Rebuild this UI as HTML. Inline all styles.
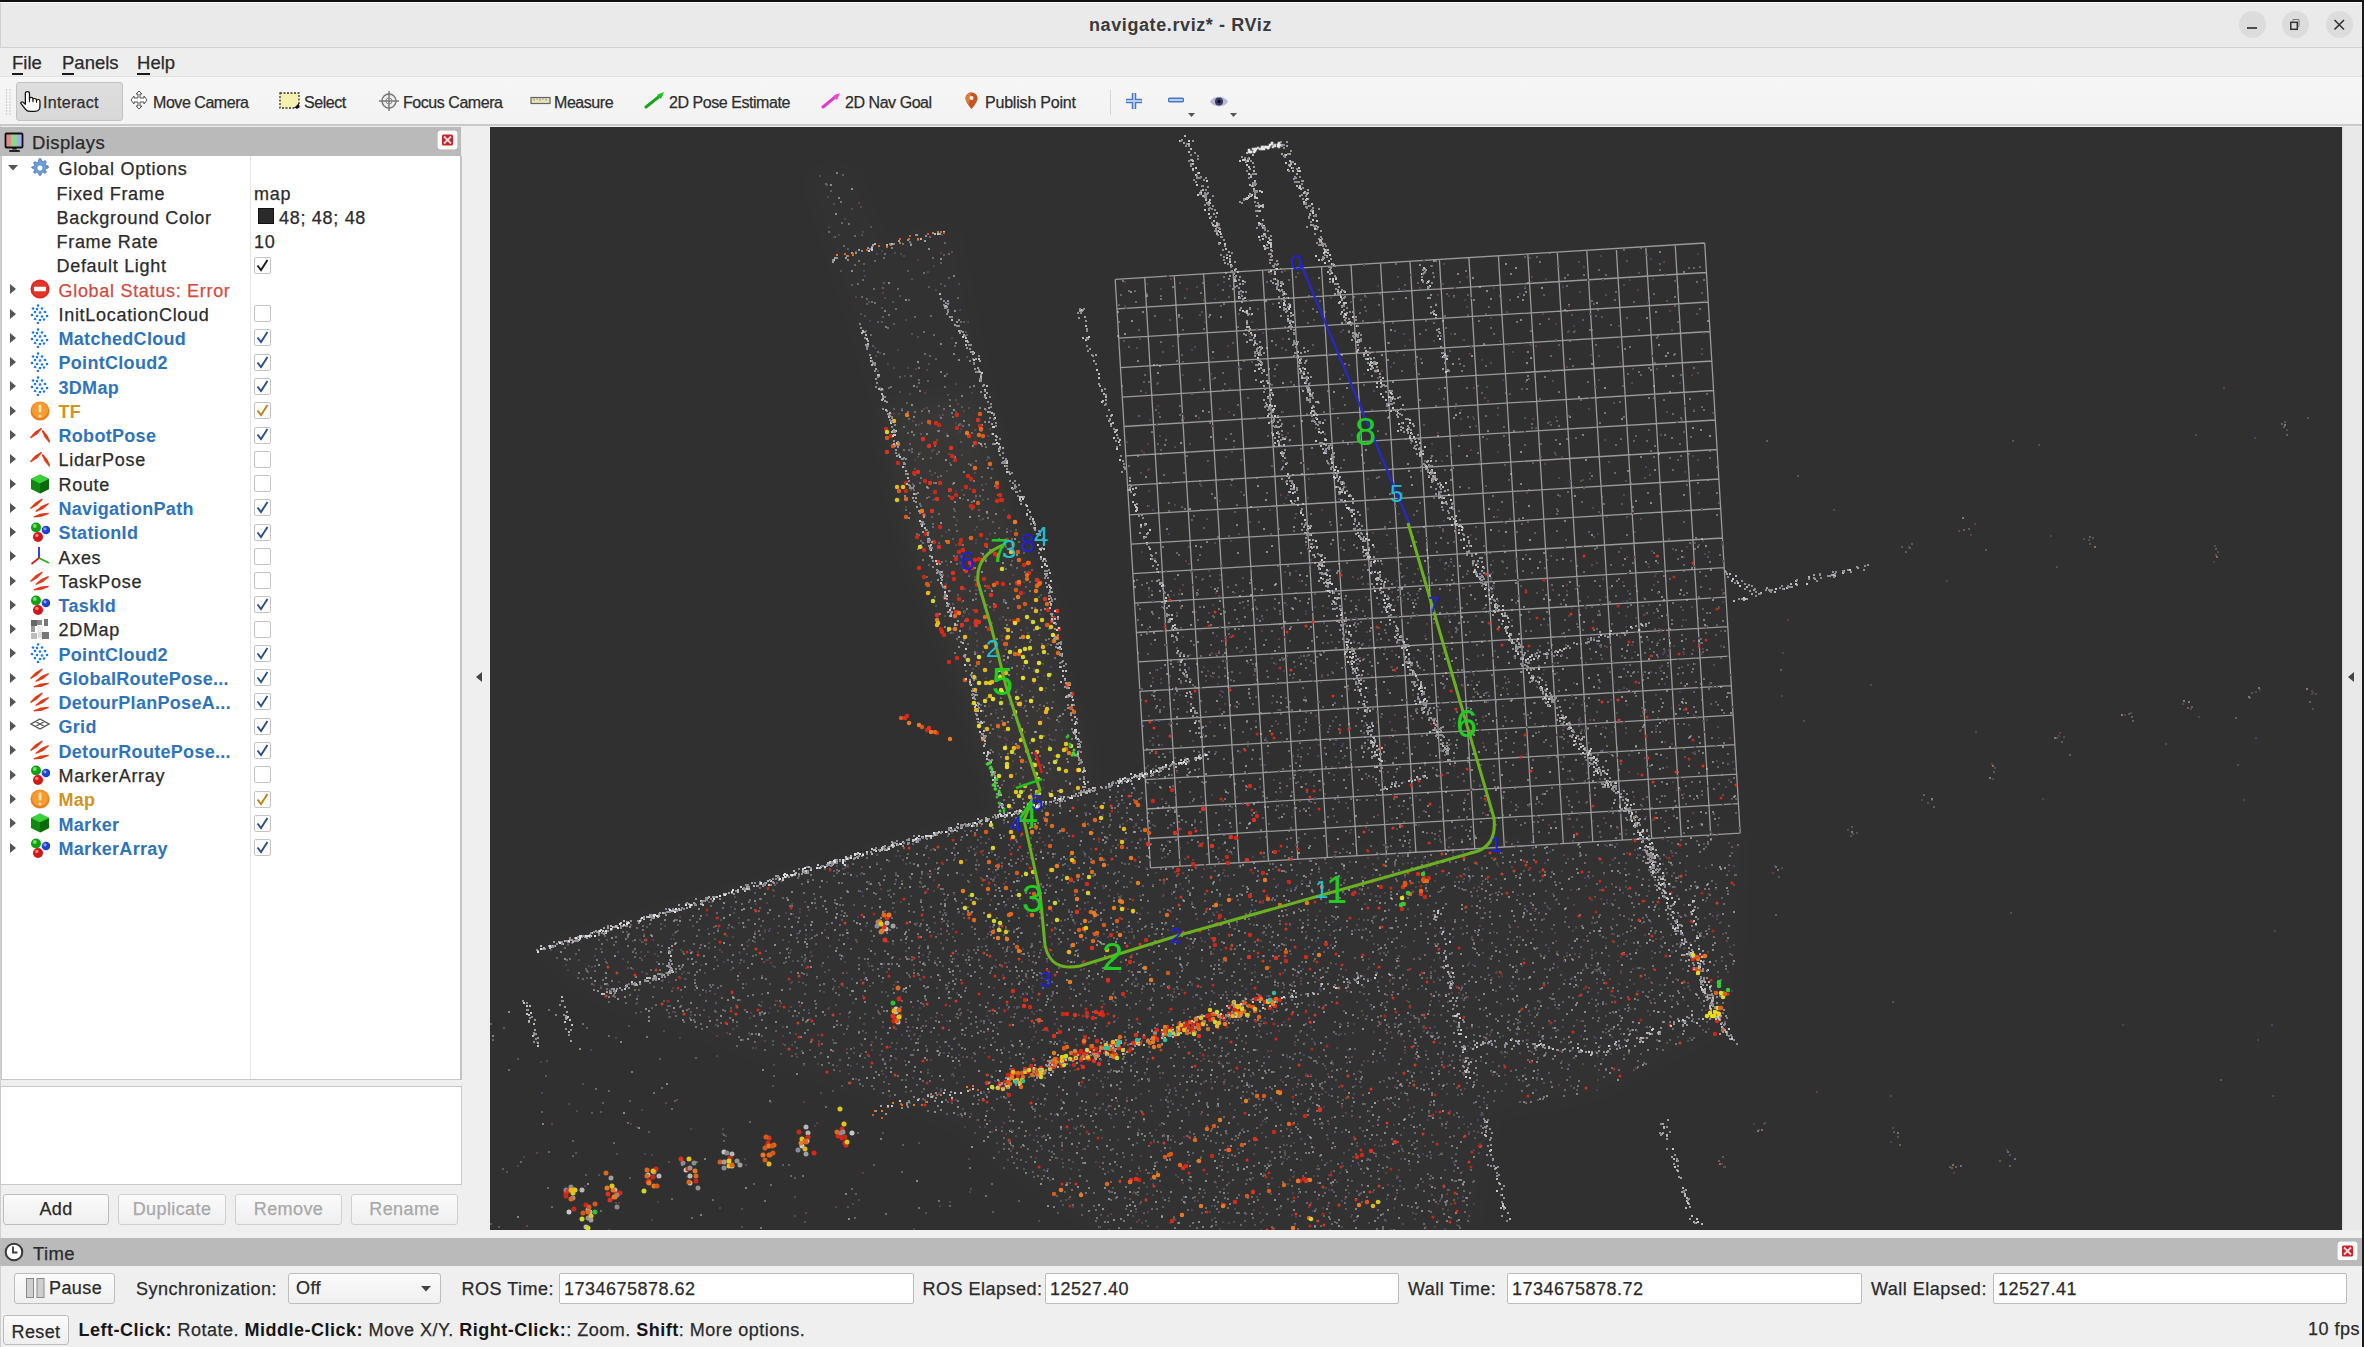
<!DOCTYPE html><html><head><meta charset="utf-8"><style>
*{box-sizing:border-box;margin:0;padding:0}
html,body{width:2364px;height:1347px;overflow:hidden;background:#efefef;font-family:"Liberation Sans",sans-serif;color:#2b2b2b;-webkit-text-stroke:0.25px currentColor}
svg text{-webkit-text-stroke:0}
b,.blue,.orange,.bold{-webkit-text-stroke:0}
b{color:#151515}
.a{position:absolute;white-space:pre}
#titlebar{position:absolute;left:0;top:0;width:2364px;height:48px;background:#eaeaea;border-top:2px solid #111;border-bottom:1px solid #d2d2d2}
#menubar{position:absolute;left:0;top:48px;width:2364px;height:29px;background:#eeeeee;border-bottom:1px solid #e0e0e0}
#toolbar{position:absolute;left:0;top:77px;width:2364px;height:49px;background:linear-gradient(#f6f6f6,#f3f3f3);border-bottom:2px solid #c9c9c9}
.mi{position:absolute;top:52px;font-size:18.5px;color:#2a2a2a}
.mi u{text-decoration:none;border-bottom:2px solid #1a1a1a}
.tb{position:absolute;top:93.5px;letter-spacing:-0.45px;font-size:16px;color:#2e2e2e;line-height:18px}
.dockhdr{position:absolute;background:#bababa}
.tree{position:absolute;left:1px;top:156px;width:461px;height:924px;background:#fff;border:1px solid #c8c8c8;border-right:2px solid #c4c4c4;border-top:none}
.row{position:absolute;font-size:18px;letter-spacing:0.7px;line-height:22px}
.blue{color:#2f73ba;font-weight:bold;letter-spacing:0.3px}
.orange{color:#cf9421;font-weight:bold;letter-spacing:0.3px}
.red{color:#cf4c3e}
.chk{position:absolute;left:254px;width:17px;height:17px;border:1px solid #c4c4c4;border-radius:2px;background:#fff}
.btn{position:absolute;border:1px solid #bdbdbd;border-radius:3px;background:linear-gradient(#fbfbfb,#efefef);font-size:18px;letter-spacing:0.4px;text-align:center;line-height:29px;color:#2a2a2a}
.btn.dis{color:#a8a8a8;border-color:#cfcfcf}
.field{position:absolute;background:#fff;border:1px solid #bcbcbc;border-radius:2px;font-size:18px;letter-spacing:0.5px;line-height:30px;padding-left:4px;color:#2a2a2a}
.lbl{position:absolute;font-size:18px;letter-spacing:0.5px;color:#2a2a2a;line-height:22px}
#v3d{position:absolute;left:490px;top:127px;width:1852px;height:1103px;background:#303030;overflow:hidden}#v3d svg{position:absolute;left:0;top:0}</style></head><body><div id="titlebar"></div>
<div class="a" style="left:0;top:2px;width:2362px;height:1px;background:#fafafa"></div>
<div class="a" style="left:0;top:3px;width:1px;height:1344px;background:#d0d0d0"></div>
<div class="a bold" style="left:1089px;top:15.3px;font-size:18px;font-weight:bold;color:#3a3a3a;letter-spacing:0.6px">navigate.rviz* - RViz</div>
<div class="a" style="left:2239px;top:11px;width:27px;height:27px;border-radius:50%;background:#dcdcdc"></div>
<div class="a" style="left:2282px;top:11px;width:27px;height:27px;border-radius:50%;background:#dcdcdc"></div>
<div class="a" style="left:2326px;top:11px;width:27px;height:27px;border-radius:50%;background:#dcdcdc"></div>
<svg class="a" style="left:2245px;top:18px" width="14" height="14" viewBox="0 0 14 14"><path d="M2 10h10" stroke="#333" stroke-width="1.7"/></svg>
<svg class="a" style="left:2289px;top:18px" width="13" height="13" viewBox="0 0 13 13"><rect x="1.8" y="4.3" width="6.5" height="7" fill="none" stroke="#333" stroke-width="1.5"/><path d="M4 3.5V1.5h6v7H8.5" fill="none" stroke="#777" stroke-width="1"/></svg>
<svg class="a" style="left:2332px;top:18px" width="14" height="14" viewBox="0 0 14 14"><path d="M2.5 2l9.5 9.5M12 2l-9.5 9.5" stroke="#333" stroke-width="1.6"/></svg>
<div id="menubar"></div>
<div class="mi" style="left:12px"><u>F</u>ile</div>
<div class="mi" style="left:62px"><u>P</u>anels</div>
<div class="mi" style="left:137px"><u>H</u>elp</div>
<div id="toolbar"></div>
<svg class="a" style="left:5px;top:88px" width="7" height="28" viewBox="0 0 7 28"><circle cx="1.5" cy="2" r="0.7" fill="#bbb"/><circle cx="1.5" cy="5" r="0.7" fill="#bbb"/><circle cx="1.5" cy="8" r="0.7" fill="#bbb"/><circle cx="1.5" cy="11" r="0.7" fill="#bbb"/><circle cx="1.5" cy="14" r="0.7" fill="#bbb"/><circle cx="1.5" cy="17" r="0.7" fill="#bbb"/><circle cx="1.5" cy="20" r="0.7" fill="#bbb"/><circle cx="1.5" cy="23" r="0.7" fill="#bbb"/><circle cx="1.5" cy="26" r="0.7" fill="#bbb"/><circle cx="5" cy="2" r="0.7" fill="#bbb"/><circle cx="5" cy="5" r="0.7" fill="#bbb"/><circle cx="5" cy="8" r="0.7" fill="#bbb"/><circle cx="5" cy="11" r="0.7" fill="#bbb"/><circle cx="5" cy="14" r="0.7" fill="#bbb"/><circle cx="5" cy="17" r="0.7" fill="#bbb"/><circle cx="5" cy="20" r="0.7" fill="#bbb"/><circle cx="5" cy="23" r="0.7" fill="#bbb"/><circle cx="5" cy="26" r="0.7" fill="#bbb"/></svg>
<div class="a" style="left:16px;top:82px;width:107px;height:39px;border:1px solid #c2c2c2;border-radius:3px;background:linear-gradient(#dedede,#d8d8d8)"></div>
<svg class="a" style="left:19.5px;top:90.5px" width="21" height="21" viewBox="0.4 0.4 18 20" preserveAspectRatio="none"><path d="M5 13V2.75a1.75 1.75 0 0 1 3.5 0V8a1.5 1.5 0 0 1 3 0V9a1.5 1.5 0 0 1 3 0V10a1.5 1.5 0 0 1 3 0V15.5c0 2.5-1.8 4.3-4.3 4.3H8.8c-1.7 0-2.9-.9-3.8-2.2L1.3 12.5c-.7-1 .6-2.3 1.6-1.5L5 13z" fill="#fff" stroke="#111" stroke-width="1.1" stroke-linejoin="round"/><path d="M8.5 8V11M11.5 9V11M14.5 10V11.5" stroke="#111" stroke-width="0.9"/></svg>
<div class="tb" style="left:43px;letter-spacing:0.3px">Interact</div>
<svg class="a" style="left:129px;top:90px" width="21" height="21" viewBox="0 0 21 21"><path d="M10 1l3 3h-2v4h4V6l3 4-3 4v-2h-4v4h2l-3 3-3-3h2v-4H5v2l-3-4 3-4v2h4V4H7z" fill="#fff" stroke="#555" stroke-width="1"/></svg>
<div class="tb" style="left:153px">Move Camera</div>
<svg class="a" style="left:279px;top:92px" width="22" height="17" viewBox="0 0 22 17"><rect x="1" y="1" width="19" height="15" fill="#f4f0b0" stroke="#333" stroke-width="1.3" stroke-dasharray="2 1.5"/><path d="M15 16l5-5v5z" fill="#111"/></svg>
<div class="tb" style="left:304px">Select</div>
<svg class="a" style="left:378px;top:90px" width="22" height="22" viewBox="0 0 22 22"><circle cx="11" cy="11" r="7" fill="#eee" stroke="#777" stroke-width="1.4"/><path d="M11 1v20M1 11h20" stroke="#777" stroke-width="1.4"/><circle cx="11" cy="11" r="3" fill="none" stroke="#888"/></svg>
<div class="tb" style="left:403px">Focus Camera</div>
<svg class="a" style="left:530px;top:96px" width="21" height="9" viewBox="0 0 21 9"><rect x="1" y="1.5" width="19" height="6" fill="#e8e4b8" stroke="#666" stroke-width="1.2"/><path d="M4 2v3M7 2v2M10 2v3M13 2v2M16 2v3" stroke="#888" stroke-width="0.8"/></svg>
<div class="tb" style="left:554px">Measure</div>
<svg class="a" style="left:644px;top:92px" width="21" height="17" viewBox="0 0 21 17"><path d="M2 15L17 3" stroke="#1aa51a" stroke-width="3" stroke-linecap="round"/><path d="M20 0l-7 3 4 4z" fill="#1ec21e"/></svg>
<div class="tb" style="left:669px">2D Pose Estimate</div>
<svg class="a" style="left:821px;top:92px" width="21" height="17" viewBox="0 0 21 17"><path d="M2 15L16 3.5" stroke="#e23ad0" stroke-width="3" stroke-linecap="round"/><path d="M19 1l-7 3 4 4z" fill="#e84ad8"/></svg>
<div class="tb" style="left:845px">2D Nav Goal</div>
<svg class="a" style="left:965px;top:92px" width="13" height="17" viewBox="0 0 13 17"><path d="M6.5 0.5C3 .5 .5 3 .5 6.5c0 4 6 10.5 6 10.5s6-6.5 6-10.5C12.5 3 10 .5 6.5.5z" fill="#c4551e"/><path d="M6.5.5C3 .5 .5 3 .5 6.5c0 2 1.5 4.5 3 6.5" fill="#e07a3a"/><circle cx="6.5" cy="6" r="2" fill="#fff"/></svg>
<div class="tb" style="left:985px;letter-spacing:-0.2px">Publish Point</div>
<div class="a" style="left:1110px;top:90px;width:1px;height:25px;background:#d6d6d6"></div>
<svg class="a" style="left:1126px;top:93px" width="16" height="16" viewBox="0 0 16 16"><path d="M8 1v14M1 8h14" stroke="#4a78c0" stroke-width="4.5" stroke-linecap="round"/><path d="M8 1v14M1 8h14" stroke="#b9cdee" stroke-width="1.8" stroke-linecap="round"/></svg>
<svg class="a" style="left:1168px;top:97px" width="16" height="6" viewBox="0 0 16 6"><path d="M2 3h12" stroke="#4a78c0" stroke-width="5" stroke-linecap="round"/><path d="M2 3h12" stroke="#b9cdee" stroke-width="2" stroke-linecap="round"/></svg>
<svg class="a" style="left:1188px;top:113px" width="7" height="4" viewBox="0 0 7 4"><path d="M0 0h7l-3.5 4z" fill="#555"/></svg>
<svg class="a" style="left:1209px;top:95px" width="20" height="13" viewBox="0 0 20 13"><path d="M1 6.5C5 0 15 0 19 6.5 15 13 5 13 1 6.5z" fill="#b8b8d0"/><circle cx="10" cy="6.5" r="4" fill="#3a3a6a"/><circle cx="10" cy="6.5" r="1.5" fill="#000"/></svg>
<svg class="a" style="left:1230px;top:113px" width="7" height="4" viewBox="0 0 7 4"><path d="M0 0h7l-3.5 4z" fill="#555"/></svg>
<div class="dockhdr" style="left:0;top:127px;width:461px;height:29px"></div>
<svg class="a" style="left:1px;top:130px" width="24" height="24" viewBox="0 0 24 24"><rect x="4" y="4" width="6" height="13" fill="#e08a8a"/><rect x="10" y="4" width="6" height="13" fill="#8ad88a"/><rect x="16" y="4" width="5" height="13" fill="#a8a8f0"/><rect x="4.5" y="3.5" width="17" height="14" fill="none" stroke="#111" stroke-width="1.8" rx="1"/><path d="M12 17.5h3l1 2h-5z" fill="#111"/><rect x="8" y="20" width="11" height="2" rx="1" fill="#222"/></svg>
<div class="a" style="left:32px;top:131.5px;font-size:18.5px;letter-spacing:0.4px;color:#2a2a2a">Displays</div>
<svg class="a" style="left:437px;top:130px" width="21" height="20" viewBox="0 0 21 20"><rect x="0" y="0" width="21" height="20" rx="3" fill="#fafafa" stroke="#9a9a9a" stroke-width="0.8"/><rect x="5" y="4.5" width="11" height="11" rx="1.5" fill="#c8222a"/><path d="M7 6.5l7 7M14 6.5l-7 7" stroke="#ffdede" stroke-width="1.8"/></svg>
<div class="tree"></div>
<div class="a" style="left:250px;top:156px;width:1px;height:923px;background:#e6e6e6"></div>
<svg class="a" style="left:8px;top:165px" width="10" height="6" viewBox="0 0 10 6"><path d="M0 0h10L5 5.5z" fill="#555"/></svg>
<svg class="a" style="left:30px;top:158px" width="20" height="20" viewBox="0 0 20 20"><g fill="#6f9fd8" stroke="#3f74b8" stroke-width="0.8"><path d="M9 0.8h2l.5 2.4 1.6.7 2-1.4 1.4 1.4-1.4 2 .7 1.6 2.4.5v2l-2.4.5-.7 1.6 1.4 2-1.4 1.4-2-1.4-1.6.7-.5 2.4H9l-.5-2.4-1.6-.7-2 1.4-1.4-1.4 1.4-2-.7-1.6-2.4-.5V9l2.4-.5.7-1.6-1.4-2 1.4-1.4 2 1.4 1.6-.7z"/></g><circle cx="10" cy="10" r="3.2" fill="#fff" stroke="#3f74b8" stroke-width="0.8"/></svg>
<div class="row " style="left:58.5px;top:158.2px">Global Options</div>
<div class="row " style="left:56.5px;top:182.5px">Fixed Frame</div>
<div class="row" style="left:254px;top:182.5px">map</div>
<div class="row " style="left:56.5px;top:206.7px">Background Color</div>
<div class="a" style="left:257.5px;top:208.0px;width:16px;height:16px;background:#2a2a2a;border:1px solid #111"></div>
<div class="row" style="left:279px;top:206.7px">48; 48; 48</div>
<div class="row " style="left:56.5px;top:231.0px">Frame Rate</div>
<div class="row" style="left:254px;top:231.0px">10</div>
<div class="row " style="left:56.5px;top:255.3px">Default Light</div>
<div class="chk" style="top:256.6px"></div>
<svg class="a" style="left:254px;top:257px" width="17" height="17" viewBox="0 0 17 17"><path d="M3.5 8.5L7 13 13.5 3" fill="none" stroke="#1a1a1a" stroke-width="1.9"/></svg>
<svg class="a" style="left:10px;top:284px" width="6" height="10" viewBox="0 0 6 10"><path d="M0 0l6 5-6 5z" fill="#555"/></svg>
<svg class="a" style="left:30px;top:279px" width="20" height="20" viewBox="0 0 20 20"><circle cx="10" cy="10" r="9.5" fill="#d9261c"/><circle cx="10" cy="10" r="8" fill="#e6332a"/><rect x="4" y="7.8" width="12" height="4.4" rx="1" fill="#fff"/></svg>
<div class="row red" style="left:58.5px;top:279.6px">Global Status: Error</div>
<svg class="a" style="left:10px;top:309px" width="6" height="10" viewBox="0 0 6 10"><path d="M0 0l6 5-6 5z" fill="#555"/></svg>
<svg class="a" style="left:30px;top:304px" width="20" height="20" viewBox="0 0 20 20"><circle cx="8" cy="1.5" r="1.3" fill="#1d7ad6"/><circle cx="3" cy="4.5" r="1.3" fill="#1d7ad6"/><circle cx="7" cy="5" r="1.3" fill="#1d7ad6"/><circle cx="12" cy="4.5" r="1.3" fill="#1d7ad6"/><circle cx="5" cy="8" r="1.3" fill="#1d7ad6"/><circle cx="10" cy="8.5" r="1.3" fill="#1d7ad6"/><circle cx="15" cy="8" r="1.3" fill="#1d7ad6"/><circle cx="2" cy="11" r="1.3" fill="#1d7ad6"/><circle cx="7" cy="12" r="1.3" fill="#1d7ad6"/><circle cx="12" cy="12.5" r="1.3" fill="#1d7ad6"/><circle cx="17" cy="12" r="1.3" fill="#1d7ad6"/><circle cx="5" cy="15" r="1.3" fill="#1d7ad6"/><circle cx="10" cy="16" r="1.3" fill="#1d7ad6"/><circle cx="14" cy="15.5" r="1.3" fill="#1d7ad6"/><circle cx="8" cy="19" r="1.3" fill="#1d7ad6"/></svg>
<div class="row " style="left:58.5px;top:303.8px">InitLocationCloud</div>
<div class="chk" style="top:305.1px"></div>
<svg class="a" style="left:10px;top:333px" width="6" height="10" viewBox="0 0 6 10"><path d="M0 0l6 5-6 5z" fill="#555"/></svg>
<svg class="a" style="left:30px;top:328px" width="20" height="20" viewBox="0 0 20 20"><circle cx="8" cy="1.5" r="1.3" fill="#1d7ad6"/><circle cx="3" cy="4.5" r="1.3" fill="#1d7ad6"/><circle cx="7" cy="5" r="1.3" fill="#1d7ad6"/><circle cx="12" cy="4.5" r="1.3" fill="#1d7ad6"/><circle cx="5" cy="8" r="1.3" fill="#1d7ad6"/><circle cx="10" cy="8.5" r="1.3" fill="#1d7ad6"/><circle cx="15" cy="8" r="1.3" fill="#1d7ad6"/><circle cx="2" cy="11" r="1.3" fill="#1d7ad6"/><circle cx="7" cy="12" r="1.3" fill="#1d7ad6"/><circle cx="12" cy="12.5" r="1.3" fill="#1d7ad6"/><circle cx="17" cy="12" r="1.3" fill="#1d7ad6"/><circle cx="5" cy="15" r="1.3" fill="#1d7ad6"/><circle cx="10" cy="16" r="1.3" fill="#1d7ad6"/><circle cx="14" cy="15.5" r="1.3" fill="#1d7ad6"/><circle cx="8" cy="19" r="1.3" fill="#1d7ad6"/></svg>
<div class="row blue" style="left:58.5px;top:328.1px">MatchedCloud</div>
<div class="chk" style="top:329.4px"></div>
<svg class="a" style="left:254px;top:329px" width="17" height="17" viewBox="0 0 17 17"><path d="M3.5 8.5L7 13 13.5 3" fill="none" stroke="#2c4f86" stroke-width="1.9"/></svg>
<svg class="a" style="left:10px;top:357px" width="6" height="10" viewBox="0 0 6 10"><path d="M0 0l6 5-6 5z" fill="#555"/></svg>
<svg class="a" style="left:30px;top:352px" width="20" height="20" viewBox="0 0 20 20"><circle cx="8" cy="1.5" r="1.3" fill="#1d7ad6"/><circle cx="3" cy="4.5" r="1.3" fill="#1d7ad6"/><circle cx="7" cy="5" r="1.3" fill="#1d7ad6"/><circle cx="12" cy="4.5" r="1.3" fill="#1d7ad6"/><circle cx="5" cy="8" r="1.3" fill="#1d7ad6"/><circle cx="10" cy="8.5" r="1.3" fill="#1d7ad6"/><circle cx="15" cy="8" r="1.3" fill="#1d7ad6"/><circle cx="2" cy="11" r="1.3" fill="#1d7ad6"/><circle cx="7" cy="12" r="1.3" fill="#1d7ad6"/><circle cx="12" cy="12.5" r="1.3" fill="#1d7ad6"/><circle cx="17" cy="12" r="1.3" fill="#1d7ad6"/><circle cx="5" cy="15" r="1.3" fill="#1d7ad6"/><circle cx="10" cy="16" r="1.3" fill="#1d7ad6"/><circle cx="14" cy="15.5" r="1.3" fill="#1d7ad6"/><circle cx="8" cy="19" r="1.3" fill="#1d7ad6"/></svg>
<div class="row blue" style="left:58.5px;top:352.4px">PointCloud2</div>
<div class="chk" style="top:353.7px"></div>
<svg class="a" style="left:254px;top:354px" width="17" height="17" viewBox="0 0 17 17"><path d="M3.5 8.5L7 13 13.5 3" fill="none" stroke="#2c4f86" stroke-width="1.9"/></svg>
<svg class="a" style="left:10px;top:381px" width="6" height="10" viewBox="0 0 6 10"><path d="M0 0l6 5-6 5z" fill="#555"/></svg>
<svg class="a" style="left:30px;top:376px" width="20" height="20" viewBox="0 0 20 20"><circle cx="8" cy="1.5" r="1.3" fill="#1d7ad6"/><circle cx="3" cy="4.5" r="1.3" fill="#1d7ad6"/><circle cx="7" cy="5" r="1.3" fill="#1d7ad6"/><circle cx="12" cy="4.5" r="1.3" fill="#1d7ad6"/><circle cx="5" cy="8" r="1.3" fill="#1d7ad6"/><circle cx="10" cy="8.5" r="1.3" fill="#1d7ad6"/><circle cx="15" cy="8" r="1.3" fill="#1d7ad6"/><circle cx="2" cy="11" r="1.3" fill="#1d7ad6"/><circle cx="7" cy="12" r="1.3" fill="#1d7ad6"/><circle cx="12" cy="12.5" r="1.3" fill="#1d7ad6"/><circle cx="17" cy="12" r="1.3" fill="#1d7ad6"/><circle cx="5" cy="15" r="1.3" fill="#1d7ad6"/><circle cx="10" cy="16" r="1.3" fill="#1d7ad6"/><circle cx="14" cy="15.5" r="1.3" fill="#1d7ad6"/><circle cx="8" cy="19" r="1.3" fill="#1d7ad6"/></svg>
<div class="row blue" style="left:58.5px;top:376.6px">3DMap</div>
<div class="chk" style="top:377.9px"></div>
<svg class="a" style="left:254px;top:378px" width="17" height="17" viewBox="0 0 17 17"><path d="M3.5 8.5L7 13 13.5 3" fill="none" stroke="#2c4f86" stroke-width="1.9"/></svg>
<svg class="a" style="left:10px;top:406px" width="6" height="10" viewBox="0 0 6 10"><path d="M0 0l6 5-6 5z" fill="#555"/></svg>
<svg class="a" style="left:30px;top:401px" width="20" height="20" viewBox="0 0 20 20"><circle cx="10" cy="10" r="9.5" fill="#e8801a"/><circle cx="10" cy="9" r="8" fill="#f59b30"/><rect x="8.6" y="3.5" width="2.8" height="8" rx="1.2" fill="#fde0b0"/><circle cx="10" cy="15" r="1.6" fill="#fde0b0"/></svg>
<div class="row orange" style="left:58.5px;top:400.9px">TF</div>
<div class="chk" style="top:402.2px"></div>
<svg class="a" style="left:254px;top:402px" width="17" height="17" viewBox="0 0 17 17"><path d="M3.5 8.5L7 13 13.5 3" fill="none" stroke="#b78416" stroke-width="1.9"/></svg>
<svg class="a" style="left:10px;top:430px" width="6" height="10" viewBox="0 0 6 10"><path d="M0 0l6 5-6 5z" fill="#555"/></svg>
<svg class="a" style="left:30px;top:425px" width="20" height="20" viewBox="0 0 20 20"><polygon points="1.0,13.3 7.2,9.3 12.1,3.7 11.1,2.7 4.9,6.7 0.0,12.3" fill="#e03a1a"/><polygon points="11.7,5.8 14.6,12.3 19.2,17.7 20.4,16.9 17.5,10.4 12.9,5.0" fill="#e03a1a"/></svg>
<div class="row blue" style="left:58.5px;top:425.2px">RobotPose</div>
<div class="chk" style="top:426.5px"></div>
<svg class="a" style="left:254px;top:426px" width="17" height="17" viewBox="0 0 17 17"><path d="M3.5 8.5L7 13 13.5 3" fill="none" stroke="#2c4f86" stroke-width="1.9"/></svg>
<svg class="a" style="left:10px;top:454px" width="6" height="10" viewBox="0 0 6 10"><path d="M0 0l6 5-6 5z" fill="#555"/></svg>
<svg class="a" style="left:30px;top:449px" width="20" height="20" viewBox="0 0 20 20"><polygon points="1.0,13.3 7.2,9.3 12.1,3.7 11.1,2.7 4.9,6.7 0.0,12.3" fill="#e03a1a"/><polygon points="11.7,5.8 14.6,12.3 19.2,17.7 20.4,16.9 17.5,10.4 12.9,5.0" fill="#e03a1a"/></svg>
<div class="row " style="left:58.5px;top:449.4px">LidarPose</div>
<div class="chk" style="top:450.7px"></div>
<svg class="a" style="left:10px;top:479px" width="6" height="10" viewBox="0 0 6 10"><path d="M0 0l6 5-6 5z" fill="#555"/></svg>
<svg class="a" style="left:30px;top:474px" width="20" height="20" viewBox="0 0 20 20"><path d="M10 .5l9 4.5v10l-9 4.5-9-4.5V5z" fill="#0f8a0f"/><path d="M10 .5l9 4.5-9 4.5-9-4.5z" fill="#3ad23a"/><path d="M10 9.5l9-4.5v10l-9 4.5z" fill="#0a6a0a"/></svg>
<div class="row " style="left:58.5px;top:473.7px">Route</div>
<div class="chk" style="top:475.0px"></div>
<svg class="a" style="left:10px;top:503px" width="6" height="10" viewBox="0 0 6 10"><path d="M0 0l6 5-6 5z" fill="#555"/></svg>
<svg class="a" style="left:30px;top:498px" width="20" height="20" viewBox="0 0 20 20"><polygon points="0.9,11.1 7.5,7.0 12.8,1.5 12.0,0.5 5.4,4.6 0.1,10.1" fill="#e03a1a"/><polygon points="6.0,14.1 13.1,10.9 19.0,5.9 18.4,4.9 11.3,8.1 5.4,13.1" fill="#e03a1a"/><polygon points="3.9,19.4 11.6,18.7 18.8,16.0 18.6,14.8 10.9,15.5 3.7,18.2" fill="#e03a1a"/></svg>
<div class="row blue" style="left:58.5px;top:498.0px">NavigationPath</div>
<div class="chk" style="top:499.3px"></div>
<svg class="a" style="left:254px;top:499px" width="17" height="17" viewBox="0 0 17 17"><path d="M3.5 8.5L7 13 13.5 3" fill="none" stroke="#2c4f86" stroke-width="1.9"/></svg>
<svg class="a" style="left:10px;top:527px" width="6" height="10" viewBox="0 0 6 10"><path d="M0 0l6 5-6 5z" fill="#555"/></svg>
<svg class="a" style="left:30px;top:522px" width="20" height="20" viewBox="0 0 20 20"><circle cx="6" cy="5.5" r="5" fill="#12a012"/><circle cx="4.8" cy="4" r="2" fill="#6ee06e"/><circle cx="16" cy="8" r="4.3" fill="#2040d0"/><circle cx="15" cy="6.8" r="1.6" fill="#8aa0f0"/><circle cx="8" cy="15" r="5" fill="#d01818"/><circle cx="6.8" cy="13.5" r="1.8" fill="#f08080"/></svg>
<div class="row blue" style="left:58.5px;top:522.2px">StationId</div>
<div class="chk" style="top:523.5px"></div>
<svg class="a" style="left:254px;top:524px" width="17" height="17" viewBox="0 0 17 17"><path d="M3.5 8.5L7 13 13.5 3" fill="none" stroke="#2c4f86" stroke-width="1.9"/></svg>
<svg class="a" style="left:10px;top:551px" width="6" height="10" viewBox="0 0 6 10"><path d="M0 0l6 5-6 5z" fill="#555"/></svg>
<svg class="a" style="left:30px;top:546px" width="20" height="20" viewBox="0 0 20 20"><path d="M9 1v11" stroke="#2030d0" stroke-width="1.8"/><path d="M9 12L1.5 18" stroke="#d02020" stroke-width="1.8"/><path d="M9 12l10 5" stroke="#20b020" stroke-width="1.8"/></svg>
<div class="row " style="left:58.5px;top:546.5px">Axes</div>
<div class="chk" style="top:547.8px"></div>
<svg class="a" style="left:10px;top:576px" width="6" height="10" viewBox="0 0 6 10"><path d="M0 0l6 5-6 5z" fill="#555"/></svg>
<svg class="a" style="left:30px;top:571px" width="20" height="20" viewBox="0 0 20 20"><polygon points="0.9,11.1 7.5,7.0 12.8,1.5 12.0,0.5 5.4,4.6 0.1,10.1" fill="#e03a1a"/><polygon points="6.0,14.1 13.1,10.9 19.0,5.9 18.4,4.9 11.3,8.1 5.4,13.1" fill="#e03a1a"/><polygon points="3.9,19.4 11.6,18.7 18.8,16.0 18.6,14.8 10.9,15.5 3.7,18.2" fill="#e03a1a"/></svg>
<div class="row " style="left:58.5px;top:570.8px">TaskPose</div>
<div class="chk" style="top:572.1px"></div>
<svg class="a" style="left:10px;top:600px" width="6" height="10" viewBox="0 0 6 10"><path d="M0 0l6 5-6 5z" fill="#555"/></svg>
<svg class="a" style="left:30px;top:595px" width="20" height="20" viewBox="0 0 20 20"><circle cx="6" cy="5.5" r="5" fill="#12a012"/><circle cx="4.8" cy="4" r="2" fill="#6ee06e"/><circle cx="16" cy="8" r="4.3" fill="#2040d0"/><circle cx="15" cy="6.8" r="1.6" fill="#8aa0f0"/><circle cx="8" cy="15" r="5" fill="#d01818"/><circle cx="6.8" cy="13.5" r="1.8" fill="#f08080"/></svg>
<div class="row blue" style="left:58.5px;top:595.1px">TaskId</div>
<div class="chk" style="top:596.4px"></div>
<svg class="a" style="left:254px;top:596px" width="17" height="17" viewBox="0 0 17 17"><path d="M3.5 8.5L7 13 13.5 3" fill="none" stroke="#2c4f86" stroke-width="1.9"/></svg>
<svg class="a" style="left:10px;top:624px" width="6" height="10" viewBox="0 0 6 10"><path d="M0 0l6 5-6 5z" fill="#555"/></svg>
<svg class="a" style="left:30px;top:619px" width="20" height="20" viewBox="0 0 20 20"><rect x="1" y="1" width="6" height="6" fill="#666"/><rect x="7" y="1" width="5" height="5" fill="#888"/><rect x="14" y="0" width="4" height="7" fill="#777"/><rect x="1" y="7" width="4" height="6" fill="#999"/><rect x="1" y="14" width="6" height="6" fill="#bbb"/><rect x="8" y="13" width="5" height="6" fill="#ddd"/><rect x="12" y="13" width="7" height="7" fill="#777"/><rect x="7" y="7" width="6" height="6" fill="#eee"/></svg>
<div class="row " style="left:58.5px;top:619.3px">2DMap</div>
<div class="chk" style="top:620.6px"></div>
<svg class="a" style="left:10px;top:648px" width="6" height="10" viewBox="0 0 6 10"><path d="M0 0l6 5-6 5z" fill="#555"/></svg>
<svg class="a" style="left:30px;top:643px" width="20" height="20" viewBox="0 0 20 20"><circle cx="8" cy="1.5" r="1.3" fill="#1d7ad6"/><circle cx="3" cy="4.5" r="1.3" fill="#1d7ad6"/><circle cx="7" cy="5" r="1.3" fill="#1d7ad6"/><circle cx="12" cy="4.5" r="1.3" fill="#1d7ad6"/><circle cx="5" cy="8" r="1.3" fill="#1d7ad6"/><circle cx="10" cy="8.5" r="1.3" fill="#1d7ad6"/><circle cx="15" cy="8" r="1.3" fill="#1d7ad6"/><circle cx="2" cy="11" r="1.3" fill="#1d7ad6"/><circle cx="7" cy="12" r="1.3" fill="#1d7ad6"/><circle cx="12" cy="12.5" r="1.3" fill="#1d7ad6"/><circle cx="17" cy="12" r="1.3" fill="#1d7ad6"/><circle cx="5" cy="15" r="1.3" fill="#1d7ad6"/><circle cx="10" cy="16" r="1.3" fill="#1d7ad6"/><circle cx="14" cy="15.5" r="1.3" fill="#1d7ad6"/><circle cx="8" cy="19" r="1.3" fill="#1d7ad6"/></svg>
<div class="row blue" style="left:58.5px;top:643.6px">PointCloud2</div>
<div class="chk" style="top:644.9px"></div>
<svg class="a" style="left:254px;top:645px" width="17" height="17" viewBox="0 0 17 17"><path d="M3.5 8.5L7 13 13.5 3" fill="none" stroke="#2c4f86" stroke-width="1.9"/></svg>
<svg class="a" style="left:10px;top:673px" width="6" height="10" viewBox="0 0 6 10"><path d="M0 0l6 5-6 5z" fill="#555"/></svg>
<svg class="a" style="left:30px;top:668px" width="20" height="20" viewBox="0 0 20 20"><polygon points="0.9,11.1 7.5,7.0 12.8,1.5 12.0,0.5 5.4,4.6 0.1,10.1" fill="#e03a1a"/><polygon points="6.0,14.1 13.1,10.9 19.0,5.9 18.4,4.9 11.3,8.1 5.4,13.1" fill="#e03a1a"/><polygon points="3.9,19.4 11.6,18.7 18.8,16.0 18.6,14.8 10.9,15.5 3.7,18.2" fill="#e03a1a"/></svg>
<div class="row blue" style="left:58.5px;top:667.9px">GlobalRoutePose...</div>
<div class="chk" style="top:669.2px"></div>
<svg class="a" style="left:254px;top:669px" width="17" height="17" viewBox="0 0 17 17"><path d="M3.5 8.5L7 13 13.5 3" fill="none" stroke="#2c4f86" stroke-width="1.9"/></svg>
<svg class="a" style="left:10px;top:697px" width="6" height="10" viewBox="0 0 6 10"><path d="M0 0l6 5-6 5z" fill="#555"/></svg>
<svg class="a" style="left:30px;top:692px" width="20" height="20" viewBox="0 0 20 20"><polygon points="0.9,11.1 7.5,7.0 12.8,1.5 12.0,0.5 5.4,4.6 0.1,10.1" fill="#e03a1a"/><polygon points="6.0,14.1 13.1,10.9 19.0,5.9 18.4,4.9 11.3,8.1 5.4,13.1" fill="#e03a1a"/><polygon points="3.9,19.4 11.6,18.7 18.8,16.0 18.6,14.8 10.9,15.5 3.7,18.2" fill="#e03a1a"/></svg>
<div class="row blue" style="left:58.5px;top:692.1px">DetourPlanPoseA...</div>
<div class="chk" style="top:693.4px"></div>
<svg class="a" style="left:254px;top:693px" width="17" height="17" viewBox="0 0 17 17"><path d="M3.5 8.5L7 13 13.5 3" fill="none" stroke="#2c4f86" stroke-width="1.9"/></svg>
<svg class="a" style="left:10px;top:721px" width="6" height="10" viewBox="0 0 6 10"><path d="M0 0l6 5-6 5z" fill="#555"/></svg>
<svg class="a" style="left:30px;top:716px" width="20" height="20" viewBox="0 0 20 20"><path d="M10 3l9 5-9 5-9-5z M5.5 5.5l9 5 M14.5 5.5l-9 5" fill="none" stroke="#555" stroke-width="1.3"/></svg>
<div class="row blue" style="left:58.5px;top:716.4px">Grid</div>
<div class="chk" style="top:717.7px"></div>
<svg class="a" style="left:254px;top:718px" width="17" height="17" viewBox="0 0 17 17"><path d="M3.5 8.5L7 13 13.5 3" fill="none" stroke="#2c4f86" stroke-width="1.9"/></svg>
<svg class="a" style="left:10px;top:745px" width="6" height="10" viewBox="0 0 6 10"><path d="M0 0l6 5-6 5z" fill="#555"/></svg>
<svg class="a" style="left:30px;top:740px" width="20" height="20" viewBox="0 0 20 20"><polygon points="0.9,11.1 7.5,7.0 12.8,1.5 12.0,0.5 5.4,4.6 0.1,10.1" fill="#e03a1a"/><polygon points="6.0,14.1 13.1,10.9 19.0,5.9 18.4,4.9 11.3,8.1 5.4,13.1" fill="#e03a1a"/><polygon points="3.9,19.4 11.6,18.7 18.8,16.0 18.6,14.8 10.9,15.5 3.7,18.2" fill="#e03a1a"/></svg>
<div class="row blue" style="left:58.5px;top:740.7px">DetourRoutePose...</div>
<div class="chk" style="top:742.0px"></div>
<svg class="a" style="left:254px;top:742px" width="17" height="17" viewBox="0 0 17 17"><path d="M3.5 8.5L7 13 13.5 3" fill="none" stroke="#2c4f86" stroke-width="1.9"/></svg>
<svg class="a" style="left:10px;top:770px" width="6" height="10" viewBox="0 0 6 10"><path d="M0 0l6 5-6 5z" fill="#555"/></svg>
<svg class="a" style="left:30px;top:765px" width="20" height="20" viewBox="0 0 20 20"><circle cx="6" cy="5.5" r="5" fill="#12a012"/><circle cx="4.8" cy="4" r="2" fill="#6ee06e"/><circle cx="16" cy="8" r="4.3" fill="#2040d0"/><circle cx="15" cy="6.8" r="1.6" fill="#8aa0f0"/><circle cx="8" cy="15" r="5" fill="#d01818"/><circle cx="6.8" cy="13.5" r="1.8" fill="#f08080"/></svg>
<div class="row " style="left:58.5px;top:765.0px">MarkerArray</div>
<div class="chk" style="top:766.2px"></div>
<svg class="a" style="left:10px;top:794px" width="6" height="10" viewBox="0 0 6 10"><path d="M0 0l6 5-6 5z" fill="#555"/></svg>
<svg class="a" style="left:30px;top:789px" width="20" height="20" viewBox="0 0 20 20"><circle cx="10" cy="10" r="9.5" fill="#e8801a"/><circle cx="10" cy="9" r="8" fill="#f59b30"/><rect x="8.6" y="3.5" width="2.8" height="8" rx="1.2" fill="#fde0b0"/><circle cx="10" cy="15" r="1.6" fill="#fde0b0"/></svg>
<div class="row orange" style="left:58.5px;top:789.2px">Map</div>
<div class="chk" style="top:790.5px"></div>
<svg class="a" style="left:254px;top:791px" width="17" height="17" viewBox="0 0 17 17"><path d="M3.5 8.5L7 13 13.5 3" fill="none" stroke="#b78416" stroke-width="1.9"/></svg>
<svg class="a" style="left:10px;top:818px" width="6" height="10" viewBox="0 0 6 10"><path d="M0 0l6 5-6 5z" fill="#555"/></svg>
<svg class="a" style="left:30px;top:813px" width="20" height="20" viewBox="0 0 20 20"><path d="M10 .5l9 4.5v10l-9 4.5-9-4.5V5z" fill="#0f8a0f"/><path d="M10 .5l9 4.5-9 4.5-9-4.5z" fill="#3ad23a"/><path d="M10 9.5l9-4.5v10l-9 4.5z" fill="#0a6a0a"/></svg>
<div class="row blue" style="left:58.5px;top:813.5px">Marker</div>
<div class="chk" style="top:814.8px"></div>
<svg class="a" style="left:254px;top:815px" width="17" height="17" viewBox="0 0 17 17"><path d="M3.5 8.5L7 13 13.5 3" fill="none" stroke="#2c4f86" stroke-width="1.9"/></svg>
<svg class="a" style="left:10px;top:843px" width="6" height="10" viewBox="0 0 6 10"><path d="M0 0l6 5-6 5z" fill="#555"/></svg>
<svg class="a" style="left:30px;top:838px" width="20" height="20" viewBox="0 0 20 20"><circle cx="6" cy="5.5" r="5" fill="#12a012"/><circle cx="4.8" cy="4" r="2" fill="#6ee06e"/><circle cx="16" cy="8" r="4.3" fill="#2040d0"/><circle cx="15" cy="6.8" r="1.6" fill="#8aa0f0"/><circle cx="8" cy="15" r="5" fill="#d01818"/><circle cx="6.8" cy="13.5" r="1.8" fill="#f08080"/></svg>
<div class="row blue" style="left:58.5px;top:837.8px">MarkerArray</div>
<div class="chk" style="top:839.1px"></div>
<svg class="a" style="left:254px;top:839px" width="17" height="17" viewBox="0 0 17 17"><path d="M3.5 8.5L7 13 13.5 3" fill="none" stroke="#2c4f86" stroke-width="1.9"/></svg>
<div class="a" style="left:0;top:1086px;width:462px;height:99px;background:#fff;border:1px solid #c8c8c8"></div>
<div class="btn" style="left:3px;top:1194px;width:106px;height:31px">Add</div>
<div class="btn dis" style="left:118px;top:1194px;width:108px;height:31px">Duplicate</div>
<div class="btn dis" style="left:235px;top:1194px;width:107px;height:31px">Remove</div>
<div class="btn dis" style="left:351px;top:1194px;width:107px;height:31px">Rename</div>
<svg class="a" style="left:476px;top:672px" width="6" height="10" viewBox="0 0 6 10"><path d="M6 0v10L0 5z" fill="#444"/></svg>
<div class="a" style="left:2342px;top:127px;width:20px;height:1103px;background:#e9e9e9;border-left:1px solid #dadada"></div>
<svg class="a" style="left:2348px;top:672px" width="6" height="10" viewBox="0 0 6 10"><path d="M6 0v10L0 5z" fill="#444"/></svg>
<div class="a" style="left:2362px;top:0;width:2px;height:1347px;background:#1a1a1a"></div>
<div id="v3d"><svg width="1852" height="1103" viewBox="490 127 1852 1103"><defs><filter id="hb" x="-20%" y="-20%" width="140%" height="140%"><feGaussianBlur stdDeviation="12"/></filter></defs><polygon points="536,951 1003,816 1150,780 1150,868 1740,833 1731,1019 1600,1090 1491,1110 1470,1230 1100,1230 950,1119 681,1023 600,995" fill="#ffffff" fill-opacity="0.012" filter="url(#hb)"/><polygon points="885,414 973,400 1005,507 1031,560 1053,614 1057,695 1078,727 1085,789 1003,816 985,755 968,691 941,620 916,560" fill="#ffe0c0" fill-opacity="0.04" filter="url(#hb)"/><polygon points="810,175 850,170 880,250 950,228 975,357 1002,455 885,414 860,330" fill="#ffffff" fill-opacity="0.012" filter="url(#hb)"/><path d="M1115.2 279.4L1150.5 867.9M1115.2 279.4L1704.7 243.0M1144.7 277.6L1180.0 866.2M1117.0 308.8L1706.5 272.5M1174.2 275.8L1209.5 864.4M1118.7 338.2L1708.2 302.0M1203.6 273.9L1239.0 862.7M1120.5 367.7L1710.0 331.5M1233.1 272.1L1268.4 860.9M1122.3 397.1L1711.8 361.0M1262.6 270.3L1297.9 859.2M1124.0 426.5L1713.6 390.5M1292.0 268.5L1327.4 857.5M1125.8 455.9L1715.3 420.0M1321.5 266.7L1356.9 855.7M1127.6 485.4L1717.1 449.5M1351.0 264.8L1386.4 854.0M1129.3 514.8L1718.9 479.0M1380.5 263.0L1415.9 852.2M1131.1 544.2L1720.7 508.5M1410.0 261.2L1445.3 850.5M1132.8 573.6L1722.5 538.0M1439.4 259.4L1474.8 848.8M1134.6 603.1L1724.2 567.6M1468.9 257.6L1504.3 847.0M1136.4 632.5L1726.0 597.1M1498.4 255.7L1533.8 845.3M1138.1 661.9L1727.8 626.6M1527.8 253.9L1563.3 843.5M1139.9 691.4L1729.5 656.1M1557.3 252.1L1592.8 841.8M1141.7 720.8L1731.3 685.6M1586.8 250.3L1622.3 840.1M1143.4 750.2L1733.1 715.1M1616.3 248.5L1651.7 838.3M1145.2 779.6L1734.9 744.6M1645.8 246.6L1681.2 836.6M1147.0 809.0L1736.7 774.1M1675.2 244.8L1710.7 834.8M1148.7 838.5L1738.4 803.6M1704.7 243.0L1740.2 833.1M1150.5 867.9L1740.2 833.1" stroke="#9a9a9a" stroke-width="1.3" fill="none"/><path d="M1530 914h0M1486 1128h0M1647 1027h0M716 1003h0M1612 929h0M867 980h0M1020 982h0M864 874h0M1162 1045h0M1087 978h0M1334 1171h0M1218 876h0M635 990h0M1279 1194h0M1213 906h0M1135 1053h0M684 954h0M1380 875h0M1508 939h0M1188 963h0M999 980h0M1302 962h0M1116 1043h0M1111 1150h0M1245 969h0M1569 927h0M1034 1026h0M1454 1021h0M1362 889h0M1724 904h0M1249 1141h0M1100 854h0M1029 1077h0M1195 1137h0M1557 954h0M834 1070h0M1047 980h0M1095 962h0M840 905h0M923 910h0M836 1043h0M1421 914h0M906 988h0M1348 1026h0M1001 1062h0M903 991h0M1152 1030h0M841 898h0M1509 1015h0M1444 1085h0M1519 1080h0M1068 919h0M921 900h0M987 857h0M1235 983h0M1586 966h0M897 928h0M1101 818h0M1527 1005h0M1394 1153h0M1131 1070h0M1471 1170h0M1192 904h0M1632 1030h0M1477 953h0M1089 922h0M592 984h0M1552 872h0M700 948h0M1442 1154h0M1565 1090h0M1660 1041h0M1257 999h0M840 925h0M1485 913h0M1132 984h0M1042 1040h0M1473 876h0M1122 1177h0M1606 1069h0M1695 941h0M1241 1225h0M737 1022h0M1175 1076h0M1073 1205h0M1247 1083h0M1039 833h0M806 1022h0M1176 958h0M1283 1182h0M1190 1017h0M994 930h0M1390 928h0M1256 1105h0M1368 1159h0M1291 1146h0M1237 1038h0M1175 944h0M1190 1177h0M956 951h0M696 962h0M1562 1052h0M1399 1151h0M1117 939h0M1186 1108h0M1325 859h0M1386 861h0M1169 1093h0M1306 974h0M1227 998h0M1358 975h0M871 931h0M1380 1202h0M1374 917h0M1460 1228h0M1438 944h0M987 955h0M1243 1151h0M926 988h0M1220 1192h0M992 1108h0M1399 870h0M1232 1155h0M1618 991h0M1149 1173h0M595 971h0M1376 1154h0M1566 908h0M1387 1002h0M936 1021h0M1238 1138h0M1193 1198h0M1253 1073h0M1429 1089h0M1211 1141h0M1313 892h0M1457 1194h0M953 989h0M1410 1022h0M1018 859h0M906 1065h0M1505 1052h0M1047 1002h0M1155 1028h0M1303 923h0M730 945h0M882 964h0M1523 1041h0M925 965h0M1467 926h0M1412 1077h0M1677 944h0M1120 1089h0M1127 813h0M1662 947h0M1596 1000h0M1410 1006h0M1122 1067h0M1660 859h0M723 908h0M1061 1026h0M1237 1164h0M1291 1114h0M1043 988h0M1338 980h0M976 953h0M1586 855h0M1094 1193h0M1362 938h0M921 1003h0M1359 1195h0M663 964h0M1275 985h0M1100 807h0M917 1085h0M1540 881h0M1238 1020h0M1103 1169h0M1308 925h0M1265 1175h0M1264 1023h0M944 894h0M1235 995h0M690 920h0M954 1039h0M1711 840h0M1367 1168h0M879 1013h0M1296 888h0M1264 926h0M1474 1035h0M1142 820h0M1158 1142h0M1232 946h0M1131 1071h0M1272 1227h0M1467 1083h0M1664 855h0M955 941h0M1729 926h0M1000 1022h0M1494 860h0M1634 943h0M677 920h0M1421 1089h0M1153 963h0M1282 992h0M718 1026h0M1285 906h0M946 1100h0M637 928h0M1041 1084h0M1501 888h0M1428 943h0M1117 1154h0M1669 862h0M880 885h0M1294 1201h0M1065 900h0M1419 1157h0M1396 879h0M1183 900h0M1379 1022h0M1170 1090h0M1424 1129h0M978 899h0M1068 961h0M1041 852h0M1146 926h0M1142 793h0M1273 898h0M1108 1072h0M918 1039h0M1026 874h0M1290 1057h0M883 1059h0M1047 915h0M1010 1142h0M956 901h0M1488 1092h0M1207 1103h0M1173 997h0M1410 1036h0M1579 1051h0M1472 896h0M1319 931h0M1388 877h0M1245 998h0M912 960h0M1157 1191h0M1447 850h0M1114 1022h0M1299 1189h0M1097 1053h0M1228 1054h0M1052 1157h0M902 1080h0M1497 1002h0M1655 1003h0M854 921h0M1254 1106h0M1009 931h0M1179 1047h0M1559 904h0M1102 833h0M1004 1144h0M1335 1222h0M1387 1167h0M997 918h0M633 952h0M919 975h0M815 903h0M1656 931h0M1620 873h0M1538 1070h0M1101 920h0M1435 1039h0M842 883h0M1104 910h0M1614 894h0M975 1054h0M1204 914h0M1299 973h0M1161 869h0M1474 1181h0M1518 1020h0M688 959h0M1226 961h0M714 969h0M1422 1211h0M885 951h0M1066 973h0M1035 1069h0M1619 863h0M1490 933h0M1416 1043h0M1000 1071h0M614 945h0M1440 980h0M1031 947h0M1465 998h0M953 959h0M1103 1087h0M1465 1212h0M1603 1002h0M994 938h0M1069 1160h0M1522 1091h0M1464 1191h0M1206 1081h0M1460 1071h0M937 863h0M1266 1088h0M1233 1023h0M682 967h0M978 1104h0M1601 989h0M1104 860h0M1269 1057h0M1455 920h0M1543 1039h0M1248 1198h0M1298 1040h0M946 915h0M1281 1067h0M1056 1158h0M1328 948h0M891 897h0M1188 1009h0M1196 1017h0M1004 1138h0M1042 811h0M1620 1016h0M1439 1037h0M1380 1082h0M1147 818h0M1596 1006h0M927 1060h0M1118 881h0M990 905h0M1106 1050h0M1103 1104h0M1572 948h0M1415 1018h0M1527 1086h0M871 1067h0M613 996h0M1344 865h0M1624 916h0M1373 1062h0M1625 1040h0M1450 1137h0M1667 978h0M1129 1020h0M914 1071h0M1430 1179h0M1324 1216h0M1189 1180h0M1586 964h0M1366 1019h0M1441 1154h0M684 941h0M1375 1103h0M1683 935h0M1177 987h0M914 912h0M1284 906h0M1197 1161h0M1062 890h0M910 877h0M1119 934h0M1023 980h0M1031 1157h0M1516 1070h0M1004 1149h0M1308 920h0M1257 1061h0M1488 882h0M894 894h0M1095 888h0M1105 1174h0M1117 932h0M1370 1160h0M1311 1058h0M1659 1012h0M1321 1226h0M1122 985h0M1069 1029h0M1139 972h0M1149 1146h0M1298 1084h0M1465 984h0M1142 929h0M1096 808h0M1295 970h0M1329 890h0M1091 948h0M1619 1045h0M1083 940h0M1536 1050h0M1123 1112h0M1009 921h0M1653 902h0M1529 978h0M1404 1189h0M953 975h0M1188 1210h0M912 1015h0M1599 969h0M904 848h0M1628 1011h0M1123 1153h0M1276 887h0M1389 910h0M1405 1159h0M1428 1174h0M1663 1050h0M913 844h0M762 1012h0M1431 973h0M653 997h0M979 865h0M717 913h0M697 1008h0M1463 1185h0M915 924h0M1670 996h0M1134 1085h0M643 926h0M971 831h0M764 1014h0M1463 1201h0M1228 1158h0M615 997h0M1701 936h0M971 1012h0M658 945h0M1332 1224h0M909 904h0M1139 1188h0M1619 1041h0M1377 870h0M1424 1224h0M1203 1151h0M971 914h0M1429 1111h0M1492 943h0M1536 930h0M1593 972h0M1000 965h0M1457 1113h0M723 1010h0M1014 1163h0M1643 879h0M1644 1063h0M885 1064h0M1405 875h0M802 884h0M608 931h0M1207 1105h0M1392 995h0M1211 1131h0M987 950h0M1229 1001h0M565 948h0M1451 972h0M1655 953h0M1638 1000h0M780 953h0M1599 1018h0M1395 864h0M1260 1026h0M1075 976h0M1009 845h0M1553 1049h0M1088 824h0M1256 1091h0M1204 1135h0M848 933h0M820 985h0M1152 1136h0M1089 1080h0M958 1018h0M790 1033h0M1215 1082h0M865 959h0M825 869h0M676 972h0M753 956h0M741 960h0M1028 1149h0M1334 931h0M1492 924h0M1190 1077h0M1200 930h0M980 966h0M1170 1159h0M1468 1221h0M1277 1209h0M978 1120h0M1132 793h0M635 957h0M822 1044h0M1019 976h0M1492 956h0M1258 871h0M1019 918h0M1448 1011h0M1219 1154h0M1515 862h0M1212 921h0M1310 861h0M1171 995h0M1581 980h0M911 1091h0M1257 1140h0M1598 1004h0M1257 994h0M1459 882h0M1408 1206h0M1357 1217h0M1413 1081h0M1420 959h0M1086 938h0M1061 1129h0M1138 931h0M1152 924h0M1141 964h0M1290 951h0M1272 937h0M1295 1153h0M851 949h0M1041 1104h0M999 927h0M1491 1071h0M728 960h0M1355 930h0M1212 1129h0M1044 1176h0M860 1018h0M1427 891h0M1330 993h0M662 974h0M1573 998h0M1214 974h0M920 926h0M1083 984h0M1306 1011h0M961 1114h0M924 963h0M697 936h0M759 1005h0M1307 886h0M1037 889h0M1160 912h0M926 864h0M851 1049h0M1141 831h0M902 1001h0M1442 1124h0M817 935h0M976 1022h0M1496 1019h0M694 1020h0M1264 956h0M1289 904h0M1639 968h0M1323 1196h0M931 1032h0M1360 1117h0M1178 1110h0M861 930h0M1387 1127h0M1130 1171h0M1116 840h0M1289 993h0M841 1025h0M1343 892h0M1519 979h0M1013 1146h0M1479 1096h0M1392 1139h0M1291 990h0M1387 1098h0M1738 845h0M898 982h0M1294 912h0M1062 1143h0M1065 1043h0M930 1081h0M1403 975h0M1704 961h0M823 906h0M1047 996h0M1624 854h0M941 1091h0M802 965h0M1104 1053h0M684 1022h0M1386 918h0M1269 925h0M1170 1112h0M1551 1082h0M991 1023h0M1530 896h0M1291 891h0M1170 1160h0M1283 983h0M1007 949h0M1597 979h0M1226 1056h0M1122 1072h0M984 1021h0M721 1023h0M966 988h0M878 969h0M866 1052h0M1424 1085h0M1302 1085h0M1700 1026h0M1341 885h0M609 1036h0M737 1046h0M552 1207h0M992 1184h0M614 1143h0M837 1133h0M548 1188h0M491 1024h0M858 1133h0M950 1206h0M697 1162h0M1308 549h0M1592 330h0M1184 473h0M1309 296h0M1402 371h0M1180 406h0M1490 553h0M1660 270h0M1282 412h0M1378 378h0M1702 407h0M1620 402h0M1431 266h0M1267 282h0M1294 531h0M1209 317h0M1628 374h0M1419 374h0M1654 294h0M1681 418h0M1673 470h0M1710 451h0M1166 440h0M1464 366h0M1141 391h0M1436 406h0M1363 321h0M1657 338h0M1634 302h0M1147 294h0M1467 388h0M1568 275h0M1500 296h0M1177 553h0M1121 295h0M1388 343h0M1244 495h0M1597 398h0M1576 438h0M1616 292h0M1330 522h0M1592 301h0M1581 400h0M1540 324h0M1615 473h0M1675 354h0M1570 359h0M1365 307h0M1179 555h0M1551 356h0M1200 555h0M1633 511h0M1307 414h0M1272 385h0M1400 553h0M1148 506h0M1486 366h0M1156 410h0M1426 321h0M1379 477h0M1504 427h0M1680 444h0M1436 543h0M1378 431h0M1541 444h0M1145 375h0M1557 531h0M1455 334h0M1411 443h0M1647 441h0M1302 373h0M1276 345h0M1420 503h0M1549 319h0M1655 363h0M1489 307h0M1313 533h0M1225 384h0M1380 377h0M1670 458h0M1494 517h0M1344 550h0M1598 310h0M1237 505h0M1149 382h0M1339 494h0M1279 529h0M1469 488h0M1468 417h0M1654 398h0M1238 327h0M1558 495h0M1420 334h0M1602 497h0M1582 502h0M1341 468h0M1649 298h0M1329 464h0M1223 390h0M1169 503h0M1459 511h0M1544 295h0M1268 436h0M1691 437h0M1434 498h0M1578 627h0M1692 654h0M1193 685h0M1468 571h0M1178 709h0M1528 651h0M1569 630h0M1260 759h0M1250 639h0M1234 681h0M1490 811h0M1360 826h0M1366 774h0M1382 564h0M1436 775h0M1444 688h0M1433 653h0M1263 792h0M1356 726h0M1181 681h0M1702 791h0M1240 823h0M1561 724h0M1427 833h0M1412 805h0M1298 842h0M1645 712h0M1270 743h0M1328 571h0M1526 631h0M1654 553h0M1617 748h0M1224 835h0M1559 680h0M1681 683h0M1598 755h0M1440 831h0M1356 845h0M1380 648h0M1706 576h0M1278 679h0M1564 739h0M1572 812h0M1330 726h0M1368 749h0M1283 769h0M1217 656h0M1530 804h0M1421 581h0M1588 729h0M1684 649h0M1579 586h0M1724 713h0M1309 655h0M1290 675h0M1375 753h0M1197 595h0M1445 746h0M1667 615h0M1171 661h0M1255 684h0M1232 672h0M1636 747h0M1509 682h0M1522 672h0M1539 732h0M1298 756h0M1240 603h0M1394 610h0M1679 668h0M1426 639h0M1645 653h0M1601 646h0M1533 760h0M1358 690h0M1219 653h0M1547 560h0M1515 788h0M1633 792h0M1309 808h0M1206 676h0M1718 767h0M1149 588h0M1483 622h0M1473 789h0M1536 733h0M1612 624h0M1312 770h0M1281 733h0M1650 766h0M1325 573h0M1233 759h0M1220 725h0M1304 656h0M1343 634h0M1299 726h0M1200 607h0M1422 695h0M1658 556h0M1728 754h0M1690 543h0M1678 674h0M1666 811h0M1357 684h0M1657 609h0M1645 672h0M1252 759h0M1362 746h0M1663 768h0M1507 568h0M1437 770h0M1440 710h0M1485 848h0M1657 754h0M1171 825h0M1598 826h0M1615 727h0M1214 617h0M1409 655h0M1298 620h0M1416 825h0M1324 784h0M1382 714h0M1553 637h0M1503 798h0M1471 827h0M1409 661h0M1633 563h0M1559 691h0M1225 676h0M1620 834h0M1306 712h0M1325 748h0M1613 756h0M1257 609h0M1684 565h0M1452 637h0M1657 799h0M1266 837h0M1137 580h0M1320 781h0M1154 692h0M1393 600h0M1278 566h0M1608 702h0M1289 831h0M1267 671h0M1290 702h0M1447 787h0M1147 634h0M1452 580h0M1151 844h0M1684 833h0M1724 647h0M1198 620h0M1531 631h0M1676 550h0M1684 724h0M1702 700h0M1306 700h0M1405 585h0M1323 707h0M1588 639h0M1482 622h0M1701 587h0M1290 766h0M1572 736h0M1397 797h0M1201 656h0M1430 732h0M1350 664h0M1682 635h0M1544 619h0M1495 787h0M1153 769h0M1228 793h0M1210 576h0M1595 795h0M1169 806h0M1652 808h0M1448 810h0M1495 753h0M1333 673h0M1315 803h0M1452 795h0M1273 696h0M1373 709h0M1572 807h0M1247 722h0M1684 571h0M1370 662h0M1229 623h0M1698 618h0M1523 571h0M1718 705h0M1246 647h0M1408 623h0M1157 670h0M1425 772h0M1178 839h0M1147 776h0M1178 709h0M1683 703h0M1595 549h0M1416 604h0M1287 839h0M1414 607h0M1535 703h0M1187 712h0M1596 726h0M959 425h0M908 433h0M1024 666h0M1031 640h0M1040 756h0M976 599h0M1006 620h0M954 609h0M969 576h0M1019 542h0M912 452h0M995 533h0M1066 781h0M939 527h0M985 591h0M987 605h0M1030 642h0M1001 698h0M917 534h0M982 446h0M1070 783h0M976 443h0M944 409h0M895 445h0M998 718h0M1045 713h0M985 586h0M922 547h0M983 652h0M1053 796h0M976 677h0M906 510h0M935 597h0M982 477h0M1032 702h0M957 531h0M912 449h0M927 577h0M916 425h0M949 530h0M991 725h0M1004 556h0M938 431h0M933 527h0M1016 692h0M915 475h0M939 514h0M953 417h0M933 524h0M947 436h0M1006 649h0M950 612h0M941 476h0M934 483h0M969 464h0M873 246h0M871 335h0M884 258h0M924 273h0M915 317h0M898 289h0M949 254h0M942 235h0M889 388h0M862 297h0M934 335h0M855 265h0M855 236h0" stroke="#8c8c8c" stroke-width="1.6" stroke-linecap="square"/><path d="M1658 902h0M1356 862h0M1128 1127h0M1692 1011h0M1520 885h0M1579 889h0M1198 1076h0M1168 987h0M1117 1072h0M1008 822h0M831 1050h0M1097 945h0M1236 1045h0M1346 1013h0M1159 946h0M680 921h0M1482 876h0M1390 975h0M1120 827h0M1070 811h0M1682 983h0M1214 969h0M860 924h0M1089 976h0M1512 911h0M1392 928h0M972 912h0M1604 973h0M1053 1194h0M1357 973h0M981 1093h0M1095 898h0M1320 1119h0M1002 896h0M1347 1172h0M1517 952h0M1033 977h0M1674 1022h0M1536 847h0M683 1011h0M1211 1075h0M1100 1059h0M1697 888h0M1456 1213h0M807 944h0M1085 1163h0M1638 849h0M1363 1029h0M857 983h0M1045 1099h0M1247 1167h0M1137 1072h0M1214 1200h0M1647 943h0M1134 832h0M1217 1168h0M605 984h0M890 1028h0M1157 929h0M1231 1146h0M1362 1161h0M1313 1152h0M1380 928h0M1484 994h0M1432 1037h0M1374 1007h0M1001 838h0M1691 838h0M1286 949h0M1105 1188h0M1344 869h0M1616 1012h0M598 991h0M705 946h0M823 1012h0M979 1071h0M759 1034h0M1464 1022h0M1020 1054h0M1249 956h0M1349 1093h0M1263 1005h0M1081 841h0M1116 1098h0M907 1075h0M1184 901h0M1576 985h0M1598 845h0M1454 1033h0M991 1045h0M1276 1126h0M1244 1169h0M1289 901h0M1315 1226h0M1248 889h0M1206 1181h0M683 965h0M1164 984h0M1699 845h0M630 927h0M902 884h0M1149 848h0M791 935h0M599 965h0M1333 948h0M1669 950h0M1018 937h0M864 917h0M1571 1042h0M1067 980h0M992 1077h0M1624 953h0M977 830h0M1073 1006h0M1247 1085h0M1125 1063h0M1391 898h0M1694 969h0M724 918h0M1572 1010h0M1713 950h0M1229 924h0M1219 875h0M615 956h0M836 951h0M618 999h0M792 927h0M1017 881h0M1014 882h0M1167 1160h0M1046 1140h0M1717 997h0M909 1062h0M1078 1187h0M1544 958h0M940 1076h0M646 1009h0M1252 980h0M1688 971h0M1081 1030h0M1314 1022h0M1048 999h0M1556 1037h0M1315 973h0M1635 1046h0M1429 1201h0M1481 1057h0M1229 1123h0M1575 977h0M1144 1119h0M1432 1073h0M1724 1010h0M1151 981h0M1725 868h0M1229 1071h0M1019 928h0M1524 913h0M1534 1071h0M1242 895h0M1033 1059h0M1624 1034h0M1095 1028h0M1239 931h0M999 888h0M1373 1054h0M1020 1041h0M1126 833h0M1407 1094h0M1130 1192h0M1362 957h0M844 944h0M744 909h0M1569 879h0M1721 869h0M953 1061h0M667 966h0M918 974h0M1311 1138h0M674 1008h0M1261 1174h0M1109 1064h0M1313 1086h0M1344 866h0M1254 1050h0M721 1016h0M1565 960h0M710 1021h0M1376 870h0M1058 1115h0M1304 876h0M1555 1028h0M1049 901h0M1062 1108h0M1517 996h0M1349 1132h0M1178 1044h0M828 1057h0M1670 973h0M1195 939h0M1249 1115h0M811 925h0M1559 844h0M906 1087h0M1633 1022h0M1530 1062h0M1530 977h0M1599 1047h0M1734 912h0M595 981h0M1601 1038h0M1400 978h0M1336 873h0M842 956h0M1660 869h0M936 1098h0M1565 909h0M1439 1074h0M1235 1050h0M1476 982h0M1166 949h0M1072 1144h0M1636 1030h0M1509 897h0M1665 943h0M1166 869h0M1156 1202h0M837 904h0M1472 1025h0M949 834h0M1079 1083h0M1324 1012h0M1727 888h0M1302 894h0M1436 946h0M1071 962h0M1019 984h0M1244 949h0M1443 862h0M1385 911h0M759 1035h0M775 945h0M1547 1096h0M1223 923h0M1199 1222h0M1215 1161h0M1581 973h0M1599 1051h0M1176 942h0M1049 1073h0M1321 1155h0M1067 1094h0M1416 1203h0M1734 961h0M1639 1023h0M1356 1199h0M967 835h0M1505 879h0M699 909h0M828 938h0M1116 942h0M1123 910h0M1091 1116h0M1078 880h0M1113 924h0M1035 1065h0M1269 870h0M1336 907h0M1658 1012h0M1476 1068h0M834 1027h0M1077 906h0M1130 1205h0M1333 1182h0M1257 881h0M738 976h0M881 964h0M1041 1184h0M1542 1079h0M899 966h0M788 900h0M1617 1049h0M1670 956h0M1459 1220h0M955 899h0M1352 878h0M1487 1108h0M1103 1209h0M1650 940h0M1312 1084h0M659 964h0M1108 1046h0M1649 907h0M1162 1217h0M768 993h0M1475 931h0M1368 1186h0M1618 936h0M1140 862h0M1434 1101h0M661 952h0M1050 1138h0M1364 1192h0M1414 1127h0M691 1020h0M1140 919h0M1691 886h0M1545 875h0M920 1079h0M1562 889h0M1128 1215h0M1393 1144h0M1240 945h0M1397 961h0M925 893h0M1135 1206h0M1009 1102h0M1362 909h0M1626 875h0M1009 864h0M1434 996h0M1720 867h0M1274 945h0M887 1011h0M1005 984h0M1103 840h0M812 903h0M1078 1116h0M765 894h0M1373 1115h0M1432 1187h0M1240 866h0M1696 994h0M1291 1170h0M1389 974h0M938 975h0M1385 1020h0M1030 828h0M1375 1103h0M1016 967h0M1398 958h0M1455 886h0M1134 788h0M1142 1079h0M1223 1157h0M1202 1024h0M652 936h0M1643 1065h0M1622 1018h0M905 934h0M1397 894h0M1320 1183h0M988 1029h0M1585 1031h0M1098 974h0M1035 1162h0M1240 995h0M706 964h0M891 1072h0M742 945h0M953 971h0M1110 999h0M1600 931h0M612 938h0M1469 876h0M1350 1049h0M1282 1004h0M1463 1184h0M1073 1065h0M1532 1061h0M1218 1104h0M1570 984h0M1154 1169h0M1671 863h0M1129 926h0M837 914h0M1105 1047h0M1255 868h0M1498 1033h0M1651 860h0M906 988h0M958 1107h0M1534 894h0M1540 1041h0M1630 1034h0M1369 1093h0M1612 871h0M987 1124h0M1575 941h0M1060 806h0M1697 936h0M1110 797h0M1047 1171h0M1659 916h0M1308 983h0M1155 1166h0M993 828h0M1218 1106h0M891 1056h0M1537 1062h0M949 992h0M805 942h0M935 1112h0M1531 943h0M1450 934h0M1367 1130h0M1107 1146h0M1335 1147h0M978 1095h0M1649 934h0M1275 1200h0M987 876h0M1464 1182h0M1290 1026h0M866 978h0M730 915h0M918 1050h0M1192 1081h0M697 988h0M1622 965h0M1010 1131h0M1215 1046h0M1107 930h0M865 991h0M1023 814h0M1190 895h0M1125 943h0M1100 942h0M925 1058h0M675 944h0M1151 1157h0M1075 933h0M1077 1153h0M1312 870h0M948 1056h0M1132 1100h0M971 976h0M1339 956h0M939 1022h0M1298 1104h0M961 997h0M1279 916h0M1234 1001h0M1665 1001h0M1130 804h0M973 1104h0M649 1011h0M1381 948h0M910 887h0M1056 892h0M1358 1216h0M1339 1226h0M1380 903h0M1640 921h0M1184 1202h0M1212 1070h0M1036 1104h0M1433 1118h0M1541 1006h0M930 877h0M857 923h0M1443 1111h0M1392 942h0M994 925h0M693 964h0M917 1028h0M912 874h0M1473 1087h0M1716 888h0M1189 870h0M1224 943h0M1521 860h0M1078 956h0M1109 1199h0M1428 939h0M1417 1052h0M1174 892h0M1011 1066h0M1642 885h0M1012 896h0M1293 969h0M1033 1071h0M1543 1036h0M1479 930h0M1577 939h0M1112 961h0M1618 1080h0M1388 1210h0M997 1050h0M1101 913h0M691 953h0M1284 896h0M880 907h0M942 919h0M1317 1105h0M1221 998h0M860 1056h0M1363 881h0M945 906h0M622 926h0M1446 854h0M1576 1005h0M1061 1127h0M565 959h0M1474 1073h0M1237 896h0M1168 1136h0M919 1099h0M1122 796h0M1443 967h0M904 989h0M1349 890h0M1101 1043h0M1163 1136h0M1027 1000h0M1494 1072h0M950 972h0M1378 886h0M1385 1133h0M1513 967h0M1683 1034h0M1479 955h0M939 998h0M1328 984h0M1526 1079h0M1143 968h0M755 901h0M1180 959h0M1321 986h0M1526 1007h0M984 913h0M1583 928h0M1614 1027h0M724 943h0M1064 857h0M1141 900h0M995 896h0M1636 953h0M1578 1044h0M744 927h0M1186 1197h0M1099 1205h0M867 1078h0M1520 878h0M1585 1012h0M724 903h0M1187 1082h0M1245 1144h0M1282 911h0M1679 899h0M1013 1025h0M1392 899h0M1302 901h0M865 1039h0M1288 1076h0M986 1116h0M1443 1006h0M1114 1220h0M1704 1001h0M917 1181h0M972 1147h0M509 1012h0M649 1021h0M588 1184h0M580 1049h0M849 1219h0M624 1113h0M1048 1206h0M639 1128h0M1267 348h0M1516 268h0M1472 356h0M1467 456h0M1272 341h0M1258 486h0M1125 334h0M1586 460h0M1666 356h0M1659 345h0M1506 264h0M1434 261h0M1315 563h0M1579 397h0M1402 415h0M1438 436h0M1511 474h0M1118 336h0M1272 546h0M1592 535h0M1489 509h0M1342 518h0M1210 315h0M1521 452h0M1264 529h0M1266 500h0M1412 485h0M1181 443h0M1542 288h0M1693 428h0M1409 471h0M1530 540h0M1411 546h0M1383 323h0M1460 413h0M1659 454h0M1333 540h0M1340 358h0M1308 351h0M1158 373h0M1366 450h0M1622 419h0M1131 292h0M1203 411h0M1531 358h0M1575 496h0M1445 388h0M1211 437h0M1491 530h0M1487 291h0M1393 382h0M1154 365h0M1196 546h0M1368 363h0M1506 532h0M1605 388h0M1294 527h0M1267 552h0M1132 321h0M1266 301h0M1570 417h0M1302 421h0M1391 330h0M1527 363h0M1702 539h0M1302 474h0M1334 392h0M1454 418h0M1569 305h0M1251 507h0M1443 321h0M1521 320h0M1283 383h0M1226 273h0M1529 506h0M1179 315h0M1597 303h0M1190 509h0M1213 352h0M1147 296h0M1282 282h0M1400 397h0M1473 278h0M1215 498h0M1382 355h0M1560 444h0M1710 436h0M1387 406h0M1408 464h0M1160 366h0M1453 364h0M1651 503h0M1240 596h0M1226 792h0M1649 673h0M1246 766h0M1413 690h0M1645 710h0M1468 685h0M1699 641h0M1660 723h0M1196 733h0M1429 816h0M1462 617h0M1249 824h0M1404 801h0M1584 622h0M1445 659h0M1667 784h0M1225 728h0M1622 697h0M1307 576h0M1362 748h0M1273 852h0M1594 687h0M1509 663h0M1423 709h0M1563 669h0M1420 768h0M1656 561h0M1707 769h0M1206 774h0M1523 559h0M1635 820h0M1396 631h0M1687 684h0M1456 745h0M1472 770h0M1479 752h0M1414 607h0M1177 717h0M1431 659h0M1302 787h0M1247 661h0M1402 589h0M1182 606h0M1705 625h0M1501 695h0M1652 765h0M1664 600h0M1470 839h0M1696 712h0M1217 591h0M1532 768h0M1636 746h0M1626 701h0M1493 721h0M1179 679h0M1393 763h0M1596 652h0M1337 598h0M1167 674h0M1405 841h0M1299 853h0M1360 648h0M1290 629h0M1293 609h0M1338 839h0M1649 659h0M1473 754h0M1326 754h0M1381 561h0M1526 662h0M1190 731h0M1602 784h0M1217 701h0M1221 614h0M1300 766h0M1593 781h0M1152 595h0M1306 811h0M1523 655h0M1142 625h0M1666 720h0M1215 589h0M1570 736h0M1428 558h0M1628 801h0M1364 752h0M1450 622h0M1198 777h0M1291 796h0M1412 754h0M1170 851h0M1589 678h0M1251 595h0M1417 662h0M1476 838h0M1408 832h0M1580 615h0M1182 594h0M1706 546h0M1612 586h0M1657 818h0M1447 679h0M1512 600h0M1546 691h0M1662 679h0M1577 684h0M1275 585h0M1545 663h0M1208 759h0M1485 702h0M1581 733h0M1375 648h0M1502 775h0M1486 605h0M1333 705h0M1462 842h0M1250 823h0M1723 747h0M1345 687h0M1477 685h0M1681 590h0M1446 673h0M1385 649h0M1151 686h0M1489 714h0M1300 575h0M1550 772h0M1647 830h0M1253 609h0M1474 735h0M1538 568h0M1368 570h0M1450 585h0M1191 625h0M1547 658h0M1697 796h0M1384 682h0M1551 828h0M1605 787h0M1638 655h0M1688 828h0M1496 790h0M1254 804h0M1208 838h0M1621 677h0M1662 597h0M1625 635h0M1734 797h0M1662 616h0M1135 587h0M1659 592h0M1606 761h0M1460 566h0M1657 726h0M1556 828h0M1181 653h0M1662 742h0M1341 751h0M1198 642h0M1669 828h0M1533 736h0M1199 733h0M1561 656h0M1686 703h0M1185 670h0M1321 655h0M1690 737h0M1155 640h0M1309 848h0M1154 696h0M1151 776h0M1670 747h0M1156 753h0M1356 816h0M1308 648h0M1190 772h0M1354 625h0M1261 734h0M1228 678h0M1192 825h0M1425 561h0M1402 588h0M1641 637h0M1169 775h0M1713 600h0M1563 669h0M1446 792h0M1423 832h0M1688 821h0M1282 817h0M1556 828h0M1682 641h0M1178 575h0M1276 584h0M1158 808h0M1550 600h0M1376 695h0M1134 581h0M1574 837h0M1409 659h0M1454 753h0M1482 558h0M1566 690h0M1359 837h0M1168 811h0M1490 575h0M1611 631h0M1175 812h0M1471 701h0M1230 823h0M1670 643h0M1547 656h0M1471 595h0M1680 709h0M1731 713h0M1247 828h0M1376 779h0M1530 559h0M1225 843h0M1196 721h0M1052 708h0M954 410h0M1040 804h0M1049 763h0M1032 608h0M951 562h0M985 444h0M1005 628h0M905 496h0M1008 658h0M1008 657h0M1013 800h0M1057 760h0M983 554h0M1015 539h0M987 512h0M941 523h0M1066 744h0M1021 768h0M1020 638h0M1008 722h0M946 460h0M938 571h0M946 541h0M1003 563h0M1016 744h0M1017 555h0M927 487h0M965 656h0M1032 753h0M1031 790h0M948 631h0M896 453h0M960 498h0M974 501h0M1025 550h0M1060 716h0M1033 763h0M949 591h0M1006 603h0M973 600h0M1024 803h0M973 446h0M954 483h0M1012 632h0M970 517h0M1035 732h0M992 591h0M974 492h0M1040 628h0M1026 747h0M909 518h0M982 572h0M981 444h0M971 345h0M957 428h0M889 283h0M982 425h0M831 185h0M918 362h0M906 300h0M836 214h0M912 405h0M852 271h0M959 360h0M852 189h0M929 249h0M881 390h0M993 444h0M914 386h0M956 343h0M877 383h0M941 259h0" stroke="#c8c8c8" stroke-width="1.6" stroke-linecap="square"/><path d="M1057 1033h0M1245 1013h0M1091 862h0M762 959h0M1041 852h0M1244 1132h0M1668 919h0M1074 962h0M1223 1066h0M570 959h0M1237 1198h0M1138 843h0M1043 858h0M948 875h0M1535 949h0M1544 1097h0M1723 1003h0M1412 1076h0M1452 981h0M1301 971h0M1393 872h0M1240 1062h0M918 934h0M811 1042h0M1491 980h0M1438 1054h0M1217 1133h0M1283 916h0M1415 1149h0M1319 948h0M1347 921h0M1380 1053h0M1273 932h0M1556 885h0M975 833h0M1508 1022h0M874 893h0M1138 1192h0M675 920h0M640 958h0M715 957h0M1211 966h0M1219 1063h0M1681 917h0M1043 887h0M893 941h0M1054 1007h0M1680 863h0M976 1017h0M626 939h0M1353 1161h0M1486 1038h0M1287 915h0M1097 1147h0M695 975h0M1580 847h0M1023 1063h0M1085 989h0M1491 983h0M1089 1141h0M1059 1087h0M1281 1206h0M1084 1042h0M1096 1114h0M1269 1190h0M1580 853h0M1579 1081h0M975 972h0M587 971h0M1296 1127h0M1326 1056h0M1211 878h0M1381 1005h0M1486 879h0M1139 1168h0M1249 1070h0M799 876h0M948 895h0M1154 952h0M1335 938h0M879 976h0M1547 853h0M1709 889h0M1654 910h0M751 908h0M1553 943h0M1431 1036h0M979 939h0M1383 1188h0M695 1022h0M1297 1159h0M949 969h0M1527 862h0M1582 926h0M1075 955h0M1039 957h0M1026 1131h0M1402 1086h0M1173 868h0M1432 1093h0M1350 983h0M1632 903h0M950 1021h0M975 929h0M1433 1178h0M786 958h0M1490 917h0M914 973h0M969 957h0M1193 943h0M1190 893h0M1383 919h0M1302 884h0M1544 1056h0M1695 896h0M914 864h0M1373 880h0M1389 1078h0M1146 972h0M1673 996h0M1050 1160h0M1001 931h0M762 1020h0M1155 941h0M900 888h0M1109 1064h0M1474 944h0M1143 895h0M1398 1081h0M635 940h0M1547 977h0M1655 885h0M1081 1193h0M1679 993h0M1315 1192h0M1621 998h0M1057 1114h0M939 885h0M1402 1034h0M940 962h0M1537 1015h0M1331 1063h0M1701 971h0M1662 993h0M1098 941h0M1282 944h0M1501 853h0M1378 1017h0M1472 977h0M1106 842h0M1218 1127h0M1552 1087h0M909 948h0M867 980h0M1728 938h0M1699 1019h0M1045 845h0M1123 1059h0M993 1031h0M898 876h0M889 964h0M637 999h0M671 969h0M1590 933h0M579 973h0M1432 1095h0M1013 1046h0M1673 917h0M612 981h0M1513 977h0M837 1021h0M1250 1179h0M1140 972h0M696 1027h0M1165 1200h0M1471 852h0M1573 960h0M1057 1058h0M1570 955h0M1116 883h0M1704 849h0M1147 856h0M1057 993h0M1014 932h0M1362 1077h0M1418 905h0M799 1002h0M1216 1222h0M1420 1125h0M884 880h0M1121 1167h0M1638 943h0M1513 892h0M1152 927h0M1399 1124h0M1059 939h0M1032 1107h0M1453 850h0M1158 1041h0M1430 1005h0M1437 1033h0M1096 1127h0M1298 1015h0M1700 852h0M1111 1086h0M1016 905h0M1042 974h0M1613 905h0M1209 930h0M839 883h0M989 987h0M923 887h0M954 893h0M1210 1019h0M1259 995h0M1025 1136h0M1724 992h0M1017 1153h0M1173 908h0M628 935h0M995 1011h0M1126 981h0M1016 1055h0M602 944h0M1238 1170h0M939 868h0M1402 1205h0M1329 925h0M1422 1211h0M1305 1144h0M1118 806h0M1564 984h0M998 904h0M970 965h0M1125 1037h0M1240 980h0M1116 848h0M850 1012h0M1340 898h0M1105 1222h0M1322 1123h0M996 870h0M1643 861h0M1237 1213h0M1457 1148h0M697 972h0M1086 1193h0M1426 989h0M1263 956h0M733 955h0M1130 819h0M1500 916h0M1014 1110h0M1109 1114h0M1275 1158h0M1166 1100h0M848 1065h0M1397 1190h0M1445 1202h0M1497 900h0M1629 1008h0M693 916h0M868 959h0M1111 918h0M1019 1128h0M1138 815h0M1004 820h0M1311 861h0M1051 1063h0M822 1065h0M1543 1028h0M978 950h0M748 968h0M1312 890h0M1446 904h0M1686 844h0M817 977h0M969 960h0M946 1042h0M894 993h0M1232 976h0M1012 1045h0M1330 1219h0M874 936h0M1028 823h0M1435 936h0M1053 1071h0M1304 1044h0M1175 1228h0M1173 926h0M1101 943h0M991 935h0M628 946h0M1073 920h0M1408 854h0M1306 877h0M1691 957h0M1480 908h0M1310 883h0M1145 972h0M1313 976h0M1214 941h0M1290 1068h0M1412 868h0M1182 971h0M1553 1059h0M1321 899h0M1397 1133h0M1292 870h0M1228 1199h0M1699 998h0M1061 859h0M1234 1117h0M1385 903h0M1407 918h0M1119 1228h0M1673 982h0M707 1027h0M1621 1021h0M1125 1054h0M1579 1052h0M892 958h0M759 931h0M1348 987h0M1026 893h0M1417 1141h0M1347 1071h0M1603 1004h0M1604 904h0M1236 1030h0M1704 1006h0M1148 901h0M1476 1102h0M1313 954h0M736 902h0M1513 999h0M718 931h0M1427 1033h0M1415 929h0M824 984h0M1385 994h0M1037 842h0M1531 1102h0M1728 894h0M1624 1059h0M1666 898h0M895 1095h0M951 956h0M1209 922h0M1681 960h0M1520 904h0M798 942h0M1652 875h0M1192 870h0M1535 919h0M1063 933h0M1399 1064h0M1487 1027h0M1008 947h0M1102 944h0M1588 941h0M798 922h0M1247 892h0M993 995h0M1601 928h0M768 913h0M1449 873h0M1410 1083h0M1128 979h0M1395 1105h0M1510 965h0M1406 985h0M1095 875h0M1293 1102h0M1639 895h0M1080 994h0M1285 998h0M1314 1120h0M1259 1070h0M1425 1228h0M1138 972h0M1678 991h0M1648 997h0M1469 981h0M1417 1208h0M927 1051h0M803 1020h0M1290 985h0M921 924h0M1664 876h0M832 923h0M1632 920h0M1380 1040h0M1186 878h0M1444 1214h0M1011 997h0M1310 1099h0M1083 1078h0M597 960h0M1269 1184h0M651 935h0M1180 1128h0M1082 1158h0M1434 1105h0M1705 889h0M1066 1185h0M1515 921h0M755 934h0M1079 1143h0M806 930h0M1061 942h0M1602 953h0M1048 1135h0M1502 1016h0M1647 854h0M922 872h0M1247 887h0M1014 944h0M1171 1058h0M1456 1161h0M811 875h0M839 871h0M1396 860h0M1281 963h0M941 904h0M1578 973h0M727 1024h0M1322 1128h0M1285 1151h0M1182 1143h0M1117 1085h0M937 1095h0M926 1000h0M1167 879h0M962 1048h0M1105 956h0M1627 932h0M1312 891h0M1396 1018h0M941 889h0M1613 988h0M1417 1088h0M744 949h0M1342 864h0M1534 1054h0M997 1013h0M1519 1029h0M1126 1187h0M1255 1115h0M1209 1061h0M1229 895h0M1383 1227h0M1116 1005h0M1693 922h0M700 970h0M1372 921h0M1487 1016h0M753 995h0M1256 1050h0M1267 874h0M1230 1014h0M1543 1099h0M1223 995h0M1193 1223h0M1431 855h0M1234 954h0M1434 1200h0M1696 925h0M1191 1177h0M1226 1017h0M1029 956h0M1278 1107h0M1329 1217h0M1578 1086h0M1001 1050h0M965 1049h0M1147 984h0M1550 970h0M994 1025h0M1212 1226h0M760 899h0M1000 891h0M1103 968h0M1511 945h0M1286 906h0M1254 1027h0M1097 1218h0M1306 1153h0M1609 1031h0M1135 1076h0M1132 1027h0M876 1072h0M738 1000h0M1599 917h0M1630 954h0M1047 959h0M1362 937h0M1288 881h0M635 949h0M1678 1004h0M1021 933h0M1038 823h0M1202 950h0M1151 1000h0M1580 915h0M799 918h0M1027 864h0M1083 1163h0M1676 1044h0M859 1032h0M1281 1157h0M1422 865h0M1606 948h0M1284 871h0M912 941h0M1455 922h0M1311 1076h0M1735 875h0M1306 938h0M1030 1068h0M965 991h0M1082 1195h0M1396 905h0M859 969h0M1048 1178h0M1409 1153h0M1346 1130h0M1302 932h0M935 963h0M1514 916h0M1320 1084h0M1179 994h0M958 1101h0M1117 1197h0M1419 1057h0M1670 1022h0M1546 914h0M1234 972h0M973 920h0M1000 998h0M1681 882h0M1086 1110h0M1676 878h0M1102 977h0M1164 1124h0M1650 1027h0M947 860h0M928 1111h0M1180 977h0M1091 859h0M1480 1009h0M1136 1004h0M1361 1079h0M1218 1202h0M1206 993h0M1277 1002h0M1548 908h0M1385 945h0M1730 856h0M1698 919h0M1315 1211h0M1136 848h0M980 1047h0M1022 876h0M1035 1080h0M779 916h0M1227 980h0M1410 881h0M1326 922h0M1319 1095h0M1124 1221h0M1180 1144h0M1295 986h0M1604 873h0M1638 943h0M681 1006h0M1296 1095h0M910 986h0M1532 1023h0M1115 1109h0M1153 1005h0M1104 860h0M1653 966h0M1108 1222h0M1394 1230h0M1110 790h0M643 930h0M897 964h0M939 1201h0M647 1037h0M654 1093h0M583 1024h0M632 1072h0M849 1083h0M803 1176h0M919 1208h0M761 1228h0M765 1201h0M970 1168h0M1655 446h0M1446 377h0M1173 287h0M1123 281h0M1331 544h0M1672 438h0M1290 326h0M1690 399h0M1354 545h0M1209 412h0M1625 349h0M1212 494h0M1627 535h0M1459 446h0M1328 391h0M1556 440h0M1675 297h0M1559 392h0M1649 398h0M1460 487h0M1459 359h0M1605 413h0M1717 493h0M1698 483h0M1649 368h0M1437 552h0M1257 478h0M1316 402h0M1152 432h0M1417 357h0M1433 273h0M1317 312h0M1630 347h0M1509 445h0M1185 509h0M1340 494h0M1565 278h0M1234 441h0M1357 548h0M1157 365h0M1600 423h0M1514 431h0M1448 543h0M1660 494h0M1282 299h0M1441 538h0M1462 371h0M1348 444h0M1161 454h0M1584 275h0M1717 515h0M1545 377h0M1479 321h0M1389 343h0M1696 538h0M1478 453h0M1370 358h0M1163 547h0M1409 429h0M1201 293h0M1224 304h0M1708 480h0M1354 297h0M1161 299h0M1639 372h0M1436 261h0M1434 277h0M1122 386h0M1466 271h0M1454 296h0M1517 322h0M1694 411h0M1483 437h0M1529 490h0M1540 262h0M1592 476h0M1648 493h0M1165 445h0M1275 369h0M1200 481h0M1590 330h0M1204 389h0M1420 400h0M1470 427h0M1224 277h0M1129 291h0M1666 366h0M1390 494h0M1347 748h0M1249 693h0M1730 693h0M1636 812h0M1250 583h0M1481 697h0M1508 652h0M1652 732h0M1475 599h0M1377 755h0M1673 809h0M1577 566h0M1250 698h0M1482 586h0M1648 678h0M1194 751h0M1433 652h0M1682 702h0M1417 777h0M1289 858h0M1483 584h0M1699 773h0M1159 757h0M1656 754h0M1688 713h0M1619 770h0M1704 679h0M1228 673h0M1464 809h0M1562 715h0M1159 745h0M1346 831h0M1668 663h0M1702 824h0M1147 749h0M1376 689h0M1634 672h0M1381 588h0M1198 842h0M1642 642h0M1612 755h0M1441 683h0M1600 615h0M1351 612h0M1400 825h0M1492 675h0M1171 726h0M1631 605h0M1540 562h0M1210 655h0M1645 819h0M1387 659h0M1317 637h0M1197 688h0M1372 832h0M1324 652h0M1443 676h0M1595 788h0M1710 562h0M1174 700h0M1251 580h0M1152 751h0M1595 581h0M1300 680h0M1277 702h0M1225 612h0M1694 707h0M1141 635h0M1494 780h0M1398 590h0M1570 708h0M1689 766h0M1191 641h0M1692 827h0M1295 775h0M1453 575h0M1195 687h0M1238 751h0M1724 743h0M1468 836h0M1498 657h0M1268 807h0M1635 693h0M1280 624h0M1670 629h0M1159 618h0M1306 701h0M1512 721h0M1228 687h0M1192 840h0M1660 605h0M1261 830h0M1180 601h0M1486 612h0M1246 786h0M1700 782h0M1359 643h0M1443 684h0M1359 770h0M1189 773h0M1625 658h0M1324 822h0M1698 547h0M1481 822h0M1211 625h0M1206 782h0M1281 697h0M1247 721h0M1643 626h0M1467 817h0M1485 796h0M1478 694h0M1626 818h0M1462 670h0M1599 680h0M1631 676h0M1626 627h0M1702 643h0M1364 681h0M1662 782h0M1476 720h0M1594 630h0M1222 641h0M1412 665h0M1660 769h0M1403 753h0M1501 741h0M1326 767h0M1546 740h0M1695 549h0M1481 583h0M1682 551h0M1473 565h0M1287 739h0M1292 608h0M1278 806h0M1676 806h0M1330 740h0M1637 591h0M1693 669h0M1660 802h0M1512 700h0M1160 712h0M1204 783h0M1354 642h0M1219 609h0M1194 708h0M1138 653h0M1458 670h0M1294 778h0M1465 800h0M1150 627h0M1261 713h0M1150 673h0M1534 677h0M1336 603h0M1176 840h0M1177 724h0M1324 616h0M1401 640h0M1673 603h0M1173 808h0M1701 684h0M1539 832h0M1645 599h0M1224 712h0M1416 711h0M1384 654h0M1312 641h0M1280 788h0M1237 707h0M1659 711h0M1235 610h0M1552 645h0M1388 596h0M1370 631h0M1672 624h0M1643 831h0M1665 831h0M1513 765h0M1655 786h0M1173 667h0M1346 630h0M1231 852h0M1363 757h0M1657 655h0M1289 751h0M1230 806h0M1394 777h0M1699 737h0M1544 599h0M1506 762h0M1636 696h0M1155 691h0M1428 743h0M1619 579h0M1174 823h0M1545 690h0M1179 661h0M1148 813h0M1581 658h0M1643 680h0M1488 815h0M1222 714h0M1457 740h0M1649 836h0M1456 628h0M1502 750h0M1689 738h0M1363 660h0M1345 613h0M1616 838h0M1188 769h0M1418 779h0M1473 731h0M1452 822h0M1547 612h0M1147 583h0M1535 654h0M1537 797h0M1287 707h0M1555 674h0M991 714h0M921 478h0M1014 599h0M920 504h0M1049 639h0M1067 759h0M923 560h0M1046 640h0M949 491h0M1013 550h0M990 733h0M992 700h0M1030 591h0M914 435h0M908 412h0M1007 625h0M1007 532h0M1072 739h0M977 626h0M923 543h0M955 653h0M1051 645h0M1073 732h0M987 547h0M1010 584h0M964 570h0M1006 746h0M975 580h0M995 773h0M939 431h0M1048 654h0M923 459h0M919 454h0M955 617h0M1023 799h0M969 425h0M963 545h0M986 627h0M918 549h0M967 609h0M951 465h0M988 518h0M978 622h0M1034 630h0M1014 803h0M974 481h0M1014 750h0M1044 767h0M990 662h0M1000 675h0M1047 773h0M1008 608h0M979 516h0M963 601h0M1004 600h0M941 418h0M987 612h0M875 303h0M952 413h0M841 202h0M884 354h0M919 368h0M891 387h0M910 242h0M889 315h0M849 224h0M859 261h0M903 244h0" stroke="#a0a0a0" stroke-width="1.6" stroke-linecap="square"/><path d="M1273 864h0M816 1016h0M1115 808h0M1011 860h0M687 1010h0M1222 942h0M807 947h0M979 960h0M1293 1012h0M1113 930h0M789 957h0M1236 1136h0M1183 1076h0M1335 1180h0M1291 940h0M717 1020h0M1205 1050h0M1503 863h0M695 1015h0M909 911h0M1031 845h0M1479 1000h0M1089 1211h0M1446 1205h0M703 990h0M1233 1180h0M1042 1179h0M968 881h0M1572 877h0M1219 969h0M1324 1050h0M572 943h0M1422 1015h0M1502 894h0M1319 1007h0M1377 1135h0M1485 979h0M1262 1078h0M1156 934h0M1722 957h0M1292 1133h0M1488 968h0M1424 1191h0M1232 1139h0M1131 796h0M1133 913h0M1401 1034h0M1252 1197h0M877 864h0M1430 924h0M1226 1131h0M1150 1133h0M1162 998h0M1040 1010h0M1376 1156h0M1022 933h0M1315 959h0M789 919h0M1239 1077h0M716 926h0M880 899h0M603 980h0M898 1076h0M1239 1213h0M1641 1040h0M1415 1040h0M1431 1212h0M1434 911h0M1096 1018h0M1429 1211h0M1471 892h0M980 1005h0M802 973h0M1225 1198h0M1579 957h0M906 1048h0M940 1053h0M650 983h0M847 916h0M1066 859h0M1089 1038h0M1190 982h0M1044 1055h0M1046 1072h0M1136 825h0M1177 982h0M1193 1056h0M1197 1228h0M1009 1149h0M1114 1071h0M1708 836h0M1367 1197h0M956 1058h0M1188 891h0M790 906h0M1490 912h0M1710 895h0M1066 1113h0M1180 964h0M1714 937h0M1569 997h0M1016 840h0M958 966h0M1308 1115h0M1564 1096h0M1379 1165h0M1446 1124h0M966 960h0M1378 1125h0M739 1037h0M1279 904h0M894 1028h0M1010 971h0M1534 948h0M1074 860h0M1034 956h0M1275 900h0M1378 1218h0M1239 964h0M1050 1042h0M1019 881h0M821 897h0M1379 1179h0M1517 1029h0M1067 1183h0M975 855h0M1619 1070h0M730 1018h0M614 995h0M961 980h0M734 998h0M1588 876h0M1612 1068h0M916 842h0M1150 1008h0M1585 863h0M1363 1104h0M1395 862h0M1157 1172h0M1227 1038h0M1671 924h0M1238 1028h0M1378 987h0M989 869h0M1519 945h0M1442 1195h0M1707 1022h0M700 919h0M1315 1227h0M1445 1044h0M1145 831h0M1422 978h0M1131 1228h0M1380 927h0M1443 977h0M630 995h0M1038 1176h0M1362 1185h0M847 891h0M623 932h0M1083 890h0M1145 927h0M1399 1015h0M1320 1156h0M1399 1031h0M976 865h0M804 893h0M1051 950h0M1518 1027h0M1147 869h0M1131 819h0M1534 972h0M1284 945h0M787 898h0M1430 1105h0M1201 1084h0M589 966h0M1329 1077h0M1326 1037h0M1301 1031h0M629 934h0M882 1007h0M1154 984h0M1306 1192h0M1030 893h0M1688 1006h0M676 932h0M1292 1186h0M1012 1157h0M1466 1198h0M1128 1045h0M1066 1138h0M1277 896h0M607 989h0M892 918h0M1629 896h0M1115 997h0M1072 1190h0M1706 931h0M1225 1150h0M1723 1013h0M1387 1025h0M1444 887h0M1371 881h0M1312 940h0M1265 1166h0M616 937h0M1054 1044h0M1346 1197h0M1440 851h0M837 948h0M1567 1080h0M1698 908h0M922 907h0M1213 906h0M813 880h0M1160 959h0M1138 1133h0M1028 971h0M1606 1070h0M1317 1111h0M1099 812h0M892 964h0M1277 1011h0M833 1051h0M798 878h0M1061 1109h0M837 870h0M1189 1027h0M1449 994h0M799 1013h0M827 912h0M1258 982h0M1600 915h0M1166 1167h0M833 1065h0M631 968h0M1248 1131h0M1306 994h0M1124 876h0M1116 998h0M1548 860h0M1228 1208h0M998 869h0M887 933h0M1631 972h0M1429 1116h0M1266 1148h0M1069 836h0M1442 1065h0M1470 1193h0M1578 845h0M628 937h0M1338 1164h0M1024 1068h0M901 940h0M1657 1049h0M1325 1193h0M920 840h0M1216 1197h0M1299 966h0M789 953h0M1420 975h0M981 1031h0M1026 976h0M1069 983h0M1176 887h0M890 930h0M1158 1067h0M906 957h0M1517 951h0M1131 1066h0M1708 842h0M645 940h0M1706 1032h0M879 883h0M1300 1053h0M1383 1168h0M1047 885h0M1254 951h0M1442 888h0M1253 1094h0M1279 1215h0M918 1001h0M1295 1224h0M1034 1023h0M1111 1182h0M1144 1140h0M1292 1000h0M1456 1181h0M1042 1021h0M1655 933h0M1117 927h0M1467 1205h0M1517 937h0M1371 1005h0M1592 973h0M1450 954h0M1168 995h0M681 990h0M709 934h0M1382 920h0M1396 1012h0M972 1036h0M1258 1200h0M1087 1181h0M1263 1176h0M1065 1064h0M1101 1130h0M1222 1048h0M1436 1202h0M1656 873h0M1095 874h0M1051 1114h0M1433 1036h0M883 1093h0M660 970h0M884 1011h0M700 1015h0M1510 1030h0M1071 915h0M1483 918h0M1139 799h0M1245 933h0M845 913h0M1109 1191h0M1062 1146h0M1105 843h0M1227 921h0M844 865h0M1137 913h0M1127 1101h0M1286 900h0M1168 910h0M918 1043h0M1345 1203h0M896 880h0M871 1045h0M1498 895h0M1063 904h0M1526 1103h0M701 1024h0M985 1120h0M1529 1051h0M1189 1155h0M1196 914h0M815 1001h0M1335 985h0M1415 1133h0M1337 997h0M1388 1195h0M1710 914h0M1467 997h0M1634 915h0M1409 1031h0M1425 955h0M1282 1164h0M1136 979h0M701 945h0M1055 1042h0M1598 1021h0M1584 1039h0M1230 927h0M1235 1156h0M1237 922h0M766 979h0M1136 1193h0M1292 994h0M1616 887h0M1434 982h0M823 963h0M1712 865h0M1695 882h0M725 1011h0M1381 1016h0M1134 800h0M1363 960h0M1500 972h0M1393 978h0M1298 1229h0M843 935h0M999 904h0M1016 863h0M1033 1097h0M1050 886h0M1220 1020h0M1134 1118h0M696 986h0M1453 929h0M1699 946h0M1199 1042h0M1055 1012h0M867 882h0M1338 1102h0M1365 1136h0M1558 955h0M1389 1027h0M1412 1207h0M1541 956h0M1263 1100h0M1315 1124h0M1148 1079h0M1206 1208h0M1552 999h0M1280 1147h0M1620 890h0M1388 859h0M920 962h0M946 985h0M765 1050h0M1395 1027h0M891 1068h0M1450 862h0M1637 1068h0M1678 980h0M1695 958h0M1116 1053h0M1415 1043h0M1089 1134h0M756 1034h0M1325 1165h0M1266 1073h0M1137 954h0M1615 847h0M1081 1126h0M1259 999h0M749 902h0M1554 999h0M906 992h0M656 1005h0M1186 948h0M1055 928h0M1470 877h0M859 1080h0M1132 1155h0M792 906h0M1245 1213h0M1553 994h0M1213 884h0M1491 959h0M674 921h0M780 1001h0M1319 882h0M1190 1188h0M1646 915h0M1370 932h0M981 984h0M1194 941h0M1038 1142h0M1084 1127h0M1286 1003h0M984 1032h0M756 1026h0M1139 965h0M1251 894h0M1205 977h0M1398 927h0M1386 948h0M1580 856h0M1096 1210h0M1383 1229h0M1251 1173h0M1063 865h0M1397 1088h0M931 907h0M1639 904h0M760 888h0M966 899h0M1334 901h0M672 950h0M1270 1087h0M1542 920h0M1474 1082h0M1188 954h0M1421 1179h0M793 1016h0M1072 912h0M1426 1055h0M1060 806h0M1412 1117h0M1012 896h0M1536 909h0M889 969h0M936 937h0M1348 1180h0M1456 862h0M1109 1106h0M1385 1049h0M1199 979h0M1334 1032h0M1127 848h0M1116 1071h0M1054 1154h0M1687 856h0M1124 887h0M1211 1002h0M702 1029h0M1039 1070h0M1152 981h0M743 984h0M1190 1138h0M962 837h0M1235 949h0M1174 1219h0M629 984h0M1490 895h0M1132 820h0M1431 994h0M1090 814h0M1079 868h0M1598 963h0M1537 948h0M966 1028h0M970 965h0M1037 1151h0M1048 853h0M1280 1152h0M644 936h0M1254 1166h0M1267 1214h0M1259 1024h0M1193 1104h0M1649 886h0M1638 942h0M1514 1024h0M1217 1209h0M1336 919h0M1280 924h0M1459 988h0M1685 955h0M896 1017h0M959 912h0M1653 941h0M1134 1042h0M1197 1028h0M925 886h0M1561 1042h0M1646 1064h0M1316 920h0M1007 951h0M1361 1169h0M1391 892h0M1189 881h0M651 970h0M1572 959h0M1150 1052h0M1554 896h0M835 900h0M1431 978h0M909 1036h0M1053 1067h0M1085 826h0M1321 878h0M1377 1229h0M1202 1070h0M1514 1001h0M1188 985h0M1635 1009h0M785 927h0M1644 922h0M965 1035h0M721 986h0M1482 889h0M826 1107h0M628 1123h0M509 1070h0M601 1211h0M493 1040h0M791 1176h0M771 1185h0M662 1088h0M549 1010h0M986 1196h0M994 1158h0M596 1089h0M713 1200h0M886 1214h0M1502 502h0M1531 331h0M1386 411h0M1136 302h0M1717 467h0M1615 300h0M1445 316h0M1388 418h0M1289 280h0M1519 519h0M1604 504h0M1223 290h0M1294 426h0M1697 282h0M1164 475h0M1365 296h0M1493 496h0M1210 423h0M1343 441h0M1681 456h0M1567 311h0M1624 417h0M1349 322h0M1287 484h0M1310 526h0M1416 542h0M1282 272h0M1241 369h0M1664 400h0M1374 547h0M1567 439h0M1558 511h0M1597 547h0M1325 312h0M1460 364h0M1182 420h0M1286 482h0M1385 527h0M1360 313h0M1311 514h0M1234 415h0M1373 470h0M1660 252h0M1654 457h0M1491 328h0M1179 317h0M1161 342h0M1396 264h0M1234 286h0M1393 299h0M1386 434h0M1559 426h0M1606 275h0M1203 283h0M1704 410h0M1700 309h0M1231 434h0M1665 435h0M1160 417h0M1215 378h0M1704 280h0M1368 323h0M1431 458h0M1313 309h0M1204 329h0M1244 361h0M1341 525h0M1119 322h0M1694 368h0M1616 445h0M1277 365h0M1379 305h0M1349 331h0M1364 463h0M1294 385h0M1285 327h0M1238 405h0M1177 361h0M1434 323h0M1345 364h0M1532 424h0M1714 789h0M1369 776h0M1263 796h0M1213 633h0M1415 734h0M1678 559h0M1342 668h0M1483 655h0M1422 686h0M1505 717h0M1432 583h0M1467 849h0M1552 585h0M1709 689h0M1402 577h0M1624 586h0M1445 755h0M1236 585h0M1150 845h0M1284 659h0M1630 665h0M1477 724h0M1452 649h0M1294 662h0M1347 563h0M1613 813h0M1233 592h0M1420 786h0M1558 663h0M1433 768h0M1601 655h0M1276 810h0M1437 666h0M1245 772h0M1407 728h0M1707 613h0M1565 637h0M1386 633h0M1314 775h0M1452 580h0M1600 586h0M1256 666h0M1565 700h0M1521 825h0M1599 688h0M1227 850h0M1434 719h0M1538 822h0M1462 685h0M1260 779h0M1279 647h0M1546 595h0M1723 763h0M1722 775h0M1699 751h0M1616 596h0M1280 660h0M1304 809h0M1691 736h0M1356 606h0M1463 774h0M1188 776h0M1194 645h0M1547 726h0M1365 697h0M1392 730h0M1422 736h0M1190 679h0M1467 659h0M1564 633h0M1538 677h0M1664 576h0M1290 573h0M1539 684h0M1255 789h0M1420 701h0M1379 634h0M1552 788h0M1388 581h0M1163 754h0M1200 722h0M1177 616h0M1405 717h0M1328 732h0M1711 683h0M1175 810h0M1311 713h0M1521 638h0M1410 798h0M1662 796h0M1202 672h0M1171 601h0M1525 745h0M1627 633h0M1734 778h0M1150 753h0M1166 815h0M1305 834h0M1485 805h0M1720 555h0M1393 670h0M1539 666h0M1632 751h0M1391 846h0M1543 694h0M1267 798h0M1587 706h0M1351 799h0M1306 668h0M1386 625h0M1617 581h0M1675 801h0M1588 779h0M1619 677h0M1327 626h0M1200 812h0M1480 697h0M1557 757h0M1559 595h0M1152 813h0M1301 757h0M1201 701h0M1723 621h0M1400 573h0M1399 806h0M1264 853h0M1409 843h0M1335 799h0M1213 673h0M1712 738h0M1353 844h0M1411 778h0M1633 673h0M1599 700h0M1292 852h0M1667 677h0M1410 840h0M1194 799h0M1362 577h0M1672 620h0M1446 746h0M1656 729h0M1607 746h0M1168 854h0M1472 844h0M1186 822h0M1424 670h0M1562 737h0M1475 836h0M1567 595h0M1333 809h0M1288 566h0M1253 704h0M1237 648h0M1410 667h0M1185 670h0M1584 783h0M1300 601h0M1177 771h0M1363 611h0M1678 772h0M1249 694h0M1225 799h0M1300 743h0M1147 632h0M1223 656h0M1484 747h0M1462 608h0M1187 775h0M1185 676h0M1247 804h0M1605 737h0M1165 593h0M1268 677h0M1285 856h0M1180 665h0M1329 773h0M1469 744h0M1168 828h0M1529 612h0M1364 716h0M1463 588h0M1725 631h0M1138 605h0M1386 579h0M1306 722h0M1468 794h0M1275 599h0M1710 613h0M1280 611h0M1439 656h0M1247 787h0M1454 583h0M1660 732h0M1707 650h0M1411 716h0M1584 572h0M1255 589h0M1181 608h0M1257 680h0M1381 639h0M1296 763h0M1503 726h0M1182 820h0M1683 673h0M1470 809h0M1564 600h0M1654 652h0M1294 674h0M1687 593h0M1218 588h0M1442 607h0M1534 703h0M1586 760h0M987 513h0M994 586h0M942 562h0M963 564h0M1013 556h0M997 483h0M1081 761h0M972 502h0M1019 698h0M1016 647h0M949 496h0M914 490h0M1004 656h0M905 491h0M962 557h0M991 478h0M993 752h0M976 594h0M999 539h0M954 556h0M964 612h0M922 411h0M1032 655h0M1064 750h0M954 517h0M976 679h0M993 729h0M1029 668h0M957 564h0M1006 628h0M1055 658h0M990 607h0M939 452h0M991 750h0M966 671h0M921 506h0M1000 704h0M1017 666h0M1020 784h0M976 666h0M998 495h0M984 646h0M972 433h0M1044 706h0M943 575h0M1004 800h0M919 535h0M904 450h0M968 644h0M1022 695h0M927 530h0M986 716h0M920 483h0M986 447h0M1044 736h0M915 412h0M911 244h0M888 328h0M925 354h0M945 387h0M999 450h0M872 302h0M919 383h0M930 237h0M896 309h0M842 223h0M981 379h0M973 359h0M992 434h0M885 254h0M826 184h0M878 352h0M961 322h0" stroke="#9a9090" stroke-width="1.6" stroke-linecap="square"/><path d="M1714 965h0M1462 1094h0M883 1022h0M1328 1179h0M1090 868h0M1224 1117h0M1348 1023h0M1620 1029h0M1319 1169h0M836 917h0M931 838h0M1412 1145h0M729 925h0M1531 914h0M1712 881h0M945 913h0M1244 1074h0M869 1056h0M579 950h0M732 993h0M1208 1136h0M1238 1168h0M1462 988h0M1513 977h0M1495 1091h0M1655 880h0M1610 1013h0M1566 863h0M759 919h0M1152 1209h0M1258 957h0M1545 872h0M1708 844h0M1045 1078h0M1525 909h0M814 894h0M1418 867h0M1446 1203h0M1288 1199h0M1520 1011h0M1127 808h0M1223 1067h0M711 906h0M1112 1192h0M1414 1073h0M1126 1040h0M1565 922h0M697 922h0M676 1016h0M1382 1003h0M853 864h0M1546 1053h0M1673 887h0M1371 1176h0M934 917h0M1129 922h0M1318 938h0M760 1015h0M1113 994h0M1142 989h0M1206 1139h0M1393 1078h0M1227 1185h0M1243 1092h0M1485 898h0M1442 1197h0M1680 947h0M937 965h0M1099 1071h0M1149 950h0M1332 1096h0M1673 946h0M1421 922h0M1386 955h0M867 858h0M849 1058h0M1065 864h0M715 1011h0M901 1007h0M1650 921h0M1266 928h0M1370 1139h0M692 952h0M1603 1032h0M718 988h0M1202 1047h0M1206 912h0M1153 989h0M754 1016h0M1612 845h0M1306 1173h0M1264 932h0M1396 918h0M1177 919h0M1027 994h0M1398 856h0M1114 874h0M1463 920h0M1017 1168h0M1219 1176h0M1160 1181h0M1010 1121h0M1354 1074h0M1652 990h0M1537 1047h0M1119 872h0M1619 1046h0M1059 901h0M1528 1060h0M1320 1086h0M867 923h0M1307 1203h0M1132 972h0M1477 1075h0M1450 1065h0M1121 1082h0M1053 992h0M1424 872h0M1215 1182h0M907 973h0M1201 999h0M1130 899h0M1250 913h0M1196 995h0M1427 865h0M1341 969h0M1378 1120h0M1343 977h0M1646 852h0M907 1031h0M753 941h0M1302 1003h0M1052 1152h0M1495 1072h0M1162 1217h0M800 931h0M1041 884h0M1593 1018h0M1364 894h0M812 938h0M1369 994h0M1053 815h0M924 1089h0M1654 856h0M1262 1066h0M969 1018h0M1197 995h0M1414 1016h0M1110 825h0M994 938h0M1408 898h0M1369 1111h0M807 1021h0M1421 868h0M808 1030h0M1095 1108h0M996 890h0M1464 1007h0M895 884h0M908 1027h0M1535 1046h0M1023 1058h0M1316 1061h0M906 1019h0M1672 912h0M911 1055h0M1130 1122h0M1187 965h0M1625 1009h0M1396 968h0M1585 1026h0M1170 911h0M1534 860h0M761 899h0M742 904h0M1130 1044h0M1637 858h0M1311 1089h0M1046 890h0M1391 895h0M837 1025h0M923 1081h0M583 979h0M1005 858h0M847 1029h0M1438 1038h0M1638 942h0M1415 1039h0M981 1092h0M711 987h0M1445 1037h0M1417 1059h0M1223 1143h0M1369 1121h0M763 921h0M1638 1061h0M1149 1047h0M605 936h0M699 930h0M1168 1138h0M1257 945h0M1056 878h0M879 920h0M1070 869h0M1458 1188h0M1252 900h0M1201 1158h0M1517 900h0M1362 890h0M1393 992h0M939 1094h0M706 1001h0M1139 828h0M1300 1216h0M820 887h0M1089 1211h0M1480 901h0M1120 1182h0M1709 929h0M1149 936h0M1517 1034h0M1425 1018h0M1383 1214h0M1268 1184h0M1428 1059h0M1145 1073h0M860 1084h0M616 942h0M1086 1102h0M1272 900h0M1573 859h0M919 948h0M1685 915h0M567 960h0M1693 930h0M1210 1005h0M1257 1128h0M969 851h0M1555 882h0M1607 1025h0M1397 938h0M1428 1032h0M1637 877h0M1465 869h0M886 1068h0M1094 839h0M1343 952h0M1537 1079h0M1028 853h0M1092 908h0M839 995h0M1249 1087h0M1481 1126h0M1074 1055h0M1487 1054h0M733 968h0M893 957h0M1272 1152h0M1416 1054h0M1335 1022h0M1044 818h0M937 1051h0M965 1113h0M1588 992h0M1727 875h0M1353 1087h0M859 965h0M733 998h0M1293 1059h0M1135 986h0M1387 1157h0M1096 1221h0M955 855h0M1168 1140h0M1527 1040h0M1116 856h0M1581 855h0M1418 1155h0M743 988h0M1249 919h0M1009 1007h0M1240 1133h0M1239 1135h0M1187 1136h0M1374 1153h0M1261 1037h0M927 846h0M1617 925h0M937 1013h0M1540 989h0M982 968h0M1011 891h0M1240 867h0M1553 968h0M1034 911h0M1264 1063h0M804 1064h0M1453 1055h0M1678 878h0M710 985h0M949 983h0M949 1030h0M748 996h0M974 1096h0M1378 1171h0M1196 1082h0M1356 1079h0M999 944h0M1023 994h0M1194 1134h0M1184 1058h0M1649 870h0M1272 1089h0M1636 893h0M1726 969h0M842 911h0M1017 842h0M1603 937h0M1322 1088h0M1110 816h0M1216 906h0M1561 1063h0M1091 921h0M1405 1093h0M1274 1072h0M1534 880h0M1286 1077h0M755 1042h0M1219 960h0M1619 908h0M982 885h0M1103 827h0M1692 1040h0M1439 1071h0M1081 924h0M859 1033h0M1482 868h0M990 973h0M1012 866h0M963 1030h0M1377 973h0M1325 1082h0M993 1038h0M971 1024h0M978 1090h0M1707 898h0M626 1003h0M676 980h0M1604 983h0M1089 991h0M1142 1112h0M913 1055h0M1086 815h0M1124 1057h0M1294 1108h0M1359 930h0M1211 1227h0M1319 869h0M1271 1098h0M1589 1003h0M1103 1163h0M1544 983h0M1052 982h0M1531 903h0M1672 965h0M1301 995h0M1038 881h0M1185 1203h0M1032 946h0M667 1010h0M1155 1163h0M999 1081h0M1149 1081h0M1473 948h0M782 881h0M1213 883h0M1311 1097h0M805 955h0M995 1088h0M836 993h0M1285 970h0M1122 800h0M1119 804h0M1111 820h0M1112 958h0M876 894h0M1015 998h0M840 935h0M1026 974h0M1129 1110h0M1234 875h0M1430 896h0M1040 829h0M1459 1117h0M674 921h0M816 1004h0M1517 970h0M1627 956h0M680 1007h0M1093 1121h0M1597 884h0M1643 992h0M1085 854h0M1014 1017h0M1122 818h0M1018 850h0M907 937h0M830 869h0M1326 1005h0M1140 1024h0M1634 907h0M1452 953h0M1630 1031h0M840 955h0M1628 1005h0M1628 1029h0M1093 1012h0M1002 1131h0M1631 959h0M885 1064h0M1725 1022h0M1094 1206h0M1029 845h0M1597 970h0M1178 1223h0M975 1061h0M1623 953h0M1437 946h0M1315 928h0M945 900h0M883 1060h0M1516 1019h0M1430 1152h0M841 959h0M694 944h0M872 1086h0M722 998h0M945 1042h0M1670 884h0M1033 1109h0M602 952h0M821 1053h0M1421 1037h0M986 946h0M1337 1223h0M1116 1198h0M865 906h0M1152 945h0M1680 943h0M1234 1007h0M887 918h0M1384 1100h0M1672 865h0M970 1117h0M1258 1095h0M1664 1012h0M1346 1190h0M1157 1209h0M1239 1153h0M760 935h0M977 1027h0M1500 987h0M815 1057h0M1044 1136h0M1007 967h0M1256 901h0M1082 1205h0M1508 999h0M1336 1196h0M654 918h0M923 1099h0M1534 1026h0M1159 1066h0M1613 1012h0M1538 1058h0M1399 1025h0M922 970h0M1110 967h0M1258 876h0M1354 1221h0M1042 886h0M920 882h0M1629 1050h0M859 891h0M1374 964h0M1409 1115h0M1380 1024h0M1638 1067h0M1208 1115h0M952 1049h0M1673 1029h0M1253 1218h0M1276 867h0M816 1008h0M1397 881h0M888 964h0M875 954h0M956 979h0M1136 1112h0M1665 985h0M1080 845h0M1024 1146h0M1354 979h0M1378 1210h0M650 924h0M1222 973h0M957 1014h0M1225 919h0M833 989h0M1023 859h0M863 1067h0M1467 933h0M715 947h0M1568 1069h0M1148 1039h0M1315 982h0M1249 1204h0M1099 1227h0M1649 920h0M713 985h0M1278 983h0M1352 931h0M1287 1009h0M1183 1097h0M1074 1027h0M995 885h0M1083 1030h0M1523 894h0M1129 1025h0M1197 1059h0M732 962h0M843 905h0M1040 942h0M1374 1051h0M1332 1063h0M1551 877h0M1627 987h0M1542 1037h0M678 988h0M1063 1102h0M1240 894h0M1220 973h0M1040 973h0M829 1063h0M1098 915h0M928 946h0M1260 1112h0M1553 850h0M1114 938h0M768 889h0M708 929h0M1435 1188h0M1182 967h0M1237 1009h0M971 900h0M1083 962h0M770 958h0M1006 905h0M1329 1203h0M1574 987h0M1079 1085h0M1259 1099h0M1529 1085h0M1474 943h0M1108 873h0M885 876h0M1069 912h0M806 939h0M1490 899h0M1464 890h0M1332 916h0M804 974h0M695 980h0M1100 822h0M1294 982h0M1443 1052h0M1554 925h0M990 1132h0M1111 1200h0M814 1024h0M1150 975h0M1366 929h0M1543 1036h0M1071 989h0M1721 980h0M1314 1061h0M943 889h0M750 900h0M1160 880h0M975 934h0M1221 1135h0M521 1162h0M672 1109h0M852 1189h0M724 1135h0M609 1002h0M609 1091h0M902 1172h0M692 1218h0M750 1122h0M549 1152h0M855 1218h0M672 1199h0M1681 375h0M1344 540h0M1557 514h0M1707 394h0M1267 493h0M1506 393h0M1135 291h0M1405 410h0M1201 510h0M1456 415h0M1426 330h0M1187 456h0M1651 451h0M1486 416h0M1223 373h0M1700 267h0M1641 248h0M1364 385h0M1641 375h0M1198 560h0M1377 478h0M1573 366h0M1678 287h0M1460 520h0M1694 268h0M1325 420h0M1568 492h0M1161 296h0M1639 330h0M1344 484h0M1550 253h0M1446 328h0M1687 485h0M1599 270h0M1689 454h0M1494 334h0M1300 373h0M1346 322h0M1324 412h0M1631 483h0M1425 461h0M1567 286h0M1447 456h0M1484 546h0M1504 436h0M1319 403h0M1658 336h0M1570 341h0M1218 537h0M1432 266h0M1588 382h0M1621 439h0M1129 466h0M1596 345h0M1308 323h0M1624 250h0M1226 439h0M1525 288h0M1517 532h0M1574 332h0M1274 270h0M1169 511h0M1180 415h0M1611 325h0M1340 379h0M1345 405h0M1441 336h0M1155 316h0M1256 354h0M1673 414h0M1674 355h0M1527 389h0M1319 290h0M1194 516h0M1417 511h0M1179 336h0M1344 460h0M1660 252h0M1496 744h0M1225 842h0M1513 752h0M1569 801h0M1486 693h0M1518 685h0M1336 648h0M1138 620h0M1218 859h0M1459 817h0M1141 700h0M1408 809h0M1174 642h0M1463 577h0M1152 581h0M1567 797h0M1231 637h0M1447 613h0M1454 719h0M1534 822h0M1417 678h0M1370 710h0M1599 611h0M1598 615h0M1684 595h0M1600 832h0M1211 645h0M1427 586h0M1696 682h0M1543 820h0M1345 756h0M1652 590h0M1340 853h0M1351 601h0M1272 631h0M1421 589h0M1438 707h0M1258 802h0M1371 846h0M1491 565h0M1464 810h0M1266 640h0M1199 752h0M1468 762h0M1356 631h0M1237 839h0M1216 813h0M1287 847h0M1317 657h0M1530 718h0M1358 624h0M1404 836h0M1505 677h0M1302 581h0M1237 619h0M1374 817h0M1656 813h0M1701 639h0M1477 645h0M1266 772h0M1660 769h0M1721 631h0M1348 686h0M1588 728h0M1246 790h0M1503 815h0M1415 600h0M1171 660h0M1441 751h0M1193 801h0M1397 643h0M1292 857h0M1408 599h0M1516 810h0M1549 833h0M1388 612h0M1647 613h0M1282 628h0M1420 668h0M1281 714h0M1230 777h0M1570 771h0M1578 593h0M1700 572h0M1292 710h0M1156 708h0M1429 697h0M1345 624h0M1200 733h0M1340 733h0M1489 696h0M1630 594h0M1508 694h0M1362 645h0M1389 640h0M1611 565h0M1142 585h0M1486 750h0M1255 669h0M1702 795h0M1356 627h0M1652 642h0M1337 822h0M1364 659h0M1328 817h0M1168 622h0M1457 630h0M1514 743h0M1397 668h0M1683 699h0M1413 613h0M1296 599h0M1694 799h0M1692 672h0M1303 688h0M1548 643h0M1296 783h0M1243 781h0M1223 661h0M1326 631h0M1239 629h0M1644 714h0M1572 779h0M1201 822h0M1610 602h0M1291 828h0M1316 739h0M1291 627h0M1547 791h0M1339 729h0M1494 766h0M1161 788h0M1373 777h0M1284 814h0M1355 623h0M1179 822h0M1160 710h0M1143 726h0M1165 645h0M1229 634h0M1230 706h0M1265 740h0M1525 823h0M1543 794h0M1198 642h0M1153 614h0M1468 622h0M1338 796h0M1496 700h0M1368 618h0M1567 658h0M1426 812h0M1377 853h0M1686 786h0M1496 702h0M1456 632h0M1601 645h0M1528 805h0M1699 597h0M1363 757h0M1369 600h0M1309 801h0M1296 593h0M1170 704h0M1301 787h0M1331 635h0M1490 609h0M1385 630h0M1291 838h0M1140 609h0M1150 828h0M1340 725h0M1215 754h0M1561 604h0M1661 699h0M1327 659h0M1692 782h0M1320 654h0M1731 782h0M1557 560h0M1382 612h0M1454 566h0M1280 783h0M1597 629h0M1454 758h0M1224 759h0M1314 663h0M1306 784h0M1457 712h0M1206 726h0M1448 811h0M1148 783h0M1367 800h0M1335 703h0M1712 834h0M1443 819h0M1665 796h0M1214 736h0M1538 650h0M1448 773h0M1516 805h0M1544 599h0M1572 807h0M1641 805h0M1027 716h0M1030 582h0M1015 754h0M1006 547h0M975 611h0M1025 572h0M1004 781h0M1056 730h0M904 427h0M1002 709h0M996 778h0M1001 757h0M1068 735h0M1037 601h0M1006 569h0M1033 697h0M976 461h0M927 498h0M965 621h0M957 639h0M1052 791h0M921 541h0M909 450h0M953 484h0M980 496h0M979 662h0M983 490h0M1017 568h0M975 652h0M972 509h0M1054 685h0M981 559h0M991 629h0M1038 654h0M950 591h0M976 496h0M1022 594h0M1026 701h0M1004 602h0M1013 548h0M935 446h0M1024 791h0M1049 793h0M909 419h0M1012 539h0M1029 650h0M981 705h0M970 591h0M835 237h0M874 289h0M867 299h0M919 380h0M829 232h0M880 388h0M933 258h0M875 261h0M955 346h0M963 426h0M930 356h0M844 246h0M981 431h0M950 400h0M858 284h0M894 324h0M918 240h0M970 387h0M911 376h0M931 316h0M863 280h0M924 332h0M909 300h0M945 243h0M958 298h0" stroke="#8a8a9a" stroke-width="1.6" stroke-linecap="square"/><path d="M924 986h0M1464 860h0M1635 928h0M795 1011h0M1498 1021h0M983 1099h0M911 1002h0M1350 1062h0M1409 1161h0M1279 946h0M1418 1162h0M1286 1010h0M695 983h0M811 967h0M910 922h0M1309 886h0M742 910h0M1491 885h0M1523 940h0M1202 950h0M1309 1153h0M683 1020h0M825 901h0M1399 1218h0M961 862h0M1358 977h0M1148 875h0M1049 980h0M984 1141h0M1697 995h0M856 999h0M1499 1076h0M945 904h0M1401 1084h0M1404 1120h0M1013 907h0M1308 1111h0M1232 935h0M1663 1022h0M1266 1110h0M561 952h0M1259 1163h0M1447 1201h0M752 1034h0M1257 925h0M1107 838h0M1024 954h0M766 1028h0M1298 972h0M733 997h0M948 926h0M1530 875h0M853 1079h0M1715 943h0M1190 1166h0M1372 1135h0M805 1033h0M1275 1005h0M848 892h0M1720 996h0M1578 873h0M1516 972h0M1449 1217h0M940 980h0M1545 848h0M1076 900h0M1162 923h0M812 922h0M1291 865h0M1258 1020h0M701 916h0M1017 971h0M1477 906h0M1477 913h0M1312 1147h0M1700 934h0M1500 952h0M1354 1102h0M594 990h0M874 1078h0M1012 1132h0M1146 782h0M1127 1005h0M1652 867h0M959 995h0M889 1091h0M1105 968h0M1026 1173h0M743 923h0M1459 1180h0M1195 1040h0M939 1055h0M928 948h0M1400 1085h0M782 990h0M919 953h0M1112 808h0M741 1040h0M1428 1014h0M914 1097h0M870 867h0M921 1072h0M1004 902h0M1401 932h0M1319 1195h0M1513 855h0M1138 1032h0M1199 1101h0M1635 999h0M996 1130h0M1521 874h0M1319 1106h0M1368 1111h0M1424 1090h0M1408 856h0M1661 932h0M755 924h0M959 995h0M1332 1148h0M1540 1099h0M1095 1036h0M640 921h0M808 882h0M993 1089h0M1303 927h0M938 869h0M1229 1090h0M1224 1193h0M1022 1044h0M1443 908h0M1243 865h0M1382 960h0M1241 1098h0M1703 992h0M949 998h0M1247 1021h0M1112 1100h0M1426 888h0M907 858h0M1281 865h0M1115 1162h0M1436 1112h0M1660 995h0M679 966h0M1421 926h0M1684 1031h0M1676 951h0M938 1106h0M1467 1198h0M1196 1095h0M1044 1086h0M1601 1064h0M918 865h0M1157 1025h0M1452 1180h0M1162 934h0M938 1051h0M1304 910h0M926 847h0M1480 1036h0M1165 1148h0M1447 1021h0M1648 1050h0M1678 1019h0M921 902h0M1475 949h0M1188 1152h0M1434 911h0M1545 1055h0M916 1043h0M1298 1129h0M1321 984h0M1037 975h0M888 954h0M888 1033h0M1331 1183h0M1335 1117h0M1177 871h0M1577 869h0M1348 982h0M1265 1071h0M1340 930h0M1454 1042h0M1482 1133h0M1221 1056h0M844 874h0M1707 934h0M1569 1037h0M906 932h0M1530 989h0M1618 1025h0M1304 1025h0M871 884h0M1316 864h0M1182 1121h0M906 939h0M995 855h0M1476 1061h0M1406 925h0M1375 1221h0M1067 1185h0M1282 1025h0M1408 1013h0M1524 1102h0M1222 1170h0M1212 979h0M1713 945h0M1076 951h0M1335 946h0M1664 1022h0M881 918h0M1248 1006h0M748 1039h0M1040 912h0M1022 971h0M1339 876h0M1296 993h0M1707 885h0M1486 891h0M1351 992h0M1244 1076h0M1147 1069h0M921 937h0M1690 953h0M1275 1086h0M1425 857h0M1533 905h0M1683 997h0M1021 951h0M1443 1086h0M1372 1107h0M1340 1027h0M1555 1056h0M1273 956h0M1533 1093h0M1210 947h0M1023 1145h0M1363 886h0M1105 837h0M938 873h0M1212 892h0M1342 1104h0M1554 874h0M1064 1103h0M992 968h0M1192 1067h0M1091 1055h0M1302 928h0M1395 1009h0M1076 996h0M1063 1090h0M1549 948h0M728 1000h0M1060 813h0M1424 973h0M957 873h0M1280 1110h0M956 844h0M1053 854h0M1357 979h0M1180 1084h0M1094 806h0M1168 1116h0M1418 1185h0M826 909h0M996 866h0M1368 1169h0M918 866h0M1480 1147h0M1327 1209h0M1321 1043h0M731 1011h0M733 1020h0M685 987h0M1045 893h0M858 858h0M1398 994h0M935 850h0M1533 1078h0M1659 1041h0M1396 921h0M1283 1055h0M941 1110h0M1723 914h0M1326 942h0M1474 1041h0M1129 1139h0M1333 1143h0M1176 885h0M1692 926h0M1325 894h0M1267 1118h0M930 932h0M1295 1004h0M1193 907h0M1310 1137h0M792 892h0M1478 935h0M1689 1018h0M1084 1078h0M1373 952h0M1089 971h0M1057 1044h0M934 1028h0M1053 1179h0M998 1034h0M1599 931h0M1323 977h0M760 1013h0M1379 991h0M1133 975h0M930 871h0M1115 1193h0M1163 929h0M1074 862h0M1214 882h0M1633 1030h0M1282 871h0M924 855h0M1135 832h0M1191 939h0M1077 816h0M1372 936h0M913 1027h0M1462 909h0M1057 972h0M1047 925h0M1043 1085h0M1077 943h0M1133 1202h0M1195 1019h0M1166 923h0M1162 1216h0M1143 1057h0M1610 1073h0M1320 970h0M1062 880h0M625 997h0M1441 1178h0M1057 986h0M1244 1049h0M1670 909h0M1246 1036h0M1127 1206h0M1698 887h0M962 1116h0M1708 884h0M1338 917h0M1104 803h0M1269 1166h0M1346 1057h0M1182 1180h0M1352 934h0M1547 847h0M1029 987h0M1395 1199h0M907 959h0M915 1067h0M1036 963h0M1249 1063h0M1043 858h0M1474 1157h0M922 1031h0M1386 862h0M1022 1122h0M1111 1085h0M1391 1098h0M1153 886h0M1399 1099h0M1519 1012h0M1263 1078h0M1352 1144h0M1490 1014h0M1483 1128h0M1596 1043h0M923 964h0M1462 905h0M1142 1134h0M1336 1128h0M1408 1071h0M1294 1123h0M1372 1020h0M606 978h0M1655 907h0M1245 919h0M1206 1212h0M1386 1010h0M1405 1119h0M1150 984h0M1468 1058h0M1463 966h0M822 881h0M801 1037h0M1083 874h0M958 853h0M787 1027h0M1017 929h0M1297 1007h0M1294 913h0M1493 990h0M1270 972h0M808 907h0M680 969h0M1182 936h0M1300 1192h0M1221 925h0M1210 909h0M1199 1037h0M1051 1042h0M1610 1035h0M1531 920h0M1013 1121h0M765 1013h0M1119 1106h0M1281 1131h0M1516 876h0M883 978h0M1510 862h0M1726 966h0M1089 1188h0M1381 1215h0M1069 1030h0M1353 1015h0M787 949h0M1437 1222h0M989 853h0M1447 1221h0M1015 825h0M1121 1219h0M1084 863h0M1029 1047h0M1594 931h0M1029 1072h0M1508 1028h0M1080 1176h0M1654 1011h0M853 991h0M1082 1101h0M1219 965h0M1678 844h0M962 1030h0M965 1114h0M1174 1066h0M1041 893h0M1487 868h0M636 977h0M1321 978h0M865 1002h0M978 1033h0M1300 1132h0M1008 1088h0M1289 1019h0M704 956h0M1039 1128h0M835 930h0M1179 1223h0M1230 1204h0M1106 886h0M1047 969h0M1278 935h0M1618 871h0M955 984h0M1190 933h0M887 860h0M822 933h0M1289 1136h0M1542 988h0M1301 911h0M909 1101h0M607 984h0M952 853h0M976 898h0M762 978h0M1114 901h0M1452 1146h0M1629 1035h0M1370 900h0M1378 858h0M1132 1055h0M1016 1085h0M1386 866h0M1131 1211h0M953 981h0M879 1075h0M988 1137h0M1610 845h0M1171 1192h0M968 911h0M810 961h0M676 969h0M1629 1051h0M1060 930h0M1104 944h0M1269 1070h0M851 875h0M1401 1024h0M665 920h0M1193 888h0M1002 867h0M1032 970h0M1672 1007h0M1035 824h0M1217 890h0M952 962h0M808 1020h0M847 933h0M844 916h0M1110 1164h0M1461 1180h0M917 854h0M1486 1063h0M1339 1220h0M1521 851h0M1577 1003h0M1579 844h0M1523 917h0M925 996h0M1200 1189h0M798 973h0M1448 851h0M1356 1228h0M1298 1004h0M1337 1070h0M1200 1045h0M791 914h0M1149 857h0M747 1012h0M1172 1020h0M959 1061h0M1047 821h0M996 909h0M1294 1210h0M692 959h0M1004 1097h0M1220 1150h0M1306 962h0M1336 942h0M1461 954h0M803 1053h0M1126 960h0M802 1003h0M1138 1135h0M1458 1168h0M1275 982h0M1390 980h0M1533 963h0M606 973h0M1598 964h0M1567 1014h0M1686 890h0M1252 1214h0M928 987h0M1267 1168h0M1651 931h0M1254 1202h0M836 918h0M691 1003h0M1496 951h0M1328 968h0M1272 1072h0M1461 1142h0M752 964h0M1145 1136h0M1181 965h0M1266 1122h0M1711 839h0M987 1097h0M591 978h0M1220 894h0M1344 868h0M1332 1077h0M1036 859h0M867 889h0M927 930h0M1180 909h0M1457 1006h0M1521 964h0M883 912h0M1565 961h0M1308 1179h0M1119 1071h0M1526 945h0M954 1113h0M1559 1005h0M1454 1068h0M1439 995h0M1272 1019h0M1133 1145h0M1433 1079h0M1060 831h0M1010 1143h0M754 937h0M1356 1209h0M678 1001h0M1379 1117h0M958 909h0M1418 1056h0M1242 1081h0M1079 1030h0M1262 975h0M1523 1076h0M1587 1039h0M1254 863h0M770 910h0M1727 1018h0M776 1022h0M1097 794h0M1057 877h0M1713 1006h0M1002 1053h0M1577 1094h0M1703 900h0M1000 835h0M1034 973h0M1486 1008h0M1046 1005h0M1208 1107h0M1488 1120h0M1252 1086h0M986 1007h0M852 991h0M676 943h0M927 925h0M871 951h0M1203 1227h0M1286 1085h0M1255 1020h0M1054 1207h0M649 1017h0M881 1139h0M556 1015h0M701 1215h0M682 1165h0M846 1194h0M621 1042h0M763 1070h0M746 1188h0M667 1084h0M705 1159h0M797 1074h0M543 1124h0M518 1217h0M493 1036h0M770 1101h0M1347 308h0M1488 431h0M1528 352h0M1524 295h0M1207 542h0M1453 468h0M1458 274h0M1424 527h0M1413 537h0M1684 495h0M1474 300h0M1661 435h0M1451 470h0M1167 529h0M1427 550h0M1527 380h0M1456 415h0M1436 461h0M1708 321h0M1406 298h0M1670 392h0M1565 521h0M1118 312h0M1138 456h0M1525 432h0M1443 510h0M1633 507h0M1526 292h0M1484 344h0M1301 553h0M1143 312h0M1388 360h0M1453 509h0M1411 477h0M1312 448h0M1641 457h0M1319 278h0M1342 355h0M1592 364h0M1138 361h0M1701 430h0M1583 435h0M1282 424h0M1511 274h0M1463 528h0M1689 268h0M1451 480h0M1221 317h0M1684 272h0M1160 483h0M1232 480h0M1528 376h0M1362 455h0M1523 518h0M1521 484h0M1491 299h0M1301 463h0M1422 363h0M1628 471h0M1480 287h0M1389 417h0M1238 553h0M1651 370h0M1528 283h0M1505 552h0M1565 310h0M1146 477h0M1673 376h0M1330 282h0M1654 386h0M1196 416h0M1636 501h0M1518 297h0M1655 470h0M1656 312h0M1201 547h0M1668 353h0M1347 388h0M1523 300h0M1237 525h0M1647 318h0M1432 456h0M1157 706h0M1356 609h0M1372 666h0M1188 656h0M1690 796h0M1435 614h0M1502 624h0M1576 760h0M1300 710h0M1308 603h0M1703 753h0M1268 746h0M1721 687h0M1324 836h0M1154 633h0M1216 857h0M1231 775h0M1204 747h0M1677 818h0M1601 734h0M1506 738h0M1715 819h0M1396 758h0M1237 702h0M1204 607h0M1440 589h0M1179 816h0M1644 725h0M1339 564h0M1589 698h0M1598 675h0M1193 612h0M1706 813h0M1704 620h0M1456 658h0M1152 612h0M1418 650h0M1518 601h0M1202 728h0M1639 753h0M1701 812h0M1511 701h0M1682 702h0M1397 818h0M1361 731h0M1281 703h0M1713 762h0M1403 846h0M1400 827h0M1219 825h0M1234 848h0M1338 571h0M1629 691h0M1452 643h0M1400 840h0M1607 721h0M1309 599h0M1346 767h0M1628 645h0M1434 708h0M1576 698h0M1521 615h0M1349 724h0M1545 794h0M1657 645h0M1625 559h0M1499 627h0M1735 796h0M1260 621h0M1398 597h0M1544 553h0M1375 740h0M1553 671h0M1531 713h0M1256 727h0M1728 693h0M1310 846h0M1197 664h0M1484 695h0M1622 649h0M1521 672h0M1170 787h0M1346 788h0M1563 559h0M1516 583h0M1434 619h0M1166 803h0M1397 769h0M1249 689h0M1220 601h0M1420 589h0M1350 853h0M1264 645h0M1414 771h0M1468 758h0M1195 770h0M1357 800h0M1570 582h0M1379 785h0M1393 736h0M1243 626h0M1165 777h0M1410 662h0M1692 568h0M1149 821h0M1248 601h0M1482 642h0M1664 639h0M1619 811h0M1661 755h0M1301 664h0M1165 757h0M1459 623h0M1711 570h0M1381 622h0M1470 831h0M1437 776h0M1611 826h0M1279 603h0M1449 740h0M1230 705h0M1171 664h0M1516 732h0M1311 627h0M1346 596h0M1653 712h0M1471 709h0M1285 622h0M1676 714h0M1687 600h0M1280 668h0M1563 769h0M1528 780h0M1537 799h0M1554 656h0M1208 622h0M1160 787h0M1566 605h0M1304 700h0M1574 835h0M1602 751h0M1658 611h0M1685 686h0M1474 689h0M1627 651h0M1425 763h0M1270 731h0M1398 631h0M1265 807h0M1663 703h0M1413 603h0M1643 727h0M1628 672h0M1722 710h0M1647 637h0M1700 743h0M1176 688h0M1262 590h0M1627 794h0M1424 705h0M1428 793h0M1164 849h0M1170 842h0M1662 707h0M1256 664h0M1682 557h0M1694 664h0M1342 696h0M1195 758h0M1427 735h0M1515 658h0M1235 784h0M1362 779h0M1679 788h0M1446 563h0M1162 845h0M1372 584h0M1630 571h0M1319 781h0M1524 607h0M1390 693h0M1417 713h0M1713 812h0M1378 663h0M1275 651h0M1254 813h0M1680 594h0M1165 665h0M1245 617h0M1512 610h0M1627 820h0M1664 673h0M1235 629h0M1464 803h0M1452 661h0M1516 583h0M1344 780h0M1436 756h0M1225 653h0M1702 825h0M1428 806h0M1253 750h0M1173 689h0M1563 586h0M1433 730h0M1189 761h0M1197 593h0M1504 792h0M1371 628h0M1510 815h0M1209 752h0M1464 622h0M1177 691h0M1392 584h0M1498 787h0M1466 635h0M1402 700h0M1296 808h0M1251 660h0M1337 573h0M1295 598h0M1163 807h0M1440 613h0M1667 691h0M1646 562h0M1456 685h0M1499 818h0M1727 697h0M1543 726h0M975 568h0M975 654h0M955 502h0M1057 720h0M1009 675h0M995 486h0M1013 715h0M981 444h0M992 642h0M1012 668h0M927 434h0M945 627h0M1008 754h0M944 597h0M936 483h0M955 457h0M991 630h0M974 703h0M1051 674h0M1004 660h0M1058 791h0M997 639h0M971 465h0M946 595h0M986 561h0M1026 711h0M1041 610h0M1033 707h0M1011 565h0M964 472h0M1070 784h0M968 500h0M996 514h0M1020 757h0M1036 732h0M1003 670h0M985 706h0M1036 759h0M990 550h0M950 406h0M988 468h0M1072 729h0M940 614h0M1004 717h0M928 488h0M912 432h0M1063 714h0M1045 609h0M1068 762h0M994 604h0M974 386h0M985 422h0M941 372h0M948 436h0M980 408h0M860 324h0M902 410h0M837 173h0M954 354h0M892 417h0M885 311h0M945 376h0M979 443h0M839 198h0M886 327h0M929 411h0M964 421h0M892 248h0M941 344h0M962 396h0M920 391h0M914 417h0M954 276h0" stroke="#b8b8b8" stroke-width="1.6" stroke-linecap="square"/><path d="M1090 1060h0M1704 957h0M1294 1108h0M1006 929h0M921 883h0M1268 1164h0M1021 1046h0M1364 920h0M1074 922h0M700 995h0M1063 875h0M1331 963h0M1164 1136h0M1122 900h0M1491 902h0M1403 1151h0M1116 797h0M1369 1223h0M991 916h0M1263 1220h0M1140 946h0M1535 1009h0M733 1022h0M1523 1081h0M1323 968h0M991 971h0M1455 1075h0M1548 983h0M1663 864h0M1482 869h0M1298 1197h0M1480 1107h0M1176 898h0M1224 1189h0M1242 986h0M943 966h0M1033 878h0M1063 1163h0M1567 956h0M947 940h0M1357 1143h0M1094 1133h0M950 1006h0M876 1005h0M709 948h0M1216 1225h0M1463 995h0M1585 1046h0M1404 1074h0M1100 1108h0M1193 1031h0M1600 935h0M877 863h0M1546 945h0M1671 851h0M1212 1220h0M628 962h0M1644 969h0M1201 987h0M1110 1072h0M1237 946h0M1597 966h0M1169 1198h0M1500 1037h0M1583 970h0M1686 1022h0M1451 1218h0M1026 1162h0M1377 901h0M1396 948h0M761 926h0M921 878h0M1626 881h0M1227 995h0M1346 1170h0M1047 875h0M872 941h0M873 1018h0M1017 1007h0M1035 1109h0M1229 1018h0M1418 1046h0M1191 1181h0M1423 1027h0M836 1005h0M1000 925h0M1113 1001h0M1325 1066h0M1245 1000h0M928 957h0M1333 1064h0M1469 1134h0M1041 950h0M1131 882h0M1134 938h0M1158 970h0M1656 905h0M1251 1180h0M1266 935h0M918 975h0M1139 1130h0M1387 1087h0M1720 923h0M1006 956h0M1157 1162h0M1612 884h0M810 1050h0M1042 1137h0M791 972h0M910 1103h0M1242 1041h0M984 1100h0M1336 930h0M1363 1131h0M1261 1021h0M1311 1023h0M932 1076h0M1443 1209h0M1362 1011h0M1440 1118h0M1004 935h0M1129 1028h0M1468 1065h0M890 890h0M1457 1088h0M1041 1146h0M1626 863h0M1117 1165h0M1535 1008h0M1336 1080h0M862 873h0M1300 1032h0M985 880h0M1337 1048h0M1061 1201h0M1588 968h0M986 1095h0M962 934h0M1392 975h0M877 855h0M1005 817h0M1080 1134h0M1284 1145h0M761 1006h0M1374 1190h0M1205 1193h0M893 908h0M718 918h0M1255 1225h0M1088 1146h0M833 1040h0M669 1017h0M806 985h0M1249 951h0M1291 954h0M1178 989h0M1220 1166h0M1013 1131h0M1166 1090h0M1677 896h0M1024 1169h0M1086 1114h0M1085 932h0M1032 989h0M1445 1170h0M1048 983h0M762 976h0M797 1016h0M941 943h0M1706 847h0M804 1065h0M1463 852h0M1412 863h0M1104 1157h0M1139 1167h0M1457 1017h0M1261 1222h0M841 915h0M1552 929h0M1025 872h0M1464 1073h0M1556 1031h0M1044 1060h0M1704 844h0M1017 1008h0M916 925h0M1164 883h0M1215 866h0M980 978h0M1119 897h0M1363 930h0M1018 908h0M1411 1125h0M1431 972h0M1388 952h0M1309 1109h0M1384 1081h0M1214 1055h0M1061 921h0M1188 876h0M627 932h0M1447 1084h0M1459 1226h0M882 1071h0M1402 946h0M1175 1220h0M1496 991h0M601 949h0M982 851h0M1437 953h0M763 939h0M1610 865h0M1398 1033h0M1698 932h0M892 1043h0M1614 1013h0M1386 1030h0M870 986h0M1538 1100h0M789 1011h0M928 1073h0M1609 956h0M1069 910h0M1111 852h0M1551 1048h0M1081 1006h0M844 1034h0M1362 1065h0M862 1045h0M1509 925h0M1271 1194h0M1172 894h0M943 864h0M796 1054h0M1147 1062h0M910 863h0M1120 825h0M1247 1092h0M678 931h0M1039 908h0M812 930h0M1409 1002h0M779 926h0M688 973h0M806 958h0M1451 1026h0M1540 1002h0M1252 1001h0M829 970h0M1346 1098h0M803 983h0M1613 919h0M1440 1201h0M1123 824h0M893 989h0M1323 1089h0M969 1003h0M1679 916h0M1081 970h0M675 933h0M785 1045h0M786 962h0M1399 966h0M1409 892h0M802 957h0M1230 1019h0M1667 1043h0M902 881h0M949 934h0M1388 939h0M783 940h0M1238 1087h0M716 1025h0M1606 887h0M1281 1105h0M948 921h0M1432 1135h0M1454 1171h0M1597 971h0M1309 1005h0M1458 1095h0M1483 881h0M1520 1016h0M981 878h0M669 1013h0M1413 883h0M1524 871h0M1005 872h0M1357 1146h0M1429 1113h0M1716 889h0M1318 1176h0M1688 1041h0M1064 1061h0M1647 896h0M1056 929h0M1038 1073h0M993 881h0M1202 1005h0M1407 1095h0M642 960h0M1609 965h0M773 890h0M1134 936h0M1709 926h0M865 1014h0M1223 962h0M1146 1221h0M836 908h0M1358 900h0M1384 953h0M1010 850h0M1606 1029h0M981 1021h0M1104 859h0M1475 1138h0M1393 1103h0M1596 1052h0M1599 1070h0M1595 897h0M1250 924h0M1545 969h0M1292 1202h0M937 988h0M955 1038h0M1289 1157h0M839 940h0M965 831h0M903 860h0M817 978h0M1249 1099h0M1231 1070h0M1625 869h0M1080 1108h0M1734 885h0M1274 1228h0M1070 856h0M1353 1033h0M1063 1167h0M1538 1013h0M1631 931h0M647 927h0M1172 1000h0M1408 970h0M1021 1147h0M1137 1143h0M1214 915h0M1268 977h0M788 948h0M1509 1021h0M1096 802h0M770 984h0M1049 1063h0M866 1033h0M1100 1227h0M1006 878h0M1136 1194h0M1416 1188h0M1140 1001h0M888 891h0M1439 910h0M1131 993h0M847 988h0M1204 1190h0M749 940h0M1319 872h0M943 949h0M1220 1037h0M1447 875h0M1270 961h0M906 1080h0M762 994h0M981 899h0M1544 1083h0M920 979h0M1130 1199h0M1113 1188h0M1229 1063h0M1101 1081h0M1255 910h0M1297 875h0M1196 1023h0M1100 854h0M745 927h0M1252 973h0M1005 1098h0M1389 1158h0M1117 801h0M1152 1111h0M951 998h0M1078 954h0M749 920h0M1072 917h0M693 926h0M755 942h0M736 1005h0M949 1053h0M1137 986h0M607 940h0M1709 894h0M802 1051h0M1457 1027h0M1192 1075h0M715 939h0M773 1045h0M1589 988h0M1318 1183h0M1676 881h0M972 958h0M1254 925h0M1104 1014h0M1545 956h0M1316 1209h0M1024 1054h0M1043 1030h0M865 1058h0M873 970h0M1148 1226h0M863 1031h0M1285 1153h0M1036 809h0M1253 1178h0M1031 838h0M1011 1151h0M1004 823h0M1138 1195h0M1085 805h0M1120 906h0M1296 1114h0M953 1074h0M1497 1074h0M1319 1057h0M678 925h0M1101 1215h0M1314 961h0M706 991h0M1058 1213h0M768 1162h0M883 1133h0M723 1134h0M1063 1205h0M599 1175h0M636 1013h0M630 1178h0M576 1153h0M848 1207h0M601 1112h0M507 1172h0M926 1213h0M842 1086h0M537 1042h0M919 1143h0M833 1091h0M1004 1168h0M1618 347h0M1555 453h0M1581 481h0M1622 504h0M1396 506h0M1239 314h0M1624 495h0M1560 496h0M1157 425h0M1231 485h0M1572 315h0M1252 362h0M1464 340h0M1510 519h0M1364 265h0M1331 272h0M1584 487h0M1486 486h0M1667 301h0M1639 273h0M1283 461h0M1361 300h0M1282 348h0M1180 283h0M1241 460h0M1397 352h0M1559 266h0M1698 475h0M1284 504h0M1366 311h0M1394 491h0M1163 352h0M1650 475h0M1183 362h0M1454 297h0M1710 458h0M1614 403h0M1499 531h0M1295 518h0M1411 275h0M1683 510h0M1606 295h0M1559 478h0M1536 428h0M1182 318h0M1424 425h0M1307 360h0M1530 344h0M1669 539h0M1452 468h0M1485 554h0M1202 312h0M1124 341h0M1704 333h0M1590 398h0M1661 435h0M1697 314h0M1509 345h0M1314 320h0M1273 304h0M1155 559h0M1316 428h0M1657 369h0M1498 408h0M1599 356h0M1609 462h0M1258 309h0M1525 418h0M1189 547h0M1200 484h0M1627 261h0M1351 302h0M1443 529h0M1296 356h0M1200 315h0M1599 512h0M1627 517h0M1166 571h0M1504 522h0M1415 364h0M1170 320h0M1441 749h0M1489 613h0M1323 606h0M1308 754h0M1492 592h0M1581 732h0M1286 698h0M1411 618h0M1353 671h0M1551 556h0M1560 737h0M1216 752h0M1503 688h0M1438 697h0M1601 647h0M1571 561h0M1600 779h0M1585 730h0M1351 750h0M1621 764h0M1669 650h0M1287 656h0M1592 607h0M1561 762h0M1415 574h0M1681 607h0M1226 661h0M1343 849h0M1339 763h0M1723 795h0M1445 686h0M1537 687h0M1439 776h0M1153 745h0M1527 754h0M1287 806h0M1524 704h0M1413 582h0M1427 715h0M1480 786h0M1535 724h0M1701 654h0M1236 808h0M1719 607h0M1282 658h0M1532 573h0M1628 804h0M1325 794h0M1368 674h0M1563 748h0M1569 815h0M1243 591h0M1661 671h0M1606 728h0M1177 613h0M1564 734h0M1332 672h0M1226 806h0M1516 559h0M1585 781h0M1629 755h0M1483 813h0M1429 718h0M1719 608h0M1642 708h0M1717 687h0M1149 716h0M1264 857h0M1155 826h0M1642 806h0M1363 584h0M1695 543h0M1424 811h0M1573 704h0M1579 608h0M1718 825h0M1441 842h0M1243 578h0M1656 573h0M1313 681h0M1274 663h0M1162 858h0M1536 804h0M1411 674h0M1546 682h0M1682 626h0M1685 757h0M1232 807h0M1576 589h0M1502 561h0M1477 692h0M1364 706h0M1310 772h0M1219 677h0M1289 588h0M1619 613h0M1400 596h0M1195 828h0M1474 781h0M1297 771h0M1404 648h0M1333 721h0M1658 718h0M1555 822h0M1470 632h0M1239 622h0M1180 848h0M1597 712h0M1381 717h0M1585 713h0M1397 742h0M1417 664h0M1420 651h0M1151 644h0M1601 634h0M1668 666h0M1591 659h0M1155 783h0M1380 763h0M1400 767h0M1276 684h0M1419 591h0M1395 758h0M1170 852h0M1189 668h0M1496 825h0M1404 744h0M1195 820h0M1494 583h0M1358 790h0M1432 719h0M1379 628h0M1294 810h0M1239 704h0M1298 782h0M1467 574h0M1267 610h0M1732 804h0M1314 786h0M1664 572h0M1526 555h0M1537 593h0M1545 702h0M1410 851h0M1358 643h0M1244 608h0M1234 730h0M1169 597h0M1398 600h0M1566 645h0M1215 736h0M1708 786h0M1295 806h0M1402 814h0M1462 840h0M1658 593h0M1473 697h0M1602 659h0M1336 757h0M1334 816h0M1356 750h0M1384 845h0M1320 790h0M1417 594h0M1527 727h0M1689 725h0M1404 595h0M1673 549h0M1229 810h0M1223 655h0M1540 646h0M1703 721h0M1638 672h0M1695 754h0M1302 748h0M1295 772h0M936 606h0M1016 774h0M935 499h0M1007 529h0M931 582h0M965 611h0M937 440h0M1029 806h0M1048 679h0M977 641h0M955 557h0M911 490h0M977 527h0M1053 702h0M1041 595h0M991 589h0M949 454h0M946 561h0M980 594h0M970 489h0M1050 739h0M1026 762h0M1030 620h0M1077 771h0M1028 723h0M1047 703h0M988 457h0M1055 756h0M1048 644h0M983 519h0M1039 597h0M1049 624h0M1025 732h0M969 408h0M1003 617h0M915 469h0M1074 791h0M1050 769h0M950 463h0M975 577h0M1052 740h0M1038 626h0M1043 664h0M935 473h0M1046 688h0M983 556h0M992 623h0M966 332h0M893 302h0M967 357h0M869 302h0M878 371h0M956 412h0M865 316h0M882 308h0M941 284h0M900 296h0M871 227h0M912 279h0M862 235h0M884 283h0M841 271h0M1893 1002h0M2308 418h0M1798 476h0M2013 441h0M1986 550h0M1779 877h0M1857 833h0M1851 836h0M1852 827h0M1928 803h0M2057 738h0M2250 698h0M2252 693h0M1909 547h0M1912 544h0M1909 547h0M2093 538h0M2090 544h0M2285 422h0M1725 1167h0M1765 1123h0M1898 1137h0M2000 1161h0M2010 1155h0" stroke="#4e5a4e" stroke-width="2" stroke-linecap="square"/><path d="M1034 1140h0M695 990h0M1161 1151h0M1606 946h0M1653 844h0M1359 1165h0M993 872h0M1467 1051h0M1195 1201h0M1196 1093h0M1435 1027h0M568 944h0M1365 1144h0M1564 961h0M953 929h0M1002 868h0M1478 1120h0M1243 1129h0M1046 1073h0M1311 1027h0M959 1055h0M740 953h0M910 1031h0M1132 1160h0M800 912h0M1611 1054h0M1048 1031h0M1540 1001h0M1055 1115h0M1403 856h0M797 934h0M1401 1159h0M1018 941h0M1266 1122h0M996 1127h0M1271 999h0M1291 889h0M1545 863h0M1549 948h0M610 989h0M1249 1085h0M896 881h0M765 930h0M1093 829h0M1439 1001h0M698 952h0M1011 1130h0M851 1066h0M1041 886h0M1108 1107h0M1320 911h0M747 942h0M1010 850h0M1311 1075h0M886 1077h0M1435 1227h0M1421 1072h0M727 936h0M1463 1062h0M671 939h0M1148 1212h0M1334 858h0M1659 909h0M1353 892h0M786 913h0M1594 1037h0M1512 983h0M638 996h0M1298 1179h0M1189 1115h0M1364 1061h0M1305 1043h0M1480 1144h0M1160 1078h0M1505 949h0M1684 905h0M1408 863h0M990 927h0M1263 1121h0M1273 1010h0M1105 1077h0M845 962h0M1283 973h0M1345 1090h0M1264 1022h0M1469 963h0M1652 951h0M1480 1145h0M1729 871h0M1428 1120h0M1608 970h0M1440 1043h0M1302 881h0M1316 941h0M1496 973h0M736 1005h0M1009 962h0M968 848h0M985 1127h0M827 937h0M1124 803h0M1142 1223h0M1070 954h0M701 965h0M1175 891h0M1136 866h0M796 917h0M1085 909h0M1684 1000h0M1329 1190h0M1268 1148h0M1440 932h0M1331 945h0M1077 879h0M1189 883h0M1580 954h0M1576 928h0M682 997h0M1127 927h0M770 1008h0M1238 1149h0M920 1008h0M1213 913h0M1562 871h0M1214 949h0M1370 1111h0M1689 986h0M1284 1022h0M895 1011h0M1567 953h0M1284 1158h0M1490 1043h0M900 856h0M750 1035h0M1014 1007h0M1042 1149h0M862 892h0M1405 877h0M1351 1166h0M1341 878h0M1301 1160h0M1478 896h0M673 1012h0M791 983h0M1569 945h0M1597 1090h0M1356 1220h0M1501 1004h0M965 1127h0M939 1035h0M653 940h0M1089 984h0M1638 991h0M1195 1008h0M950 960h0M896 982h0M882 967h0M1183 889h0M975 922h0M1333 922h0M1047 962h0M1008 899h0M1599 858h0M1140 848h0M1331 868h0M1427 868h0M1191 1077h0M1042 1011h0M1646 979h0M1436 1112h0M1405 1019h0M938 934h0M1548 1008h0M1146 868h0M1369 959h0M568 970h0M967 954h0M1306 1074h0M1555 1002h0M774 919h0M1435 928h0M1136 1212h0M875 955h0M1254 1210h0M1329 1124h0M1046 1171h0M1220 1112h0M806 935h0M1091 849h0M1020 1083h0M1417 1060h0M1668 841h0M1463 1117h0M1314 1042h0M1458 1198h0M1292 1215h0M939 1093h0M1004 1010h0M1492 978h0M1309 1207h0M1332 892h0M1555 933h0M1457 1225h0M1255 965h0M1171 912h0M1068 866h0M1005 906h0M1465 875h0M1037 1011h0M1331 1172h0M770 929h0M1464 1124h0M1633 969h0M848 938h0M1550 852h0M1124 790h0M1163 1198h0M1303 969h0M828 957h0M1528 1040h0M1666 857h0M1432 1033h0M1386 932h0M1374 1032h0M848 873h0M1340 1173h0M1243 1096h0M1483 929h0M1435 881h0M1341 928h0M1388 1024h0M623 959h0M605 959h0M863 896h0M1473 965h0M1046 1100h0M674 939h0M1354 1024h0M1367 1000h0M1126 839h0M1180 884h0M1210 930h0M1334 949h0M1156 873h0M1415 858h0M1431 1155h0M1037 902h0M1411 1015h0M1399 891h0M963 875h0M958 954h0M1292 984h0M1576 927h0M673 935h0M1617 844h0M1130 1008h0M1085 856h0M1086 1041h0M988 1011h0M1118 1018h0M1127 1062h0M1196 1034h0M989 1020h0M1439 1155h0M1062 926h0M955 1068h0M1181 1105h0M1108 839h0M1205 942h0M1042 1058h0M1317 916h0M1414 1041h0M1144 1121h0M1463 1197h0M1085 1087h0M1055 866h0M1611 995h0M1563 1027h0M1356 893h0M646 973h0M1070 1065h0M1120 972h0M941 1092h0M1323 1208h0M1026 982h0M1278 885h0M1116 953h0M1536 1090h0M1099 842h0M1380 953h0M1502 1053h0M1109 1230h0M809 1010h0M1377 1061h0M1558 967h0M1161 1050h0M1293 1193h0M724 962h0M1423 1154h0M1051 885h0M1108 1061h0M1623 893h0M1713 916h0M1371 980h0M997 1028h0M716 1002h0M1005 1086h0M1281 1080h0M1142 993h0M1483 1115h0M1134 982h0M1607 900h0M1263 903h0M1607 903h0M952 1097h0M948 986h0M1198 1201h0M1201 938h0M1730 947h0M1298 928h0M1045 817h0M936 1017h0M1211 1082h0M849 1017h0M1211 952h0M1225 1080h0M1623 934h0M1287 1057h0M1382 977h0M1581 1036h0M1370 1006h0M1232 991h0M1309 860h0M1547 906h0M1184 1137h0M1627 955h0M1314 1002h0M1283 1136h0M1160 1125h0M1135 1063h0M1314 1176h0M776 1001h0M1324 1107h0M1358 1163h0M1032 1040h0M947 1021h0M1316 978h0M1033 986h0M1589 1051h0M1450 1111h0M1474 1150h0M885 1062h0M977 847h0M1257 999h0M1313 1211h0M1341 1034h0M708 929h0M1386 1221h0M1283 1162h0M1732 991h0M756 1048h0M1085 987h0M1398 957h0M1002 1127h0M1192 902h0M1462 986h0M1321 991h0M1221 1064h0M1680 943h0M1037 1136h0M1286 1025h0M789 942h0M1135 790h0M1096 938h0M902 1035h0M1315 951h0M1498 866h0M1287 1055h0M1380 896h0M805 962h0M1023 1021h0M994 966h0M911 1039h0M1648 857h0M1585 878h0M1717 919h0M1108 1172h0M884 964h0M1516 986h0M1110 800h0M1111 1115h0M1103 815h0M1308 1135h0M934 880h0M1183 969h0M1596 1038h0M1294 1176h0M913 1078h0M1074 1128h0M1272 1014h0M1170 1091h0M1673 856h0M566 965h0M1434 1103h0M751 1013h0M1442 1105h0M1640 946h0M601 986h0M1453 937h0M1064 1115h0M1216 1183h0M1502 976h0M1470 1043h0M1211 1079h0M857 1064h0M1230 913h0M1264 1057h0M1168 1155h0M1125 840h0M1038 887h0M1327 1163h0M896 856h0M1027 857h0M926 847h0M1696 970h0M1279 1187h0M1136 801h0M1516 1033h0M858 917h0M1242 1056h0M1394 1125h0M1525 1075h0M1153 1184h0M669 982h0M1087 1027h0M805 960h0M1359 894h0M1217 912h0M1078 943h0M818 1064h0M1684 988h0M1432 1068h0M895 1058h0M1311 1143h0M1164 884h0M1011 1041h0M1003 975h0M1469 881h0M959 1044h0M1572 978h0M925 940h0M1438 978h0M1611 1046h0M1053 955h0M1246 989h0M923 955h0M1097 1078h0M541 1062h0M585 1186h0M591 1050h0M914 1229h0M815 1126h0M542 1093h0M637 1127h0M680 1038h0M691 1129h0M658 1202h0M645 1154h0M652 1155h0M616 1038h0M524 1157h0M687 1177h0M940 1206h0M652 1220h0M1441 357h0M1286 498h0M1494 288h0M1598 534h0M1380 373h0M1343 424h0M1480 462h0M1168 276h0M1653 279h0M1147 284h0M1142 552h0M1498 452h0M1491 318h0M1288 495h0M1144 453h0M1473 417h0M1368 509h0M1153 510h0M1680 383h0M1218 285h0M1500 341h0M1432 444h0M1556 455h0M1302 389h0M1443 340h0M1646 467h0M1648 303h0M1213 358h0M1238 367h0M1444 521h0M1352 435h0M1520 294h0M1263 333h0M1149 491h0M1651 259h0M1294 487h0M1402 494h0M1398 486h0M1289 441h0M1364 374h0M1399 514h0M1274 330h0M1570 481h0M1222 301h0M1169 534h0M1215 299h0M1150 420h0M1281 470h0M1563 287h0M1391 367h0M1698 254h0M1192 350h0M1461 410h0M1465 300h0M1630 280h0M1339 499h0M1287 390h0M1451 334h0M1601 256h0M1378 286h0M1503 380h0M1574 326h0M1603 280h0M1463 340h0M1546 279h0M1516 502h0M1472 681h0M1368 692h0M1349 775h0M1723 805h0M1397 587h0M1646 614h0M1315 607h0M1574 683h0M1279 851h0M1404 659h0M1511 802h0M1493 572h0M1712 598h0M1456 733h0M1665 684h0M1232 854h0M1412 600h0M1248 663h0M1684 780h0M1471 685h0M1659 618h0M1544 670h0M1626 676h0M1150 823h0M1189 669h0M1585 606h0M1572 608h0M1296 571h0M1451 837h0M1296 845h0M1172 826h0M1309 565h0M1306 614h0M1455 607h0M1484 635h0M1178 662h0M1153 601h0M1320 580h0M1472 723h0M1425 636h0M1156 670h0M1488 702h0M1646 817h0M1369 830h0M1313 612h0M1493 561h0M1471 671h0M1626 665h0M1470 642h0M1168 841h0M1510 781h0M1414 658h0M1534 844h0M1404 782h0M1153 744h0M1517 694h0M1356 618h0M1167 608h0M1373 574h0M1667 767h0M1581 722h0M1700 824h0M1382 599h0M1588 597h0M1664 653h0M1272 703h0M1542 713h0M1292 858h0M1265 765h0M1656 729h0M1274 608h0M1212 795h0M1721 646h0M1200 758h0M1174 595h0M1224 725h0M1622 790h0M1651 672h0M1680 692h0M1392 729h0M1683 652h0M1722 542h0M1338 799h0M1418 777h0M1620 637h0M1154 721h0M1630 599h0M1445 617h0M1387 821h0M1217 636h0M1223 641h0M1354 641h0M1260 838h0M1337 663h0M1491 810h0M1564 727h0M1598 644h0M1170 810h0M1665 651h0M1723 602h0M1269 852h0M1222 697h0M1343 744h0M1153 682h0M1503 796h0M1663 654h0M1213 605h0M1440 560h0M1713 686h0M1699 638h0M1240 752h0M1548 625h0M1287 605h0M1612 732h0M1272 658h0M1201 830h0M1253 857h0M1200 630h0M1638 830h0M1263 619h0M1328 608h0M1734 769h0M1579 723h0M1622 723h0M1627 705h0M1181 829h0M1398 616h0M1162 745h0M1455 827h0M1397 581h0M1180 695h0M1705 554h0M1397 853h0M1514 657h0M1626 627h0M1457 599h0M1623 602h0M1392 819h0M1229 838h0M1161 849h0M1628 591h0M1440 839h0M1284 671h0M1306 611h0M1325 753h0M1218 684h0M1573 827h0M1390 722h0M1380 770h0M1276 664h0M1719 738h0M1192 694h0M1310 675h0M1223 844h0M1695 752h0M1495 667h0M1369 646h0M974 447h0M976 498h0M1023 770h0M1021 707h0M1010 809h0M1006 648h0M977 653h0M1027 618h0M1039 580h0M1007 662h0M1047 645h0M1051 667h0M980 520h0M1017 690h0M996 713h0M948 576h0M977 646h0M946 532h0M975 710h0M969 614h0M1014 706h0M1024 593h0M1023 734h0M956 423h0M1013 575h0M915 460h0M961 627h0M976 540h0M986 484h0M1022 687h0M1027 628h0M960 432h0M1013 743h0M989 706h0M957 520h0M1000 619h0M985 546h0M992 641h0M978 683h0M978 590h0M1043 788h0M956 491h0M1024 582h0M1006 744h0M1044 676h0M975 530h0M1062 730h0M1074 792h0M1013 651h0M1024 663h0M1039 685h0M1049 735h0M999 754h0M949 303h0M870 321h0M960 310h0M972 393h0M952 338h0M875 348h0M976 442h0M961 429h0M865 276h0M940 416h0M829 227h0M898 350h0M882 251h0M2123 1025h0M1976 732h0M2043 799h0M2258 1040h0M2272 1025h0M2199 717h0M2051 536h0M2256 738h0M1947 581h0M2275 931h0M1783 653h0M2255 438h0M1775 866h0M1922 800h0M2260 690h0M2313 693h0M2214 562h0M1764 1124h0M1754 1124h0M1891 1142h0" stroke="#504060" stroke-width="2" stroke-linecap="square"/><path d="M1108 1095h0M997 859h0M935 961h0M1036 1032h0M847 973h0M915 1034h0M1493 1075h0M1263 1207h0M1104 1004h0M1556 941h0M984 939h0M1354 1137h0M1268 1148h0M872 1042h0M1465 1089h0M1438 892h0M1433 915h0M744 961h0M1073 1207h0M1014 930h0M1141 1094h0M1430 1185h0M1088 902h0M1368 858h0M1649 891h0M1192 985h0M1683 969h0M1132 955h0M1385 893h0M1499 977h0M1407 884h0M1592 900h0M1413 891h0M1057 1095h0M1015 930h0M1008 1009h0M1353 893h0M1407 1001h0M913 1007h0M1721 922h0M1033 849h0M1426 1227h0M1437 861h0M800 909h0M1222 905h0M1062 1159h0M783 1036h0M1030 1135h0M876 1038h0M1211 938h0M942 1015h0M1156 1130h0M1627 853h0M1384 1155h0M820 1054h0M1075 924h0M1704 979h0M1440 996h0M1371 894h0M1013 1148h0M1311 1023h0M1332 1185h0M991 900h0M847 1049h0M1062 1150h0M1535 911h0M778 933h0M1365 867h0M715 994h0M1231 889h0M1291 1130h0M1204 1059h0M1577 890h0M881 889h0M1346 970h0M1142 1041h0M1004 884h0M828 1009h0M1621 971h0M825 930h0M1176 1175h0M1183 1183h0M1114 992h0M1063 838h0M780 1006h0M1450 973h0M1405 1050h0M1636 1068h0M1022 1081h0M1093 833h0M1401 1093h0M1163 937h0M1173 1136h0M1424 1028h0M1023 949h0M1006 1134h0M1219 1057h0M1315 1093h0M709 1017h0M977 861h0M1127 821h0M1559 844h0M1480 926h0M1518 927h0M1055 1024h0M1281 950h0M1189 946h0M849 1074h0M1259 1031h0M1528 931h0M1621 957h0M641 952h0M1073 1019h0M777 1001h0M1069 1199h0M1390 980h0M1706 901h0M1182 990h0M1213 954h0M1314 1148h0M1425 1146h0M837 1066h0M1301 981h0M940 976h0M1718 977h0M1157 1227h0M1183 873h0M1174 1220h0M1316 1080h0M1103 886h0M1598 1056h0M994 881h0M971 1114h0M1396 1073h0M1084 969h0M1297 1087h0M1005 952h0M1201 1061h0M861 980h0M1363 1015h0M1120 840h0M1139 1220h0M1047 823h0M1059 944h0M984 1092h0M1103 1084h0M1346 1113h0M1242 1103h0M992 1132h0M774 891h0M872 1050h0M1062 1007h0M1070 998h0M1201 1114h0M1502 853h0M1676 979h0M1117 1101h0M1328 1074h0M1034 1027h0M1284 988h0M1009 1142h0M733 937h0M962 1117h0M1067 952h0M1232 899h0M1255 977h0M1043 842h0M1650 1015h0M1348 872h0M1031 868h0M1134 1192h0M793 914h0M1601 899h0M1381 1023h0M887 972h0M895 1018h0M1180 1083h0M1204 869h0M806 968h0M1052 911h0M1386 1173h0M1034 952h0M993 1014h0M1110 1045h0M1036 909h0M1211 868h0M1040 838h0M680 917h0M931 1018h0M1308 910h0M1468 997h0M1342 1107h0M707 915h0M619 982h0M1272 1178h0M1330 935h0M1419 958h0M800 1006h0M1177 973h0M1306 932h0M1394 1208h0M1033 886h0M1368 969h0M1497 972h0M1033 1086h0M1255 1021h0M1445 921h0M1028 865h0M1656 939h0M1559 1085h0M1111 1214h0M655 954h0M1578 986h0M1279 1031h0M996 886h0M717 1036h0M1718 915h0M1248 994h0M1152 1173h0M1359 919h0M954 894h0M1099 811h0M994 1060h0M720 950h0M1127 1098h0M1690 943h0M739 952h0M727 1033h0M1633 839h0M1391 1032h0M1141 1156h0M1434 1015h0M1176 997h0M1034 1014h0M1462 1172h0M1030 858h0M1613 996h0M1021 861h0M1441 1058h0M1405 1053h0M1446 1143h0M1493 1062h0M673 988h0M1271 1051h0M892 1008h0M1318 1199h0M1204 1026h0M1286 945h0M961 1024h0M827 938h0M1146 1199h0M1513 989h0M1212 1089h0M972 1058h0M894 985h0M1459 993h0M1223 1222h0M1204 1082h0M1255 972h0M1089 1016h0M1564 957h0M985 1053h0M1140 914h0M1335 1148h0M1096 1162h0M921 980h0M1408 1100h0M952 833h0M644 934h0M1270 996h0M1233 1118h0M1528 1033h0M1206 910h0M768 960h0M1264 1008h0M1077 1127h0M1215 907h0M1013 996h0M1672 853h0M1217 902h0M1219 995h0M1378 1101h0M1727 941h0M1261 1125h0M1492 894h0M1399 1170h0M1345 1199h0M1050 937h0M1614 934h0M1619 984h0M1347 991h0M1172 995h0M1651 982h0M829 1008h0M1041 850h0M1415 1058h0M1075 1070h0M933 849h0M883 1074h0M783 1044h0M1394 1153h0M1452 993h0M765 1041h0M1641 968h0M1344 868h0M1593 917h0M1447 1094h0M1571 890h0M929 858h0M1704 937h0M1706 1010h0M1224 870h0M862 867h0M1396 1197h0M1137 1174h0M1072 916h0M1375 1145h0M1319 980h0M935 869h0M1027 978h0M1512 867h0M722 952h0M1170 1223h0M1395 1097h0M905 888h0M1222 910h0M1351 1217h0M1349 1058h0M1042 886h0M1202 958h0M843 986h0M1205 865h0M1447 1194h0M1113 1055h0M1481 1044h0M1432 996h0M1130 1127h0M767 960h0M1560 1051h0M1584 989h0M1274 879h0M1183 1042h0M1728 972h0M896 1059h0M1006 882h0M1465 1059h0M1133 1193h0M1184 1010h0M947 989h0M1210 1212h0M1081 1065h0M1197 919h0M988 1031h0M1401 1146h0M1089 912h0M1613 860h0M1451 1204h0M931 1060h0M1111 850h0M1390 1111h0M888 942h0M888 922h0M1401 1036h0M1378 950h0M895 912h0M717 960h0M917 923h0M928 874h0M771 963h0M1505 1075h0M767 903h0M1153 1195h0M1140 1171h0M1296 1217h0M1004 1123h0M1036 1158h0M1100 1167h0M1083 1149h0M1286 938h0M1634 984h0M976 853h0M706 992h0M1395 1087h0M1564 855h0M594 985h0M1283 1082h0M1688 956h0M1326 918h0M762 1002h0M1467 1028h0M1228 1146h0M1220 1229h0M1241 1019h0M1685 948h0M1029 960h0M1161 941h0M1438 1204h0M1670 886h0M1093 933h0M1033 1097h0M1295 1045h0M1410 1108h0M740 973h0M1518 1000h0M1399 961h0M977 1120h0M1061 808h0M1397 1176h0M1716 884h0M1002 1084h0M1574 905h0M1238 995h0M1645 901h0M942 922h0M1137 1222h0M1621 973h0M1494 932h0M1290 1180h0M1409 989h0M1562 1061h0M1224 1084h0M810 939h0M1189 939h0M1260 1213h0M994 988h0M1468 868h0M1407 980h0M1598 1080h0M1192 1210h0M1533 908h0M1584 940h0M1492 1072h0M765 932h0M991 850h0M1026 993h0M1645 935h0M1097 1095h0M691 907h0M1540 954h0M901 902h0M1404 1041h0M1268 1051h0M1124 1045h0M1009 947h0M1239 867h0M756 904h0M1017 1159h0M1118 894h0M1111 1106h0M900 959h0M1164 895h0M748 946h0M1663 839h0M1021 1021h0M1078 800h0M1127 965h0M1264 1174h0M1388 1185h0M1222 1166h0M1472 1059h0M1253 873h0M1610 979h0M883 1027h0M1368 1061h0M934 891h0M537 1153h0M666 1103h0M970 1192h0M609 1230h0M817 1123h0M806 1213h0M746 1165h0M619 1203h0M836 1207h0M969 1159h0M717 1056h0M863 1173h0M527 1226h0M804 1102h0M631 1124h0M552 1124h0M1471 450h0M1670 311h0M1533 419h0M1467 277h0M1567 367h0M1149 469h0M1187 289h0M1455 530h0M1482 360h0M1304 463h0M1171 279h0M1283 339h0M1474 388h0M1685 472h0M1531 282h0M1228 346h0M1377 552h0M1664 262h0M1633 513h0M1438 295h0M1281 495h0M1545 464h0M1693 456h0M1692 375h0M1189 564h0M1543 314h0M1148 470h0M1569 306h0M1497 517h0M1449 296h0M1322 510h0M1591 355h0M1462 434h0M1146 393h0M1274 376h0M1532 277h0M1488 401h0M1556 324h0M1455 288h0M1607 517h0M1186 561h0M1142 451h0M1149 506h0M1455 408h0M1249 334h0M1309 550h0M1531 345h0M1470 354h0M1562 457h0M1620 363h0M1438 433h0M1527 493h0M1593 508h0M1201 486h0M1285 271h0M1127 442h0M1471 535h0M1229 412h0M1436 304h0M1125 282h0M1536 346h0M1373 533h0M1158 406h0M1420 288h0M1380 463h0M1199 418h0M1306 301h0M1410 340h0M1638 290h0M1148 444h0M1212 426h0M1271 274h0M1166 802h0M1703 649h0M1568 819h0M1694 715h0M1226 647h0M1567 585h0M1220 709h0M1399 643h0M1687 547h0M1157 778h0M1483 743h0M1377 640h0M1322 677h0M1634 557h0M1268 753h0M1608 668h0M1177 772h0M1180 590h0M1672 744h0M1677 790h0M1589 793h0M1377 722h0M1471 790h0M1213 677h0M1508 679h0M1603 727h0M1385 745h0M1684 794h0M1693 813h0M1626 616h0M1601 604h0M1680 778h0M1177 832h0M1659 629h0M1281 792h0M1632 645h0M1461 701h0M1665 630h0M1378 815h0M1611 645h0M1549 825h0M1210 722h0M1481 574h0M1486 801h0M1679 705h0M1223 801h0M1704 732h0M1665 742h0M1299 581h0M1389 613h0M1245 632h0M1225 704h0M1486 815h0M1237 797h0M1463 686h0M1644 615h0M1235 706h0M1262 631h0M1668 656h0M1450 676h0M1153 678h0M1395 715h0M1440 760h0M1669 723h0M1430 843h0M1397 598h0M1649 567h0M1351 619h0M1216 654h0M1169 724h0M1507 842h0M1434 623h0M1161 679h0M1358 579h0M1480 730h0M1552 650h0M1454 766h0M1212 653h0M1216 593h0M1627 557h0M1684 654h0M1211 676h0M1684 710h0M1357 648h0M1230 637h0M1254 675h0M1693 753h0M1279 639h0M1670 638h0M1390 737h0M1722 544h0M1593 621h0M1383 772h0M1557 735h0M1618 828h0M1219 848h0M1335 855h0M1568 742h0M1722 590h0M1447 647h0M1165 857h0M1196 612h0M1686 620h0M1699 688h0M1319 745h0M1350 663h0M1449 616h0M1638 774h0M1367 778h0M1644 833h0M1349 689h0M1395 797h0M1403 615h0M1465 799h0M1285 637h0M1684 557h0M1590 720h0M1321 682h0M1180 669h0M1361 676h0M1667 758h0M1393 795h0M1611 700h0M1623 582h0M1395 731h0M1449 632h0M1190 803h0M1629 772h0M1193 860h0M1183 585h0M1654 613h0M1442 761h0M1201 688h0M1634 797h0M1543 590h0M1684 687h0M1642 809h0M1367 850h0M1646 711h0M1301 760h0M1283 629h0M1730 738h0M1391 667h0M1370 640h0M1665 822h0M1493 658h0M1655 576h0M1360 658h0M1188 843h0M1694 641h0M1392 651h0M1672 708h0M1427 624h0M1631 691h0M1472 844h0M1350 833h0M1316 716h0M1680 790h0M1413 695h0M1188 702h0M1329 846h0M1158 736h0M1192 698h0M997 654h0M1014 786h0M1002 656h0M1013 761h0M1002 570h0M899 464h0M990 684h0M1005 738h0M986 678h0M962 608h0M932 475h0M1042 721h0M1010 692h0M972 464h0M990 534h0M1008 755h0M1046 710h0M994 610h0M1001 500h0M995 653h0M1052 626h0M998 736h0M928 532h0M1050 719h0M1008 689h0M929 538h0M960 563h0M999 656h0M1007 740h0M981 710h0M958 404h0M1069 744h0M999 728h0M993 701h0M1023 778h0M947 565h0M1073 756h0M924 409h0M913 421h0M1017 674h0M961 425h0M1053 614h0M973 669h0M920 453h0M941 253h0M894 414h0M856 297h0M859 203h0M967 335h0M918 260h0M990 429h0M883 293h0M888 364h0M934 266h0M919 425h0M839 235h0M925 393h0M861 207h0M927 370h0M916 369h0M947 434h0M2244 800h0M2224 388h0M1782 696h0M1817 1092h0M1788 620h0M1773 873h0M1992 764h0M2060 733h0M2059 736h0M2125 715h0M2312 694h0M1975 524h0M1971 535h0M1722 1164h0M1954 1173h0M2007 1150h0" stroke="#604040" stroke-width="2" stroke-linecap="square"/><path d="M825 1015h0M953 924h0M1463 934h0M1460 1056h0M1035 934h0M1125 1032h0M1225 1090h0M1555 1021h0M1367 1016h0M1539 1009h0M1677 1002h0M1394 978h0M1036 1130h0M1195 908h0M1109 896h0M1035 1117h0M1215 871h0M1343 1100h0M902 1049h0M1481 977h0M1722 898h0M1101 1060h0M1555 1005h0M1093 876h0M1530 1051h0M1149 1091h0M1414 1046h0M1067 833h0M1430 1028h0M1702 1010h0M1344 869h0M1049 836h0M1148 1059h0M1655 933h0M1569 1065h0M1510 932h0M1303 1176h0M1188 954h0M1161 986h0M1245 1221h0M1545 903h0M815 936h0M1652 928h0M1202 961h0M1485 856h0M1520 1022h0M1106 1110h0M1105 860h0M661 929h0M1332 1089h0M1260 1105h0M1113 1171h0M762 1036h0M1398 966h0M690 1018h0M1436 903h0M1643 850h0M1355 1049h0M1133 1118h0M1336 1034h0M1657 1040h0M1387 995h0M1487 1034h0M1516 877h0M1595 1066h0M1494 1101h0M1456 1154h0M714 933h0M1324 952h0M1444 1187h0M947 924h0M948 836h0M1344 1011h0M834 876h0M807 975h0M1574 1088h0M1422 986h0M1353 1098h0M1315 1044h0M842 920h0M1317 1221h0M1326 972h0M1335 1132h0M1057 1158h0M937 1042h0M568 945h0M1474 1103h0M921 1028h0M1190 1029h0M670 1017h0M896 875h0M1733 964h0M1320 1124h0M1310 881h0M1360 889h0M1235 1020h0M1604 1077h0M854 905h0M652 1008h0M1193 1153h0M1025 1018h0M1251 1000h0M773 1041h0M1334 1192h0M999 1008h0M1718 972h0M969 896h0M710 991h0M1671 909h0M931 1095h0M1049 878h0M777 883h0M1252 1093h0M1168 1102h0M1306 1084h0M1169 1201h0M1439 892h0M704 1010h0M646 944h0M595 966h0M816 944h0M1442 1062h0M1682 1021h0M1086 813h0M1215 1206h0M949 1046h0M929 960h0M1605 975h0M1125 1198h0M1464 874h0M1229 936h0M1126 938h0M1587 936h0M1475 863h0M1381 1140h0M1455 1165h0M968 974h0M1378 945h0M735 909h0M1352 1111h0M1022 954h0M1072 1119h0M1463 1052h0M607 963h0M876 1032h0M1643 918h0M1035 1110h0M1446 1128h0M1429 1011h0M1372 1009h0M1422 1110h0M1180 957h0M601 988h0M1074 882h0M1279 956h0M718 966h0M1185 1047h0M1587 968h0M1191 1189h0M1049 972h0M1184 1197h0M755 938h0M1672 876h0M1309 947h0M1006 1098h0M1441 1015h0M1466 912h0M743 1040h0M882 1051h0M1667 873h0M1368 979h0M587 978h0M1581 947h0M946 849h0M1037 980h0M1012 952h0M1716 961h0M1533 848h0M795 1042h0M840 1060h0M1357 1191h0M1257 1035h0M642 942h0M588 972h0M1065 1192h0M748 920h0M1360 1128h0M1108 966h0M1216 1143h0M1332 1071h0M1372 936h0M1096 910h0M1317 1063h0M1269 996h0M1339 975h0M1173 1104h0M1376 896h0M1444 931h0M1252 905h0M848 1026h0M1441 891h0M1078 950h0M1427 1156h0M1361 1193h0M960 971h0M691 1012h0M1674 873h0M1222 1051h0M1597 922h0M1527 911h0M1136 1098h0M664 1001h0M1306 1024h0M1670 1016h0M1368 888h0M1085 903h0M876 1037h0M1551 1038h0M925 998h0M1125 1108h0M1002 863h0M1364 1173h0M1478 932h0M1461 990h0M1332 1190h0M1619 936h0M835 981h0M1122 863h0M1143 886h0M960 1015h0M1414 1143h0M1349 981h0M1176 1091h0M1154 1179h0M919 1015h0M1055 934h0M1327 1135h0M981 837h0M1068 846h0M929 928h0M1546 891h0M1053 994h0M1574 1058h0M881 1039h0M1623 1047h0M1086 1001h0M919 957h0M1116 1114h0M1488 1044h0M1111 1070h0M1390 1079h0M1436 992h0M1060 803h0M775 885h0M689 973h0M1400 1181h0M1414 1113h0M988 863h0M943 948h0M1061 1136h0M1345 894h0M1098 936h0M882 992h0M1271 1033h0M1726 933h0M834 871h0M1402 1149h0M1220 896h0M1201 1157h0M1033 1172h0M1482 1113h0M596 949h0M1190 1226h0M1497 933h0M1431 1158h0M1144 1213h0M1309 1018h0M1142 908h0M1260 1194h0M1165 924h0M978 947h0M1246 1214h0M947 1114h0M1395 1024h0M1238 900h0M599 940h0M952 1057h0M640 958h0M847 930h0M1732 853h0M880 1014h0M1158 1024h0M1397 1178h0M1537 1078h0M926 1046h0M1414 1107h0M1221 1037h0M731 1008h0M986 843h0M1122 919h0M1219 1212h0M662 946h0M1141 798h0M1309 1057h0M893 903h0M1205 894h0M1569 1043h0M766 951h0M1114 898h0M1431 1116h0M1127 887h0M991 879h0M1558 1030h0M1463 882h0M1237 993h0M1715 992h0M845 874h0M1109 827h0M1660 952h0M1443 1054h0M1646 996h0M1207 1126h0M1489 975h0M1663 937h0M1612 1002h0M1197 978h0M1386 986h0M1475 966h0M1251 911h0M1127 991h0M1459 1128h0M1496 947h0M1461 1090h0M670 1006h0M1401 1059h0M1036 1020h0M1510 986h0M1141 1111h0M1694 1022h0M1631 897h0M1360 992h0M1484 1098h0M1695 955h0M1012 848h0M863 1086h0M889 861h0M865 979h0M1615 858h0M754 979h0M1301 1060h0M1184 1013h0M1401 1135h0M1140 1045h0M954 848h0M1666 968h0M1638 849h0M1032 998h0M1327 972h0M662 988h0M1175 1055h0M1132 932h0M809 1013h0M1270 942h0M1114 1127h0M1597 1053h0M1661 946h0M1383 1056h0M1101 919h0M984 1023h0M1168 1107h0M803 1018h0M860 891h0M846 866h0M1577 1090h0M1692 1016h0M918 1020h0M1266 1137h0M1049 1151h0M984 1048h0M1499 961h0M816 908h0M1535 1017h0M1153 1017h0M889 895h0M1459 888h0M1242 1130h0M959 1045h0M1076 1039h0M1076 1129h0M1182 1200h0M1034 1177h0M1036 855h0M1553 1028h0M805 959h0M1656 862h0M833 979h0M1435 944h0M1276 1103h0M1070 1183h0M1613 1029h0M1449 1190h0M1074 990h0M755 893h0M1227 1021h0M1563 1002h0M1233 1165h0M652 918h0M1433 1142h0M1126 1209h0M1373 923h0M1129 864h0M1313 1103h0M1464 1075h0M1169 986h0M1647 917h0M1611 927h0M1503 857h0M1314 1005h0M1118 792h0M1082 1215h0M1562 1068h0M1365 1104h0M1675 887h0M1062 1144h0M1226 1038h0M1517 1077h0M685 979h0M1085 1149h0M1340 1024h0M1413 892h0M799 933h0M1295 890h0M1360 1194h0M918 1019h0M668 1006h0M1496 893h0M1271 927h0M1360 1082h0M1278 986h0M1385 1220h0M1245 942h0M914 965h0M1549 1073h0M952 1103h0M1681 840h0M1571 979h0M1352 1181h0M1281 1125h0M1630 980h0M1477 1080h0M1277 948h0M649 1132h0M504 1028h0M592 1113h0M586 1175h0M696 1058h0M660 1059h0M993 1212h0M518 1059h0M499 1227h0M546 1076h0M503 1169h0M856 1194h0M1019 1201h0M491 1224h0M603 1103h0M795 1178h0M1158 444h0M1684 522h0M1393 323h0M1161 450h0M1387 535h0M1688 480h0M1208 461h0M1248 398h0M1399 289h0M1373 440h0M1548 423h0M1551 425h0M1627 318h0M1440 527h0M1450 351h0M1702 509h0M1476 539h0M1532 428h0M1506 523h0M1557 509h0M1394 363h0M1192 394h0M1270 422h0M1325 434h0M1559 345h0M1395 331h0M1271 534h0M1589 532h0M1390 522h0M1372 410h0M1596 316h0M1590 314h0M1510 300h0M1566 540h0M1478 386h0M1129 347h0M1158 383h0M1510 394h0M1583 320h0M1569 416h0M1235 512h0M1533 463h0M1647 255h0M1414 515h0M1454 542h0M1525 257h0M1228 357h0M1602 317h0M1233 343h0M1456 404h0M1272 466h0M1677 422h0M1675 281h0M1529 379h0M1331 525h0M1433 477h0M1200 380h0M1229 536h0M1660 264h0M1286 350h0M1405 285h0M1476 527h0M1139 416h0M1574 487h0M1421 471h0M1451 455h0M1649 430h0M1338 418h0M1313 345h0M1505 465h0M1183 330h0M1126 308h0M1427 541h0M1191 680h0M1162 607h0M1410 847h0M1347 852h0M1506 721h0M1388 772h0M1708 557h0M1700 643h0M1624 669h0M1350 821h0M1252 815h0M1394 799h0M1600 682h0M1357 610h0M1711 704h0M1392 706h0M1207 854h0M1310 748h0M1455 828h0M1643 675h0M1280 710h0M1146 768h0M1650 649h0M1195 822h0M1159 721h0M1251 569h0M1512 640h0M1244 749h0M1656 673h0M1481 765h0M1199 846h0M1458 612h0M1277 806h0M1226 637h0M1190 792h0M1694 692h0M1462 826h0M1518 842h0M1328 675h0M1388 847h0M1285 603h0M1714 814h0M1206 712h0M1686 639h0M1623 797h0M1516 820h0M1357 664h0M1579 802h0M1600 646h0M1701 654h0M1678 659h0M1719 784h0M1686 581h0M1279 818h0M1512 844h0M1492 599h0M1247 774h0M1311 661h0M1717 625h0M1225 668h0M1451 562h0M1577 820h0M1243 804h0M1198 594h0M1379 604h0M1626 728h0M1721 658h0M1728 764h0M1457 748h0M1493 773h0M1645 702h0M1562 655h0M1203 735h0M1716 702h0M1529 661h0M1252 610h0M1348 808h0M1363 644h0M1474 697h0M1532 842h0M1431 649h0M1231 827h0M1300 731h0M1148 654h0M1601 837h0M1647 797h0M1542 804h0M1658 563h0M1365 616h0M1228 629h0M1275 609h0M1628 607h0M1159 775h0M1716 635h0M1580 814h0M1732 799h0M1191 572h0M1255 600h0M1491 574h0M1306 719h0M1417 709h0M1579 726h0M1170 676h0M1257 619h0M1610 672h0M1417 615h0M1376 800h0M1311 802h0M1435 839h0M1547 655h0M1640 630h0M1516 603h0M1213 851h0M1279 771h0M1688 665h0M1229 628h0M1180 782h0M1336 740h0M1315 594h0M1263 818h0M1466 677h0M1230 687h0M1339 802h0M1436 580h0M1506 683h0M1418 598h0M1450 720h0M1293 756h0M1430 755h0M1663 721h0M1410 595h0M1594 638h0M1493 586h0M1432 685h0M1670 579h0M1600 600h0M1716 746h0M1545 568h0M1609 812h0M1428 574h0M1532 573h0M1377 712h0M1694 566h0M1172 723h0M1176 795h0M1368 740h0M1643 606h0M1639 683h0M1521 586h0M1380 755h0M1276 792h0M1601 751h0M1181 628h0M1175 758h0M1484 694h0M1345 667h0M1344 707h0M1011 697h0M1005 601h0M1065 710h0M1049 629h0M1044 780h0M1079 751h0M1031 801h0M1012 718h0M1000 737h0M931 458h0M953 539h0M961 442h0M930 592h0M930 471h0M1035 608h0M953 604h0M993 522h0M1030 743h0M1048 718h0M1038 677h0M957 556h0M991 661h0M929 565h0M972 704h0M1010 620h0M962 407h0M899 454h0M992 469h0M1059 722h0M966 659h0M955 511h0M1023 777h0M1049 746h0M913 484h0M1012 561h0M1035 774h0M989 458h0M1002 721h0M1012 808h0M1058 717h0M894 324h0M929 287h0M852 285h0M848 249h0M882 322h0M908 271h0M883 390h0M939 406h0M894 409h0M873 346h0M986 410h0M878 322h0M922 423h0M843 175h0M827 185h0M867 304h0M902 409h0M945 286h0M2221 1080h0M2062 742h0M2132 717h0M2129 714h0M1910 548h0M1906 552h0M1902 547h0M1969 529h0M2216 549h0M1723 1157h0M1894 1132h0M1950 1167h0" stroke="#5a5a6a" stroke-width="2" stroke-linecap="square"/><path d="M1649 978h0M648 952h0M1130 943h0M1293 1089h0M1630 1009h0M733 1029h0M1189 1112h0M1254 1154h0M1373 1192h0M1032 835h0M1497 863h0M1229 1155h0M848 865h0M1373 875h0M1323 1124h0M1136 978h0M1525 906h0M869 949h0M1537 1080h0M750 1018h0M1263 947h0M911 879h0M830 946h0M1376 916h0M1619 1010h0M1070 987h0M1458 997h0M1044 1105h0M1193 947h0M1214 871h0M1257 1050h0M1068 967h0M1138 922h0M1661 939h0M1520 875h0M1202 941h0M920 887h0M1084 852h0M1349 1193h0M1067 1043h0M1295 1077h0M1125 997h0M1525 1068h0M739 918h0M1442 1089h0M1568 859h0M856 1079h0M1646 1027h0M717 1025h0M1156 930h0M1154 934h0M1266 1170h0M1589 878h0M1071 1169h0M1285 971h0M1426 1067h0M1448 1210h0M947 898h0M1081 1006h0M827 882h0M1214 993h0M1386 856h0M1082 832h0M927 1049h0M1398 1177h0M1725 993h0M1638 855h0M1261 1230h0M636 1004h0M1060 833h0M1255 917h0M1220 905h0M1376 972h0M1568 898h0M1123 1069h0M1294 1172h0M1292 1078h0M834 987h0M793 961h0M1454 1162h0M1621 1034h0M1396 959h0M981 843h0M1301 978h0M1326 903h0M987 937h0M1355 930h0M1052 944h0M1518 895h0M1142 947h0M1469 870h0M1115 1021h0M1290 883h0M1138 1023h0M1304 1055h0M1038 1099h0M1073 962h0M1265 1018h0M1294 1143h0M1332 1118h0M1400 1186h0M1208 1056h0M824 992h0M1416 887h0M1275 951h0M1409 1164h0M1148 913h0M1342 1201h0M1192 984h0M1385 1060h0M1441 1199h0M868 963h0M986 1039h0M1342 1132h0M1672 952h0M1190 949h0M1605 845h0M1082 879h0M1176 1042h0M1147 1194h0M1147 1187h0M1307 936h0M737 1026h0M1338 907h0M1067 859h0M1045 808h0M882 982h0M928 1070h0M1337 1048h0M1140 839h0M769 931h0M1615 997h0M792 982h0M1694 930h0M1019 1007h0M1380 954h0M1672 1000h0M1415 1219h0M811 952h0M1465 908h0M1322 1160h0M1337 1182h0M1161 1013h0M1542 880h0M1121 1042h0M1140 896h0M1690 990h0M1300 863h0M1344 1153h0M1592 950h0M1442 871h0M1058 899h0M1426 885h0M1449 1056h0M1373 918h0M948 994h0M1042 978h0M1287 890h0M744 962h0M1027 916h0M1369 967h0M712 902h0M1444 928h0M1378 982h0M774 896h0M1115 1002h0M1235 1209h0M982 947h0M1426 890h0M1329 1175h0M1010 1058h0M1045 845h0M1216 1047h0M1295 1109h0M1134 827h0M718 929h0M1478 852h0M1348 1050h0M1112 1170h0M869 882h0M966 860h0M1419 1020h0M1712 998h0M1426 1051h0M1615 900h0M1417 1148h0M977 870h0M1637 968h0M944 1053h0M819 1041h0M1180 922h0M792 1045h0M1238 1124h0M1290 997h0M1251 1076h0M1110 890h0M1652 958h0M1361 1087h0M1565 980h0M1004 1048h0M1343 1166h0M1559 1009h0M1213 1021h0M1051 1066h0M634 950h0M1223 873h0M1422 862h0M1734 866h0M906 951h0M1172 951h0M1571 1086h0M1058 1029h0M1417 1049h0M1224 971h0M1047 960h0M946 989h0M1678 1037h0M1600 1046h0M1612 1037h0M1609 1052h0M1379 1146h0M890 1096h0M1479 1027h0M1175 1088h0M1178 1177h0M1410 1072h0M819 1046h0M1442 1153h0M1234 929h0M1306 1076h0M1626 887h0M1479 1153h0M1060 1041h0M681 950h0M783 1027h0M1220 880h0M1028 1048h0M962 908h0M1118 1140h0M1236 1058h0M1687 942h0M1529 870h0M1596 953h0M1145 1074h0M1085 813h0M1405 904h0M967 963h0M1320 989h0M843 957h0M1399 1107h0M1064 1042h0M1261 941h0M1505 1057h0M866 926h0M1572 1050h0M1229 1053h0M1229 1223h0M999 864h0M1073 1162h0M1050 1180h0M1088 1015h0M747 954h0M1048 1169h0M1193 997h0M1167 1097h0M1075 923h0M956 1100h0M1533 939h0M1654 999h0M1242 1020h0M1577 1020h0M1163 896h0M1005 887h0M1468 1127h0M1059 863h0M1431 967h0M1237 925h0M1642 923h0M1548 908h0M857 876h0M1030 1027h0M1347 1063h0M1104 934h0M1549 951h0M686 979h0M920 1036h0M1706 868h0M665 926h0M1628 889h0M1374 869h0M992 852h0M958 1115h0M1130 882h0M1271 976h0M1319 867h0M589 966h0M837 866h0M746 984h0M1007 941h0M963 1057h0M1481 1061h0M1471 1048h0M1026 1062h0M1664 874h0M853 1003h0M1028 912h0M999 857h0M1010 866h0M1637 1031h0M1090 895h0M818 1035h0M1469 1132h0M1055 1037h0M1648 1011h0M1018 878h0M734 928h0M1108 937h0M1355 1086h0M1263 901h0M1418 989h0M1129 932h0M1354 1094h0M1082 1027h0M1267 996h0M1356 981h0M769 1013h0M1598 993h0M1450 941h0M1109 1060h0M934 932h0M1228 876h0M684 972h0M1136 824h0M998 875h0M1618 961h0M1486 1040h0M946 913h0M1326 1092h0M1385 876h0M890 1047h0M987 1016h0M1301 1139h0M1161 1100h0M1104 1043h0M1445 1229h0M1640 855h0M731 970h0M1484 1010h0M1200 1053h0M1701 1003h0M1330 1213h0M1592 999h0M1684 949h0M1295 1042h0M1363 976h0M1378 858h0M1121 896h0M1308 915h0M1380 897h0M1327 892h0M1093 1112h0M906 864h0M1539 1035h0M1081 1086h0M880 1055h0M1272 1100h0M1142 908h0M1200 998h0M1345 1034h0M1316 1094h0M1359 1071h0M775 967h0M1221 950h0M1132 842h0M1484 1102h0M1424 1031h0M1600 890h0M1268 1187h0M1573 931h0M731 907h0M1014 845h0M791 950h0M1414 941h0M807 916h0M1170 1148h0M1357 887h0M690 950h0M984 1093h0M1527 1026h0M1229 1149h0M634 985h0M804 961h0M1405 947h0M1007 1093h0M1597 983h0M1326 1069h0M1006 963h0M958 913h0M1376 1155h0M1020 928h0M1077 1093h0M1522 966h0M1442 1153h0M1342 1163h0M937 1088h0M1415 916h0M773 966h0M1424 858h0M1453 856h0M1504 1065h0M1228 1193h0M1481 1115h0M863 996h0M805 902h0M1440 958h0M1446 955h0M1045 1137h0M1602 863h0M1033 992h0M1298 1124h0M1329 1095h0M1387 1199h0M1603 1059h0M1660 985h0M1636 895h0M1297 886h0M852 979h0M1413 1213h0M995 877h0M679 977h0M1023 1077h0M960 1065h0M1364 987h0M1651 922h0M1311 1203h0M1470 879h0M861 874h0M1607 846h0M595 956h0M955 858h0M1082 1125h0M1017 820h0M1227 1134h0M1061 1100h0M642 972h0M954 1076h0M1474 1204h0M790 953h0M1212 1206h0M1270 972h0M1287 1159h0M1462 998h0M618 952h0M1163 1038h0M1103 1001h0M1033 817h0M1600 971h0M1235 1110h0M861 1044h0M822 966h0M952 1075h0M1503 1036h0M1219 934h0M1002 1022h0M1071 878h0M861 1054h0M1287 1129h0M896 1049h0M734 913h0M1033 900h0M1538 1059h0M957 993h0M1102 1138h0M1524 959h0M1620 888h0M1349 1150h0M988 878h0M1245 1101h0M1077 1095h0M853 1204h0M547 1061h0M774 1065h0M950 1202h0M720 1208h0M518 1166h0M745 1159h0M569 1104h0M577 1111h0M642 1110h0M726 1136h0M583 1084h0M742 1209h0M795 1216h0M971 1189h0M723 1129h0M1580 292h0M1182 414h0M1234 447h0M1632 383h0M1404 334h0M1405 346h0M1439 329h0M1382 323h0M1652 356h0M1352 444h0M1159 413h0M1281 301h0M1404 290h0M1341 332h0M1619 326h0M1368 479h0M1175 505h0M1698 373h0M1224 282h0M1498 415h0M1360 535h0M1424 261h0M1319 290h0M1140 339h0M1173 346h0M1252 322h0M1250 337h0M1250 522h0M1353 335h0M1605 440h0M1565 548h0M1579 262h0M1308 498h0M1333 409h0M1624 495h0M1444 264h0M1491 363h0M1487 387h0M1161 289h0M1583 547h0M1382 371h0M1525 287h0M1672 330h0M1599 380h0M1331 298h0M1232 452h0M1448 356h0M1197 287h0M1694 410h0M1288 433h0M1404 355h0M1314 555h0M1248 300h0M1556 417h0M1275 376h0M1641 519h0M1306 545h0M1590 473h0M1311 560h0M1703 541h0M1270 510h0M1195 347h0M1226 457h0M1183 375h0M1402 493h0M1443 284h0M1559 478h0M1665 274h0M1241 294h0M1589 409h0M1241 492h0M1601 514h0M1569 331h0M1635 532h0M1328 354h0M1723 561h0M1685 717h0M1329 729h0M1445 569h0M1342 746h0M1220 575h0M1193 741h0M1421 691h0M1357 620h0M1558 707h0M1589 837h0M1174 709h0M1240 652h0M1392 837h0M1285 572h0M1388 690h0M1710 684h0M1430 675h0M1375 564h0M1589 780h0M1395 606h0M1229 852h0M1627 601h0M1474 675h0M1449 620h0M1718 727h0M1505 574h0M1491 580h0M1603 750h0M1439 836h0M1695 747h0M1437 708h0M1475 715h0M1653 820h0M1222 806h0M1648 564h0M1397 560h0M1256 721h0M1572 696h0M1617 758h0M1150 741h0M1301 777h0M1383 781h0M1709 552h0M1429 575h0M1659 632h0M1248 746h0M1614 682h0M1190 655h0M1223 692h0M1568 779h0M1711 832h0M1489 733h0M1211 587h0M1335 852h0M1458 676h0M1627 689h0M1209 571h0M1569 616h0M1140 690h0M1261 594h0M1635 652h0M1577 819h0M1455 723h0M1360 800h0M1529 806h0M1477 563h0M1660 668h0M1430 567h0M1359 664h0M1361 578h0M1266 738h0M1372 752h0M1179 654h0M1706 627h0M1657 644h0M1469 729h0M1332 642h0M1282 741h0M1368 619h0M1183 637h0M1458 629h0M1643 749h0M1543 674h0M1225 790h0M1404 576h0M1603 579h0M1419 825h0M1407 748h0M1628 573h0M1582 705h0M1495 651h0M1175 579h0M1466 819h0M1439 812h0M1593 821h0M1392 592h0M1189 763h0M1278 710h0M1469 660h0M1645 758h0M1315 798h0M1649 605h0M1351 762h0M1583 764h0M1493 678h0M1683 610h0M1221 691h0M1219 830h0M1149 597h0M1364 726h0M1548 758h0M1673 782h0M1497 718h0M1440 807h0M1670 648h0M1600 613h0M1386 845h0M1161 668h0M1592 760h0M1480 785h0M1295 667h0M1617 713h0M1484 583h0M1652 551h0M1201 797h0M1235 593h0M1654 585h0M1488 692h0M1206 681h0M1261 765h0M1674 646h0M1642 606h0M1149 590h0M1203 803h0M1730 675h0M1318 756h0M1366 597h0M1449 566h0M1626 733h0M1677 776h0M1683 620h0M1446 746h0M1324 623h0M1555 663h0M1656 726h0M1334 744h0M1450 702h0M1739 828h0M1161 683h0M1292 817h0M1180 860h0M1610 588h0M1611 828h0M1152 591h0M1641 716h0M1426 578h0M1174 689h0M1732 707h0M1620 813h0M1557 673h0M1621 548h0M1204 667h0M1274 780h0M1626 830h0M1733 762h0M1330 570h0M1272 713h0M1525 718h0M1478 656h0M1298 755h0M1481 798h0M1298 750h0M1624 688h0M1619 690h0M1248 605h0M1175 694h0M1397 829h0M1567 591h0M1305 697h0M1568 771h0M1577 792h0M1598 783h0M1617 828h0M1396 772h0M1299 658h0M1483 609h0M1487 669h0M1055 740h0M996 710h0M961 556h0M905 467h0M1045 691h0M952 629h0M965 613h0M1024 610h0M1041 717h0M970 629h0M933 450h0M1039 635h0M1011 531h0M982 485h0M947 471h0M962 490h0M974 623h0M976 633h0M973 684h0M987 460h0M970 575h0M970 627h0M984 728h0M1029 649h0M1037 711h0M899 414h0M984 608h0M976 590h0M906 507h0M1004 567h0M953 633h0M963 499h0M911 451h0M1002 636h0M1034 669h0M971 553h0M1034 671h0M1004 510h0M965 589h0M976 543h0M834 237h0M845 219h0M942 235h0M904 256h0M880 353h0M910 394h0M894 368h0M895 253h0M864 271h0M964 411h0M956 384h0M968 322h0M959 284h0M928 272h0M929 413h0M863 232h0M908 368h0M906 320h0M828 197h0M885 298h0M936 290h0M1871 685h0M2166 744h0M2238 765h0M1891 1096h0M2196 435h0M1782 868h0M1993 779h0M2064 737h0M2312 691h0M2084 539h0M2215 546h0M2287 430h0M1893 1128h0" stroke="#4a4a5a" stroke-width="2" stroke-linecap="square"/><path d="M1066 1200h0M1108 865h0M963 914h0M1118 812h0M1051 1000h0M1606 938h0M896 873h0M1649 880h0M1280 1208h0M1312 1039h0M1566 917h0M1540 872h0M989 917h0M1686 871h0M1080 909h0M1330 1230h0M792 904h0M897 1043h0M1708 952h0M969 951h0M1043 947h0M1717 916h0M1581 1021h0M990 932h0M929 954h0M1070 981h0M750 890h0M931 850h0M1688 987h0M1597 1011h0M843 869h0M1442 1126h0M797 1057h0M1441 967h0M1570 1077h0M1079 1170h0M1097 1094h0M691 1015h0M994 879h0M661 924h0M1108 1078h0M1047 1094h0M913 1027h0M1285 1151h0M1225 876h0M1328 1206h0M1082 1206h0M1138 984h0M1018 1080h0M739 923h0M1544 919h0M944 910h0M1550 909h0M1681 877h0M1532 1052h0M1686 875h0M914 1035h0M647 974h0M1729 843h0M1461 928h0M1212 1062h0M1234 1072h0M1373 864h0M1497 864h0M983 851h0M941 1089h0M1393 1186h0M954 959h0M1478 1096h0M1305 949h0M1070 1179h0M1408 909h0M1586 886h0M1530 1015h0M1416 1214h0M864 973h0M1474 1048h0M1339 1087h0M1423 1182h0M1506 1084h0M1023 819h0M1089 857h0M1417 1018h0M807 974h0M1011 1017h0M1645 1038h0M1290 925h0M1472 937h0M1373 1126h0M1474 888h0M1722 961h0M1463 1060h0M1262 1133h0M1285 1155h0M1184 1067h0M1257 1197h0M1140 1204h0M1140 1044h0M1094 918h0M1128 909h0M663 980h0M1629 919h0M1437 866h0M906 1092h0M592 967h0M1232 1086h0M1352 1057h0M1269 950h0M995 1081h0M1230 1104h0M1089 825h0M1342 1105h0M869 966h0M1362 877h0M1070 1071h0M640 940h0M791 1007h0M981 826h0M1419 882h0M989 839h0M1483 1086h0M896 1029h0M1491 1032h0M810 1019h0M825 972h0M1124 932h0M1096 964h0M975 1133h0M1520 937h0M1008 1160h0M1557 952h0M735 897h0M1001 1097h0M1431 1001h0M1077 1045h0M968 1010h0M1242 1001h0M1228 1172h0M1520 1053h0M1010 1109h0M1003 948h0M1369 1111h0M1361 889h0M1332 1061h0M1299 1193h0M1021 997h0M1591 965h0M1464 879h0M764 962h0M1476 997h0M996 960h0M1427 978h0M1009 1117h0M658 956h0M1035 964h0M1267 1034h0M869 884h0M994 1110h0M551 950h0M1483 953h0M1665 837h0M1164 909h0M1222 1203h0M1317 1169h0M1353 1157h0M1454 1115h0M753 1048h0M1270 967h0M1098 1149h0M709 943h0M1052 923h0M1516 966h0M1070 1133h0M840 1071h0M1288 1184h0M1234 1222h0M1468 1046h0M1151 1179h0M1251 984h0M1367 940h0M812 956h0M1382 1146h0M1034 1037h0M1421 923h0M1611 1029h0M1501 1052h0M999 1152h0M809 910h0M1104 888h0M957 1083h0M1456 1022h0M900 997h0M1171 1101h0M1141 840h0M1612 934h0M1152 944h0M1672 843h0M633 941h0M1328 1139h0M1409 1086h0M1176 1095h0M1404 1128h0M1140 840h0M1050 805h0M1417 1127h0M1118 845h0M1119 1039h0M1231 946h0M1154 1140h0M1156 1179h0M1538 1074h0M953 937h0M1293 1177h0M1624 1055h0M864 1024h0M1113 846h0M1352 1215h0M1432 1195h0M1472 939h0M1168 930h0M1414 1028h0M1287 1145h0M968 950h0M1044 1170h0M1357 1002h0M1174 992h0M1475 932h0M1428 862h0M1595 970h0M1734 945h0M1637 950h0M1040 890h0M839 987h0M911 896h0M1703 1030h0M1255 1145h0M1222 1162h0M728 928h0M1482 940h0M1357 925h0M1557 1008h0M1085 822h0M1490 958h0M778 1011h0M1707 994h0M914 970h0M628 968h0M1295 1225h0M935 923h0M1103 850h0M1659 857h0M1602 890h0M1481 918h0M1223 1156h0M990 1121h0M980 1127h0M1553 894h0M1022 962h0M886 992h0M1108 1216h0M1107 1026h0M1448 1066h0M1200 1093h0M1365 878h0M1455 882h0M997 1143h0M645 956h0M1434 982h0M857 942h0M1457 877h0M657 962h0M890 1060h0M1046 1119h0M1582 872h0M1477 864h0M1341 1025h0M1244 1086h0M1438 1221h0M1487 1039h0M1414 1081h0M1217 1106h0M1397 1193h0M1301 1094h0M926 1021h0M1160 1073h0M1679 876h0M1162 986h0M1016 1136h0M1490 1035h0M1478 1132h0M1154 1036h0M940 1047h0M1479 887h0M956 966h0M805 925h0M1273 869h0M1447 1122h0M1592 923h0M1144 987h0M1339 1035h0M977 860h0M1016 895h0M983 855h0M1255 977h0M996 967h0M1720 982h0M923 920h0M675 1012h0M884 926h0M1220 1039h0M1118 950h0M1245 964h0M1604 874h0M931 874h0M1133 1216h0M1699 866h0M1291 995h0M1275 980h0M1487 1105h0M1449 1072h0M906 943h0M905 1061h0M1575 954h0M749 1033h0M964 1077h0M1484 908h0M1436 935h0M1059 920h0M1261 1024h0M1492 858h0M1394 939h0M1248 916h0M1021 836h0M1052 1121h0M1448 1002h0M1435 971h0M1410 1170h0M941 943h0M1424 1026h0M1230 926h0M1097 883h0M1017 978h0M1395 866h0M1097 808h0M1229 1183h0M1331 1161h0M1150 1010h0M1474 1131h0M996 1071h0M1297 976h0M963 1109h0M1139 1080h0M848 867h0M1691 915h0M1403 864h0M1326 1188h0M1671 935h0M1468 965h0M740 963h0M781 1054h0M1399 956h0M1533 881h0M608 985h0M637 1003h0M1514 940h0M1318 1166h0M1239 1035h0M1224 1074h0M924 1006h0M941 929h0M1390 981h0M1502 1091h0M1342 1227h0M705 973h0M1618 946h0M1301 984h0M1626 941h0M1099 1109h0M808 880h0M995 1042h0M840 1014h0M1215 1218h0M1077 1147h0M1434 960h0M1002 997h0M643 942h0M1543 869h0M1507 1053h0M796 1034h0M1168 1085h0M721 920h0M845 868h0M1690 1038h0M1487 879h0M1387 1033h0M799 982h0M854 1048h0M1032 1012h0M1188 1162h0M1148 1009h0M1425 877h0M633 969h0M781 1003h0M1352 1106h0M1360 978h0M1365 904h0M1105 860h0M1174 989h0M1559 989h0M1169 1012h0M1101 1001h0M1606 1033h0M1374 944h0M1202 877h0M1428 905h0M1579 996h0M1259 880h0M1132 929h0M1111 1118h0M1469 1216h0M737 1006h0M1189 1025h0M988 934h0M1496 879h0M1583 1064h0M1542 932h0M1038 1043h0M922 1092h0M893 944h0M1326 863h0M682 974h0M1139 857h0M755 932h0M1246 1043h0M1256 1109h0M1688 983h0M1324 1006h0M1650 1001h0M1336 964h0M1709 1029h0M1403 989h0M1207 1174h0M1557 899h0M1350 862h0M1079 1015h0M1152 998h0M1217 1187h0M1005 963h0M1322 1094h0M1254 1075h0M1539 1032h0M1472 906h0M1175 872h0M1723 934h0M956 1017h0M1439 1085h0M1706 995h0M1606 1004h0M1391 1230h0M1704 995h0M920 946h0M1138 1081h0M1705 918h0M1606 1016h0M854 1053h0M1593 876h0M1634 1070h0M1324 930h0M1154 1142h0M1403 1224h0M579 960h0M1454 1181h0M1635 850h0M1050 1043h0M771 1102h0M821 1093h0M629 1026h0M805 1222h0M669 1162h0M859 1200h0M742 1227h0M616 1203h0M773 1086h0M677 1100h0M617 1154h0M795 1197h0M641 1012h0M1039 1221h0M664 1031h0M1667 412h0M1474 419h0M1230 286h0M1442 461h0M1193 571h0M1427 538h0M1175 447h0M1298 273h0M1309 479h0M1525 432h0M1439 389h0M1160 436h0M1526 382h0M1391 544h0M1504 546h0M1251 315h0M1645 478h0M1387 529h0M1702 349h0M1588 280h0M1231 541h0M1434 341h0M1137 348h0M1596 387h0M1633 369h0M1355 528h0M1207 519h0M1220 409h0M1606 295h0M1485 398h0M1141 473h0M1220 501h0M1190 444h0M1230 389h0M1343 397h0M1590 479h0M1487 439h0M1303 311h0M1379 320h0M1154 559h0M1471 347h0M1239 534h0M1550 422h0M1341 548h0M1461 419h0M1215 543h0M1213 379h0M1705 301h0M1685 406h0M1366 297h0M1498 510h0M1376 370h0M1343 330h0M1713 413h0M1205 322h0M1513 352h0M1568 332h0M1283 412h0M1467 307h0M1575 331h0M1699 493h0M1476 426h0M1626 481h0M1184 418h0M1682 420h0M1257 418h0M1594 537h0M1346 487h0M1584 267h0M1271 273h0M1507 312h0M1553 381h0M1398 277h0M1702 354h0M1471 298h0M1459 435h0M1125 306h0M1296 514h0M1313 419h0M1211 374h0M1375 352h0M1343 375h0M1624 285h0M1551 370h0M1171 483h0M1374 391h0M1530 258h0M1157 384h0M1222 566h0M1698 460h0M1418 532h0M1359 348h0M1583 480h0M1257 329h0M1396 548h0M1728 656h0M1219 667h0M1717 761h0M1475 692h0M1354 767h0M1506 733h0M1562 634h0M1220 627h0M1729 780h0M1507 689h0M1315 838h0M1473 673h0M1220 580h0M1458 777h0M1604 818h0M1425 765h0M1586 608h0M1589 743h0M1256 812h0M1208 671h0M1341 571h0M1503 706h0M1548 726h0M1636 618h0M1427 656h0M1406 700h0M1322 675h0M1721 631h0M1396 741h0M1693 650h0M1530 619h0M1219 651h0M1518 596h0M1307 656h0M1563 730h0M1440 788h0M1632 658h0M1586 803h0M1550 616h0M1484 721h0M1587 773h0M1441 703h0M1415 747h0M1209 613h0M1343 758h0M1187 658h0M1605 646h0M1202 580h0M1203 843h0M1553 590h0M1309 629h0M1660 640h0M1372 676h0M1256 607h0M1351 830h0M1353 577h0M1293 678h0M1290 779h0M1368 584h0M1338 768h0M1692 607h0M1570 722h0M1277 800h0M1553 664h0M1586 663h0M1723 594h0M1597 563h0M1441 735h0M1603 767h0M1419 817h0M1494 588h0M1609 753h0M1402 601h0M1471 809h0M1699 545h0M1267 741h0M1483 717h0M1148 629h0M1578 587h0M1682 667h0M1385 649h0M1205 737h0M1692 544h0M1648 640h0M1440 840h0M1332 767h0M1334 775h0M1166 645h0M1395 677h0M1193 585h0M1311 772h0M1443 653h0M1427 702h0M1726 787h0M1656 695h0M1306 660h0M1191 706h0M1662 666h0M1446 840h0M1181 746h0M1536 816h0M1219 596h0M1278 724h0M1573 841h0M1402 618h0M1518 580h0M1550 757h0M1644 598h0M1282 805h0M1580 718h0M1368 688h0M1585 731h0M1148 766h0M1403 806h0M1165 586h0M1464 588h0M1350 766h0M1164 631h0M1624 722h0M1654 613h0M1447 586h0M1449 838h0M1153 825h0M1385 761h0M1387 849h0M1593 622h0M1226 820h0M1276 721h0M1170 752h0M1242 651h0M1162 799h0M1498 601h0M1223 860h0M1224 609h0M1301 656h0M1220 695h0M1707 720h0M1365 746h0M1230 851h0M1606 823h0M1260 787h0M1533 834h0M1341 618h0M1392 667h0M1641 730h0M1367 632h0M1150 860h0M1367 823h0M1561 718h0M1695 664h0M1248 742h0M1185 859h0M1582 730h0M1431 724h0M1538 660h0M1179 594h0M1359 600h0M1346 803h0M1416 796h0M1451 744h0M1592 565h0M1526 590h0M1455 615h0M1328 643h0M1445 564h0M1454 726h0M1512 620h0M1491 578h0M1518 807h0M1180 662h0M1287 724h0M1516 571h0M1375 796h0M1407 568h0M1449 847h0M1418 569h0M1714 665h0M1363 570h0M1606 597h0M1539 817h0M1497 686h0M1178 661h0M1626 834h0M1488 845h0M1299 838h0M1635 586h0M1487 641h0M1598 769h0M1222 772h0M1185 758h0M1561 788h0M1240 673h0M1607 647h0M1613 662h0M956 545h0M961 624h0M1039 709h0M962 602h0M962 455h0M932 451h0M1034 683h0M973 669h0M1027 803h0M1002 808h0M931 550h0M981 721h0M946 584h0M1059 796h0M1012 748h0M1005 731h0M942 536h0M983 500h0M975 473h0M933 500h0M1002 671h0M954 456h0M945 616h0M1009 515h0M918 457h0M1041 742h0M1041 747h0M1024 708h0M1040 614h0M1002 640h0M1005 682h0M908 416h0M977 716h0M1015 715h0M966 655h0M1028 633h0M963 616h0M973 610h0M1012 566h0M1042 765h0M891 414h0M981 736h0M1030 691h0M877 254h0M943 415h0M948 395h0M905 376h0M952 252h0M929 364h0M820 176h0M912 334h0M876 356h0M988 436h0M927 408h0M861 314h0M956 400h0M834 204h0M900 392h0M901 254h0M918 337h0M975 430h0M852 209h0M2057 567h0M1804 721h0M2011 913h0M1834 510h0M2313 709h0M2039 445h0M2273 1096h0M1848 830h0M1853 834h0M1932 800h0M1995 768h0M2131 713h0M2191 709h0M2183 704h0M2256 692h0M2316 694h0M1959 531h0M2089 540h0M2216 555h0M2218 552h0M1724 1167h0M1759 1130h0" stroke="#5a4a4a" stroke-width="2" stroke-linecap="square"/><path d="M1263 933h0M1392 1038h0M1068 883h0M850 995h0M740 1000h0M1071 947h0M1046 825h0M1398 1027h0M1628 997h0M1162 1123h0M859 958h0M1595 923h0M631 925h0M1223 1180h0M1529 1011h0M978 840h0M1086 1016h0M1210 1040h0M926 1026h0M1379 949h0M943 1080h0M1294 940h0M1464 1000h0M834 1043h0M1328 1121h0M714 927h0M1057 1196h0M1224 1082h0M1560 883h0M909 959h0M872 908h0M961 840h0M1038 1000h0M940 912h0M1385 1145h0M1299 1080h0M1717 835h0M872 966h0M1006 927h0M1471 1124h0M1534 855h0M716 1012h0M1311 874h0M1265 1119h0M1292 986h0M1348 1186h0M1409 1141h0M922 874h0M1100 903h0M1027 906h0M1149 1079h0M1137 949h0M1732 847h0M797 938h0M1676 853h0M576 954h0M1473 940h0M1520 1102h0M1492 1030h0M1461 990h0M1539 913h0M1419 1022h0M1593 918h0M1153 885h0M856 940h0M1549 1021h0M1592 955h0M1161 1192h0M926 848h0M1314 1030h0M784 963h0M1163 1207h0M1212 991h0M1601 973h0M1576 980h0M1148 1173h0M1215 965h0M959 1010h0M1003 948h0M1055 854h0M1040 1116h0M898 851h0M1431 1176h0M1069 1120h0M1499 892h0M1187 938h0M1274 1012h0M1228 1150h0M1414 959h0M1464 974h0M1033 962h0M1426 933h0M1690 889h0M1462 889h0M1103 971h0M1347 927h0M1110 1140h0M1110 1192h0M1246 914h0M1454 1200h0M1736 875h0M783 898h0M961 1013h0M974 950h0M1151 1106h0M1378 1026h0M1077 1052h0M1732 955h0M1139 867h0M1060 804h0M1212 1088h0M1464 1137h0M798 961h0M1348 985h0M878 1011h0M1413 1154h0M1651 1003h0M1266 977h0M954 860h0M1516 846h0M910 977h0M928 889h0M1205 901h0M1052 996h0M1343 1116h0M1517 972h0M1332 1002h0M1670 1040h0M1484 1037h0M1407 1080h0M993 880h0M1196 868h0M1608 988h0M1198 1070h0M988 894h0M835 903h0M1212 1157h0M990 1011h0M1220 969h0M972 927h0M960 1009h0M815 899h0M1076 976h0M1499 1066h0M557 958h0M1463 1073h0M874 1089h0M1322 1083h0M1368 920h0M586 969h0M790 989h0M1524 915h0M964 918h0M1040 918h0M1226 992h0M1556 900h0M738 980h0M988 1075h0M1352 1116h0M1009 1052h0M943 915h0M1472 1027h0M1104 1041h0M1246 1184h0M1672 898h0M654 987h0M1218 1099h0M923 1004h0M1136 1209h0M885 911h0M1620 915h0M662 981h0M1518 1023h0M1058 833h0M1387 1043h0M634 984h0M947 988h0M1362 1202h0M1245 1069h0M1430 866h0M1012 984h0M1006 937h0M1431 976h0M1729 865h0M683 952h0M805 994h0M1255 942h0M1081 1005h0M1017 890h0M1696 886h0M1175 1142h0M1075 895h0M1666 869h0M1125 864h0M1143 986h0M1059 968h0M1290 924h0M1460 1060h0M1387 1033h0M1550 969h0M1561 975h0M1040 953h0M1286 910h0M1466 993h0M1240 905h0M1248 1052h0M1310 860h0M732 927h0M1319 1099h0M756 955h0M1217 1077h0M923 1026h0M1295 1054h0M636 953h0M1550 998h0M969 882h0M1473 1182h0M1016 818h0M1436 1066h0M906 1022h0M941 934h0M944 921h0M1091 1005h0M986 921h0M1141 1202h0M1563 1020h0M1419 1019h0M1209 934h0M1655 970h0M847 1053h0M1388 1109h0M1524 979h0M1344 883h0M1686 916h0M1226 1133h0M908 854h0M1219 1062h0M1039 926h0M1110 835h0M1010 1069h0M1028 953h0M1071 945h0M1020 899h0M1032 944h0M1010 913h0M934 849h0M1583 1021h0M1293 975h0M1209 1048h0M578 978h0M1538 1001h0M1029 820h0M1307 1035h0M1464 1201h0M709 902h0M1358 1018h0M1652 983h0M1093 1075h0M1284 985h0M974 1053h0M909 930h0M1511 1071h0M1454 1084h0M1146 1170h0M1534 925h0M888 996h0M837 873h0M1065 920h0M930 952h0M1592 958h0M1356 1154h0M1331 878h0M1211 954h0M914 1050h0M797 1048h0M1631 926h0M1203 1197h0M1035 1111h0M1134 962h0M1009 874h0M1418 1186h0M1428 917h0M1641 1054h0M1223 995h0M1124 1115h0M1113 1149h0M1697 841h0M1239 1195h0M1052 840h0M1710 1004h0M1021 1160h0M1363 1095h0M666 973h0M971 875h0M1629 874h0M1299 909h0M1121 962h0M971 847h0M1195 1197h0M1093 979h0M1510 927h0M1645 975h0M925 1100h0M1022 856h0M882 1044h0M849 1013h0M993 1060h0M672 991h0M1305 1101h0M1070 930h0M968 907h0M1102 996h0M1730 954h0M1338 1097h0M1053 857h0M1145 839h0M989 1092h0M1300 920h0M1015 1014h0M1247 1180h0M1525 1030h0M776 1031h0M1554 964h0M1341 1069h0M1639 870h0M1075 857h0M873 983h0M1115 873h0M962 903h0M1011 1105h0M974 849h0M1202 1213h0M1177 876h0M1190 1132h0M1612 904h0M1054 1146h0M1701 933h0M1096 1024h0M909 975h0M1334 917h0M1132 878h0M988 1003h0M894 903h0M1507 955h0M1199 1193h0M1564 1039h0M1728 891h0M1007 1005h0M1403 987h0M730 1034h0M1120 898h0M1589 872h0M1296 1036h0M1427 1084h0M1278 1026h0M745 1010h0M884 1082h0M1171 1140h0M1694 1038h0M1004 836h0M889 1084h0M1461 1173h0M1614 942h0M1270 1161h0M1129 971h0M997 1099h0M1629 1053h0M1163 1073h0M1403 896h0M993 927h0M1385 1007h0M1064 1078h0M1624 944h0M1103 1104h0M639 990h0M843 973h0M1600 968h0M938 958h0M1361 1072h0M1323 1064h0M1477 891h0M1482 884h0M1271 1165h0M1452 1061h0M1057 1019h0M947 931h0M1280 921h0M1418 1207h0M925 893h0M760 908h0M1241 959h0M1235 929h0M1070 1197h0M1452 1158h0M1002 866h0M1405 1047h0M1028 1018h0M775 1005h0M1237 1088h0M1454 1136h0M1649 992h0M1431 1102h0M1345 880h0M689 1009h0M1367 1160h0M792 1056h0M1110 814h0M979 1100h0M1671 1017h0M606 962h0M1019 830h0M1093 1031h0M1068 939h0M963 955h0M1060 1137h0M1574 1026h0M1317 859h0M1174 1217h0M1286 872h0M1211 952h0M1227 1063h0M1270 864h0M967 1057h0M1210 948h0M1512 989h0M1243 886h0M1250 1012h0M991 1076h0M1693 1019h0M962 1034h0M1346 1209h0M1187 1090h0M1364 994h0M759 911h0M976 869h0M912 957h0M948 1102h0M1457 1221h0M1448 1190h0M1393 984h0M755 910h0M1144 1183h0M1036 829h0M1398 1142h0M820 991h0M1355 958h0M1124 1157h0M1235 1140h0M990 1082h0M931 977h0M1453 852h0M1466 890h0M804 1010h0M1436 874h0M1389 1099h0M881 869h0M1257 914h0M1011 1145h0M1202 1112h0M1164 1135h0M1154 991h0M827 924h0M987 1111h0M1603 980h0M630 1101h0M542 1112h0M587 1028h0M783 1165h0M903 1145h0M874 1165h0M573 1156h0M774 1076h0M754 1184h0M658 1177h0M789 1165h0M573 1141h0M675 1101h0M724 1141h0M1349 365h0M1544 295h0M1296 277h0M1636 436h0M1482 393h0M1185 298h0M1435 526h0M1556 340h0M1310 383h0M1535 533h0M1258 510h0M1468 295h0M1259 522h0M1421 359h0M1447 294h0M1265 311h0M1182 355h0M1229 297h0M1144 382h0M1182 507h0M1119 305h0M1684 432h0M1634 441h0M1192 520h0M1537 257h0M1221 306h0M1286 437h0M1460 282h0M1719 503h0M1291 382h0M1468 315h0M1443 531h0M1541 457h0M1623 386h0M1557 421h0M1525 445h0M1204 528h0M1702 293h0M1689 268h0M1522 524h0M1486 314h0M1376 372h0M1678 460h0M1584 488h0M1509 480h0M1444 399h0M1277 280h0M1540 399h0M1301 449h0M1678 322h0M1139 330h0M1380 294h0M1308 469h0M1418 283h0M1375 497h0M1675 306h0M1204 300h0M1528 522h0M1282 435h0M1594 304h0M1445 470h0M1316 474h0M1522 389h0M1320 301h0M1299 733h0M1664 649h0M1256 697h0M1290 641h0M1177 648h0M1396 787h0M1219 862h0M1617 827h0M1155 699h0M1272 726h0M1659 684h0M1736 813h0M1280 614h0M1655 629h0M1420 800h0M1703 609h0M1202 782h0M1148 632h0M1153 738h0M1703 652h0M1320 725h0M1594 720h0M1283 660h0M1564 757h0M1181 607h0M1214 840h0M1451 559h0M1160 700h0M1390 807h0M1254 649h0M1435 834h0M1164 707h0M1582 827h0M1376 782h0M1447 773h0M1304 730h0M1284 594h0M1290 575h0M1587 802h0M1345 599h0M1447 580h0M1321 578h0M1674 816h0M1403 845h0M1251 729h0M1505 842h0M1630 820h0M1408 593h0M1636 632h0M1536 778h0M1310 815h0M1366 723h0M1652 656h0M1357 713h0M1661 818h0M1551 746h0M1573 780h0M1422 718h0M1287 786h0M1336 852h0M1719 818h0M1408 663h0M1364 733h0M1269 824h0M1172 775h0M1336 717h0M1339 642h0M1334 780h0M1156 766h0M1643 712h0M1486 702h0M1528 715h0M1213 616h0M1544 742h0M1584 701h0M1476 671h0M1710 589h0M1697 718h0M1683 798h0M1368 655h0M1712 834h0M1396 655h0M1583 630h0M1541 625h0M1388 606h0M1152 695h0M1306 585h0M1346 630h0M1623 565h0M1199 769h0M1597 548h0M1565 620h0M1612 808h0M1366 827h0M1303 771h0M1658 657h0M1490 811h0M1466 830h0M1503 562h0M1724 593h0M1350 728h0M1698 798h0M1590 649h0M1579 720h0M1432 833h0M1292 792h0M1467 604h0M1166 846h0M1231 763h0M1485 608h0M1243 732h0M1470 586h0M1464 781h0M1255 671h0M1365 565h0M1300 801h0M1323 643h0M1643 799h0M1468 708h0M1587 724h0M1181 683h0M1707 626h0M1675 747h0M1619 552h0M1661 630h0M1450 590h0M1401 564h0M1198 590h0M1678 724h0M1569 805h0M1243 602h0M1486 716h0M1379 854h0M1656 732h0M1640 731h0M1253 664h0M1686 804h0M1142 689h0M1413 719h0M1449 745h0M1274 852h0M1633 642h0M1684 749h0M1682 795h0M1622 656h0M1231 680h0M1209 835h0M1173 786h0M1262 616h0M1539 802h0M1163 851h0M1478 564h0M1361 622h0M1228 587h0M1580 601h0M1196 577h0M1453 844h0M1658 643h0M1300 811h0M1214 673h0M1706 633h0M1319 702h0M1307 792h0M1736 799h0M1632 820h0M1203 579h0M1658 582h0M1404 822h0M1524 714h0M1476 616h0M1171 591h0M1647 767h0M1479 682h0M1570 819h0M1169 685h0M1577 624h0M1165 624h0M1416 709h0M1032 803h0M1021 630h0M1009 797h0M956 525h0M960 424h0M1016 702h0M1031 794h0M939 543h0M979 683h0M986 645h0M986 559h0M954 509h0M1042 644h0M1020 725h0M995 606h0M987 539h0M910 513h0M1003 547h0M983 711h0M921 434h0M937 454h0M1026 587h0M964 495h0M929 497h0M938 477h0M932 517h0M1079 751h0M1016 530h0M1040 705h0M1025 706h0M1080 763h0M987 698h0M958 595h0M999 528h0M951 633h0M979 510h0M1002 785h0M910 444h0M1032 570h0M1023 669h0M988 499h0M921 545h0M983 735h0M1056 761h0M981 553h0M964 640h0M929 532h0M1024 553h0M1054 690h0M1021 702h0M1010 704h0M866 331h0M964 322h0M949 278h0M947 374h0M928 381h0M917 387h0M883 317h0M900 377h0M856 252h0M864 264h0M941 263h0M883 288h0M970 349h0M930 424h0M944 255h0M831 191h0M907 403h0M936 359h0M967 335h0M1781 670h0M1776 915h0M2070 755h0M2236 718h0M1767 441h0M1924 795h0M1934 807h0M1994 772h0M2133 721h0M2188 708h0M2192 707h0M2310 702h0M1964 530h0M2090 537h0M2282 424h0M2287 435h0M2284 427h0M1719 1161h0M1900 1145h0M1956 1167h0M1952 1168h0M2010 1166h0" stroke="#6a5a5a" stroke-width="2" stroke-linecap="square"/><path d="M1444 1067h0M1507 893h0M1189 1137h0M717 918h0M791 908h0M1350 918h0M1207 1212h0M1606 983h0M1185 993h0M1098 1138h0M1281 1091h0M1391 888h0M962 983h0M1218 1028h0M1600 881h0M1310 1226h0M1691 921h0M1488 877h0M1219 918h0M1120 918h0M1635 841h0M1256 1021h0M1464 1017h0M924 977h0M1207 891h0M1207 909h0M1614 1069h0M1269 1173h0M1137 1019h0M927 1083h0M1030 868h0M1011 839h0M1267 896h0M822 1035h0M830 870h0M926 892h0M914 976h0M678 988h0M1461 876h0M1050 950h0M1047 970h0M1666 956h0M1280 974h0M1010 1025h0M1034 1060h0M1658 902h0M1544 985h0M1437 1144h0M989 883h0M1020 847h0M1229 935h0M1472 1152h0M1204 1170h0M1455 1193h0M1102 1007h0M731 1011h0M1615 1002h0M1459 948h0M687 952h0M1310 969h0M1011 854h0M1624 954h0M1317 962h0M1433 1217h0M1226 948h0M1213 985h0M1178 874h0M1315 902h0M1612 991h0M1331 1175h0M789 979h0M953 840h0M1286 924h0M1086 1009h0M1522 1009h0M1395 670h0M1529 646h0M1156 752h0M1693 740h0M1146 701h0M1489 623h0M1280 668h0M1593 806h0M1298 849h0M1651 656h0M1674 577h0M1188 857h0M1526 592h0M1252 810h0M1646 736h0M1647 717h0M1544 580h0M1485 799h0M1221 799h0M1636 682h0M1618 606h0M1717 609h0M1233 636h0M1368 851h0M1340 730h0M1679 654h0M1593 628h0M1629 642h0M1689 759h0M1537 618h0M1257 734h0M1209 626h0M1471 732h0M1377 627h0M1706 640h0" stroke="#c82a1a" stroke-width="3" stroke-linecap="round"/><path d="M1410 1007h0M768 888h0M1654 969h0M1613 941h0M1551 1023h0M1422 973h0M1294 1198h0M1323 1214h0M1274 1024h0M868 1055h0M1396 1012h0M946 1005h0M1471 1167h0M1266 1177h0M1596 912h0M1151 1143h0M1433 1115h0M1479 1146h0M1070 1206h0M1530 868h0M1087 1132h0M1455 1203h0M1501 973h0M956 932h0M1266 1023h0M668 1001h0M1227 1027h0M1426 1028h0M1289 1019h0M680 978h0M1385 1016h0M1410 969h0M989 1057h0M1586 987h0M1082 1082h0M1108 1014h0M1421 886h0M1108 982h0M981 852h0M1312 1049h0M1713 931h0M1251 870h0M1203 1055h0M1702 893h0M938 887h0M819 1044h0M1133 900h0M1112 811h0M1590 898h0M1005 1011h0M1084 961h0M1531 1062h0M1391 1169h0M931 936h0M1293 1097h0M1083 1016h0M1641 1020h0M1306 1012h0M1524 861h0M1099 839h0M707 910h0M1372 882h0M874 914h0M1457 987h0M1669 858h0M1327 1046h0M942 863h0M1435 1095h0" stroke="#b02818" stroke-width="3" stroke-linecap="round"/><path d="M922 915h0M901 1015h0M1368 908h0M1440 1112h0M732 992h0M1450 1222h0M952 1100h0M1528 1096h0M1356 1200h0M1393 998h0M726 1023h0M1171 1009h0M990 914h0M1135 860h0M1052 930h0M1582 872h0M1076 1184h0M1603 890h0M758 1010h0M1710 1009h0M1524 963h0M1039 1167h0M1276 1039h0M1620 1076h0M1671 893h0M1189 1173h0M987 1102h0M1457 1211h0M1073 836h0M904 899h0M979 994h0M995 976h0M1629 999h0M1439 949h0M1443 871h0M808 967h0M1124 908h0M889 976h0M925 1105h0M720 942h0M1337 1003h0M1258 953h0M923 1061h0M799 1037h0M872 1063h0M1342 1086h0M1536 862h0M1427 982h0M1255 988h0M1195 866h0M862 915h0M719 926h0M1732 883h0M1342 965h0M919 937h0M1260 902h0M1055 975h0M1652 936h0M1002 966h0M1039 1022h0M1143 1114h0M1237 1068h0M1382 927h0M1361 1150h0M1195 1066h0M1543 876h0M1062 1184h0M1404 1073h0M1643 901h0M1341 1167h0M1573 1032h0M1630 888h0M894 1027h0M812 1021h0M1680 845h0M1355 892h0M1231 1042h0M1067 1127h0M784 1007h0M1336 954h0M1245 1113h0M1292 1014h0M1295 947h0M1363 955h0M1711 980h0M914 958h0M1505 1067h0M1293 1124h0M1402 826h0M1226 640h0M1287 632h0M1411 785h0M1525 735h0M1642 775h0M1721 798h0M1195 691h0M1281 846h0M1165 627h0M1419 781h0M1442 775h0M1381 748h0M1429 843h0M1274 738h0M1467 769h0M1319 809h0M1451 691h0M1314 791h0M1655 818h0M1310 797h0M1307 790h0M1657 556h0M1570 727h0M1502 645h0" stroke="#d82818" stroke-width="3" stroke-linecap="round"/><path d="M1502 874h0M1681 876h0M1231 949h0M1384 865h0M1424 1015h0M1444 1186h0M1684 982h0M1263 961h0M1114 1016h0M845 923h0M1641 976h0M756 949h0M684 1014h0M1189 1053h0M1273 1229h0M1339 988h0M646 940h0M983 1100h0M842 984h0M983 880h0M725 934h0M1211 877h0M1308 1076h0M798 1023h0M1495 859h0M1009 1140h0M1279 870h0M938 847h0M1258 940h0M1408 873h0M1323 1187h0M1131 957h0M987 1075h0M1164 1143h0M1680 1043h0M1476 863h0M1637 994h0M812 1040h0M1348 1097h0M863 983h0M975 835h0M1717 903h0M737 1007h0M1073 808h0M969 918h0M1355 1139h0M1348 1076h0M1019 959h0M1442 854h0M1514 871h0M1459 1086h0M606 996h0M850 1083h0M1414 1085h0M1179 905h0M1039 994h0M1379 1186h0M1315 1015h0M617 973h0M1526 865h0M943 1028h0M1161 1050h0M1164 880h0M1415 1065h0M662 1004h0M1466 907h0M833 1015h0M1468 1072h0M1232 945h0M608 967h0M789 1049h0M1728 994h0M799 976h0M1120 1181h0M656 970h0M1125 1043h0" stroke="#c84020" stroke-width="3" stroke-linecap="round"/><path d="M1022 834h0M1423 1134h0M1299 901h0M1198 986h0M1586 1088h0M1481 1146h0M756 911h0M1310 1022h0M1004 978h0M1490 853h0M1324 1225h0M895 1075h0M1639 920h0M864 998h0M1181 897h0M1323 1008h0M990 956h0M1469 1162h0M1200 931h0M1464 858h0M1310 1205h0M1371 1089h0M1339 1205h0M1052 1067h0M1411 883h0M984 953h0M1412 1047h0M1543 870h0M1096 849h0M1318 1221h0M1087 1017h0M1169 988h0M1434 1042h0M1449 1113h0M953 953h0M1622 954h0M1264 891h0M909 848h0M1031 1103h0M1286 929h0M887 1047h0M1154 1186h0M635 975h0M1299 1065h0M1267 1230h0M1129 796h0M1032 1021h0M1153 1058h0M1579 916h0M760 953h0M927 1004h0M736 1014h0M1465 1136h0M1007 1002h0M1140 944h0M907 923h0M993 1010h0M1183 932h0M1285 956h0M1379 908h0M827 1072h0M1379 967h0M1296 1214h0M1112 859h0M1247 1160h0M1002 926h0M1670 1025h0M1127 946h0M698 955h0M1370 1192h0M1600 859h0M1109 1023h0M1387 1123h0M1111 806h0M1078 1069h0M1255 999h0M1630 854h0M1146 1200h0M1581 995h0M956 1001h0M1291 859h0M1170 600h0M1261 853h0M1686 709h0M1306 626h0M1486 574h0M1196 831h0M1699 646h0M1154 728h0M1179 829h0M1341 575h0M1349 729h0M1364 832h0M1618 700h0M1230 690h0M1313 622h0M1393 828h0M1498 629h0M1395 797h0M1456 709h0M1333 696h0M1693 563h0M1521 757h0M1653 782h0M1602 702h0M1619 720h0M1703 766h0M1170 736h0M1150 722h0M1245 750h0M1430 804h0M1435 724h0M1291 670h0M1584 556h0M1577 834h0M1621 761h0M1571 614h0M1648 758h0M1272 734h0M1248 805h0M1736 785h0M1215 612h0M1676 772h0M1531 771h0" stroke="#e03020" stroke-width="3" stroke-linecap="round"/><path d="M1201 845h0M1193 864h0M1172 790h0M1227 857h0M1178 870h0M1153 801h0M1257 816h0M1263 873h0M1286 961h0M1289 882h0M1215 945h0M1146 940h0M1381 887h0M1220 916h0M1353 894h0M1217 924h0M1063 1014h0M1087 1013h0M1102 1012h0M1060 1032h0M1030 1007h0M1025 1000h0M1094 1049h0M1108 1046h0M1085 1037h0M1084 1043h0M971 479h0M898 463h0M959 599h0M973 507h0M945 598h0M924 550h0M960 544h0M906 483h0M925 481h0M956 495h0M935 492h0M957 428h0M984 579h0M988 587h0M926 534h0M955 460h0M944 635h0M961 540h0M939 425h0M941 629h0M972 566h0M977 585h0M1014 621h0M917 537h0M940 527h0M971 506h0M924 577h0M906 491h0M927 730h0M891 436h0M886 429h0M980 426h0M1057 637h0M1054 618h0M1059 629h0M1031 1066h0M1009 1095h0M999 1086h0M1050 1067h0M1006 1085h0M1050 1062h0M1009 1080h0M1059 1060h0M1062 1066h0M1005 1082h0M1052 1067h0M1008 1075h0M1101 1047h0M1093 1053h0M1079 1054h0M1111 1055h0M1106 1052h0M1074 1065h0M1091 1048h0M1144 1037h0M1113 1044h0M1075 1058h0M1106 1047h0M1129 1051h0M1087 1051h0M1114 1052h0M1131 1049h0M1084 1058h0M1065 1060h0M1184 1025h0M1191 1029h0M1155 1037h0M1185 1023h0M1193 1024h0M1163 1036h0M1192 1032h0M1196 1021h0M1200 1025h0M1187 1029h0M1272 1000h0M1280 1000h0M1229 1007h0M1270 1001h0M1234 1010h0M1242 1004h0M1231 1015h0M1237 1011h0M1270 1008h0M1237 1016h0M1231 1015h0M1237 1008h0M1139 1180h0M1212 1156h0M1274 1132h0M1305 1116h0M1320 1109h0M1300 1181h0M1362 1155h0M1402 909h0M1424 878h0M1429 878h0M1425 897h0M1715 1034h0M1712 1016h0" stroke="#c82a1a" stroke-width="4.5" stroke-linecap="round"/><path d="M1148 844h0M1231 837h0M1247 860h0M1254 820h0M1175 833h0M1203 809h0M1212 846h0M1092 948h0M1214 939h0M1276 958h0M1108 980h0M1077 912h0M1249 957h0M1071 880h0M1096 1012h0M1075 1015h0M1100 1014h0M1054 1036h0M1024 1006h0M978 420h0M967 620h0M956 612h0M966 571h0M975 443h0M962 625h0M953 573h0M1013 544h0M976 625h0M1017 583h0M976 621h0M937 499h0M997 583h0M918 472h0M995 606h0M923 439h0M969 436h0M970 563h0M950 490h0M995 554h0M929 446h0M1007 540h0M930 483h0M937 615h0M991 595h0M986 545h0M938 562h0M939 547h0M979 622h0M945 587h0M972 568h0M1019 584h0M951 448h0M932 511h0M962 588h0M929 728h0M905 718h0M887 452h0M997 487h0M1029 563h0M1057 611h0M1045 599h0M1037 580h0M1067 686h0M1072 694h0M1022 1081h0M1043 1073h0M987 1083h0M1050 1068h0M1000 1084h0M1054 1067h0M1025 1069h0M1041 1068h0M1119 1047h0M1083 1067h0M1135 1043h0M1083 1057h0M1099 1064h0M1139 1043h0M1073 1060h0M1136 1035h0M1133 1043h0M1089 1059h0M1084 1054h0M1112 1045h0M1119 1048h0M1140 1043h0M1094 1061h0M1081 1060h0M1167 1031h0M1157 1039h0M1199 1036h0M1163 1032h0M1179 1030h0M1193 1027h0M1155 1038h0M1167 1027h0M1237 1013h0M1275 1006h0M1235 1015h0M1260 997h0M1229 1014h0M1265 1002h0M1130 1182h0M1131 1180h0M1136 1179h0M1183 1168h0M1255 1139h0M1228 1150h0M1320 1110h0M1253 1192h0M1306 1181h0M1395 1142h0M1371 1151h0M1403 887h0M1421 894h0M1693 959h0" stroke="#e03020" stroke-width="4.5" stroke-linecap="round"/><path d="M1250 786h0M1228 863h0M1275 852h0M1236 838h0M1190 833h0M1250 935h0M1250 896h0M1306 957h0M1111 935h0M1130 962h0M1326 944h0M1123 994h0M1087 884h0M1067 1014h0M1093 1018h0M1103 1015h0M1046 1029h0M1013 991h0M1097 1041h0M1064 1049h0M954 579h0M981 535h0M997 555h0M952 498h0M936 423h0M963 550h0M959 552h0M924 515h0M1009 517h0M976 611h0M1021 593h0M974 491h0M1029 573h0M975 560h0M989 629h0M934 542h0M979 559h0M1024 565h0M952 456h0M957 415h0M1001 500h0M968 476h0M966 487h0M977 580h0M935 443h0M940 483h0M914 473h0M1003 584h0M956 559h0M937 733h0M907 716h0M919 568h0M942 632h0M957 658h0M949 662h0M997 501h0M1002 500h0M981 429h0M1000 495h0M1048 610h0M1037 585h0M1052 621h0M1018 1076h0M1012 1073h0M1028 1072h0M1013 1070h0M1105 1047h0M1096 1049h0M1081 1051h0M1091 1046h0M1076 1055h0M1087 1058h0M1088 1052h0M1119 1043h0M1099 1053h0M1096 1054h0M1179 1024h0M1202 1024h0M1167 1032h0M1175 1035h0M1172 1029h0M1167 1033h0M1210 1015h0M1187 1025h0M1198 1025h0M1169 1035h0M1194 1028h0M1183 1027h0M1157 1030h0M1207 1016h0M1238 1014h0M1233 1003h0M1256 999h0M1222 1016h0M1210 1020h0M1234 1013h0M1224 1019h0M1186 1166h0M1172 1221h0M1235 1202h0M1224 1205h0M1304 1179h0M1357 1157h0M1418 874h0M1717 1021h0M1701 956h0M1694 969h0" stroke="#d82818" stroke-width="4.5" stroke-linecap="round"/><path d="M1280 905h0M1267 968h0M1111 998h0M1091 912h0M1167 915h0M1268 899h0M1050 908h0M993 932h0M1084 825h0M1084 929h0M974 920h0M1006 888h0M1074 862h0M1138 805h0M1093 941h0M1036 827h0M1101 859h0M1097 933h0M1011 914h0M989 862h0M1009 915h0M1032 915h0M1046 820h0M1095 820h0M1092 872h0M1052 826h0M1078 876h0M1145 830h0M988 889h0M975 468h0M1028 563h0M971 538h0M955 616h0M994 585h0M948 542h0M985 617h0M979 435h0M1018 620h0M1027 579h0M1006 644h0M1007 638h0M1040 583h0M1019 560h0M1027 575h0M1015 654h0M1018 747h0M1066 749h0M998 726h0M1022 761h0M1019 654h0M935 732h0M906 499h0M997 483h0M990 464h0M981 429h0M1047 604h0M1037 586h0M1039 584h0M1074 712h0M1058 653h0M1037 1074h0M1012 1076h0M1010 1084h0M1044 1072h0M1021 1087h0M1032 1075h0M1055 1059h0M1023 1077h0M1034 1071h0M1035 1071h0M1018 1073h0M1120 1037h0M1116 1044h0M1092 1046h0M1110 1049h0M1055 1065h0M1114 1057h0M1150 1043h0M1067 1047h0M1118 1041h0M1071 1053h0M1159 1046h0M1178 1030h0M1165 1034h0M1194 1032h0M1187 1033h0M1199 1029h0M1196 1019h0M1203 1023h0M1198 1027h0M1208 1029h0M1204 1022h0M1276 999h0M1244 1011h0M1259 1017h0M1241 1013h0M1215 1014h0M1130 1182h0M1107 1184h0M1180 1165h0M1229 1150h0M1289 1124h0M1284 1185h0M1195 1140h0M1207 1129h0M1257 1096h0M1309 1218h0M1410 894h0M1427 881h0M1421 891h0M1718 1015h0M1717 1016h0M1721 1008h0M1718 1013h0" stroke="#e0681a" stroke-width="4.5" stroke-linecap="round"/><path d="M1151 980h0M1145 968h0M1307 903h0M1265 880h0M1077 899h0M1216 905h0M1229 900h0M1319 955h0M1070 982h0M1095 915h0M1073 945h0M1085 921h0M1104 865h0M1032 832h0M1072 853h0M1114 908h0M1094 913h0M963 891h0M1131 858h0M1138 883h0M1120 935h0M1051 870h0M1122 902h0M1019 951h0M998 938h0M1091 833h0M1081 936h0M1007 939h0M1057 866h0M1047 814h0M1120 901h0M1084 1041h0M1018 597h0M955 629h0M967 433h0M907 415h0M922 511h0M959 613h0M898 444h0M1023 637h0M1019 582h0M1036 591h0M1078 770h0M1069 753h0M1027 751h0M1054 641h0M983 739h0M1004 724h0M909 723h0M931 732h0M919 725h0M950 739h0M937 620h0M1015 522h0M1069 684h0M1057 638h0M1012 1078h0M1062 1058h0M1056 1062h0M1054 1053h0M1036 1071h0M1053 1061h0M1038 1075h0M1009 1079h0M1075 1051h0M1112 1056h0M1097 1056h0M1095 1055h0M1101 1048h0M1153 1038h0M1178 1030h0M1148 1041h0M1153 1042h0M1196 1019h0M1154 1047h0M1165 1027h0M1239 1016h0M1248 1015h0M1219 1016h0M1272 1002h0M1235 1006h0M1213 1019h0M1273 1004h0M1225 1024h0M1241 1014h0M1261 999h0M1061 1190h0M1081 1195h0M1158 1175h0M1154 1177h0M1199 1161h0M1201 1206h0M1223 1206h0M1182 1215h0M1298 1181h0M1310 1180h0M1246 1101h0M1220 1120h0M1278 1092h0M1280 1093h0M1293 1228h0M1359 1205h0M1424 881h0M1719 1017h0M1705 956h0M1698 959h0" stroke="#e87a20" stroke-width="4.5" stroke-linecap="round"/><path d="M1322 887h0M1286 952h0M1079 930h0M1168 973h0M1225 959h0M1136 802h0M1050 846h0M1122 847h0M1095 934h0M1017 947h0M1104 925h0M1063 830h0M1034 894h0M1117 921h0M1017 873h0M1093 862h0M998 866h0M1076 891h0M969 914h0M986 832h0M1149 833h0M1039 1020h0M1112 1047h0M978 503h0M929 422h0M1047 625h0M1018 552h0M1005 644h0M1016 590h0M1019 607h0M1025 604h0M978 663h0M901 718h0M922 727h0M899 491h0M887 438h0M893 446h0M906 517h0M927 584h0M928 585h0M965 680h0M980 414h0M983 436h0M1016 534h0M1071 708h0M1022 1073h0M1034 1069h0M1053 1063h0M1008 1082h0M1014 1073h0M1036 1071h0M1036 1070h0M1036 1072h0M1082 1058h0M1111 1046h0M1113 1049h0M1088 1058h0M1064 1048h0M1137 1043h0M1116 1055h0M1061 1063h0M1087 1058h0M1201 1017h0M1155 1033h0M1198 1025h0M1213 1014h0M1187 1031h0M1165 1030h0M1190 1022h0M1253 1007h0M1231 1016h0M1255 1011h0M1249 1006h0M1237 1013h0M1245 1003h0M1054 1194h0M1242 1145h0M1269 1191h0M1247 1196h0M1171 1154h0M1169 1155h0M1165 1157h0M1214 1126h0M1264 1096h0M1367 1202h0M1404 904h0M1405 885h0M1405 883h0M1423 880h0M1712 1016h0M1723 1030h0M1699 970h0M1697 957h0M1697 969h0" stroke="#d85a18" stroke-width="4.5" stroke-linecap="round"/><path d="M1006 932h0M1072 860h0M1122 842h0M1067 878h0M1052 870h0M1101 818h0M1033 872h0M1086 928h0M1133 911h0M1042 620h0M1011 552h0M1016 792h0M1066 744h0M1061 791h0M1064 750h0M1047 709h0M1021 740h0M1034 680h0M1007 758h0M986 683h0M974 677h0M1051 627h0M968 660h0M1008 729h0M1008 637h0M1002 692h0M1037 752h0M903 487h0M897 500h0M949 629h0M1050 1069h0M1008 1087h0M1042 1070h0M1041 1073h0M1017 1080h0M1064 1057h0M1088 1057h0M1123 1050h0M1087 1050h0M1107 1054h0M1076 1058h0M1106 1045h0M1062 1061h0M1062 1057h0M1203 1024h0M1173 1033h0M1201 1018h0M1217 1026h0M1268 1002h0M1247 1015h0M1210 1010h0M1238 1007h0M1234 1002h0M1378 1202h0" stroke="#e0c81a" stroke-width="4.5" stroke-linecap="round"/><path d="M1057 920h0M1088 893h0M1026 874h0M972 895h0M991 825h0M1089 877h0M994 921h0M999 930h0M1019 895h0M989 916h0M1122 909h0M965 908h0M993 848h0M1000 923h0M1055 903h0M1027 617h0M1002 569h0M1017 698h0M1010 652h0M1029 805h0M999 670h0M1023 657h0M1044 652h0M990 683h0M1021 792h0M1001 703h0M1033 622h0M1050 749h0M1007 764h0M1000 677h0M1055 762h0M887 432h0M920 547h0M933 601h0M1041 1077h0M1040 1070h0M1029 1070h0M992 1087h0M1064 1065h0M1070 1059h0M1117 1058h0M1066 1056h0M1138 1043h0M1194 1034h0M1178 1034h0M1217 1012h0M1215 1022h0M1242 1008h0M1242 1009h0M1311 1219h0" stroke="#d0d828" stroke-width="4.5" stroke-linecap="round"/><path d="M961 862h0M1107 950h0M1102 807h0M1069 952h0M1013 837h0M1011 832h0M974 903h0M1124 829h0M1036 600h0M1036 611h0M1020 704h0M1025 786h0M1040 723h0M985 670h0M990 696h0M1033 806h0M1008 630h0M1043 647h0M975 690h0M1019 704h0M965 637h0M992 682h0M1030 797h0M1066 771h0M976 710h0M987 729h0M986 647h0M1046 712h0M1078 788h0M1014 748h0M1011 776h0M1037 792h0M1006 673h0M897 487h0M894 421h0M928 593h0M937 625h0M938 623h0M998 1088h0M1025 1072h0M1013 1072h0M1003 1089h0M1020 1083h0M1022 1080h0M1015 1081h0M1113 1042h0M1170 1031h0M1184 1030h0M1178 1028h0M1181 1025h0M1219 1023h0M1237 1006h0M1236 1014h0M1240 1006h0M1255 1009h0M1233 1016h0M1373 1206h0" stroke="#e8b818" stroke-width="4.5" stroke-linecap="round"/><path d="M1059 769h0M1030 648h0M985 701h0M1058 756h0M1039 794h0M1025 649h0M1035 765h0M1037 671h0M1028 637h0M1019 796h0M1041 737h0M999 776h0M974 703h0M1037 628h0M1021 730h0M1036 774h0M1049 675h0M1033 740h0M1012 752h0" stroke="#d8d820" stroke-width="4.5" stroke-linecap="round"/><path d="M1031 701h0M1015 712h0M1020 651h0M979 726h0M993 699h0M1023 678h0M1038 779h0M1015 623h0M1026 662h0M1041 689h0M1079 770h0M1071 746h0M1053 635h0M1051 795h0M1005 748h0M1007 767h0M979 683h0M1009 806h0M979 657h0M1001 690h0M1039 663h0" stroke="#e8e028" stroke-width="4.5" stroke-linecap="round"/><path d="M899 241h0M917 235h0M833 262h0M859 250h0M852 253h0M873 245h0M925 241h0M835 258h0M846 258h0M892 244h0M940 234h0M868 341h0M866 345h0M876 369h0M871 358h0M885 401h0M894 430h0M893 431h0M883 396h0M897 456h0M904 463h0M930 556h0M917 507h0M923 532h0M924 517h0M932 542h0M922 522h0M919 511h0M913 498h0M910 486h0M916 498h0M951 614h0M960 631h0M948 604h0M948 612h0M948 606h0M950 616h0M937 573h0M942 572h0M946 596h0M980 723h0M982 734h0M979 704h0M984 736h0M984 739h0M973 694h0M965 655h0M977 715h0M975 695h0M978 703h0M973 689h0M972 673h0M964 656h0M991 772h0M1002 807h0M995 779h0M1004 813h0M968 342h0M971 352h0M947 307h0M960 333h0M955 325h0M950 317h0M987 393h0M999 444h0M980 361h0M981 375h0M988 412h0M1003 448h0M997 437h0M992 424h0M984 385h0M981 379h0M996 440h0M989 408h0M978 368h0M1000 448h0M995 444h0M976 359h0M1010 474h0M1009 472h0M1021 504h0M1026 505h0M1035 530h0M1040 535h0M1016 492h0M1015 486h0M1024 497h0M1051 605h0M1050 602h0M1047 587h0M1051 614h0M1043 561h0M1055 637h0M1041 550h0M1050 592h0M1052 592h0M1057 638h0M1052 614h0M1045 559h0M1045 574h0M1049 585h0M1050 590h0M1070 685h0M1061 667h0M1071 715h0M1069 688h0M1062 656h0M1066 683h0M1076 736h0M1080 747h0M1083 787h0M1084 770h0M1085 787h0M1078 756h0M1088 782h0M1078 752h0M687 908h0M695 904h0M588 936h0M692 905h0M644 917h0M654 918h0M587 938h0M644 919h0M599 931h0M590 935h0M679 905h0M572 940h0M651 917h0M690 905h0M567 941h0M694 903h0M559 942h0M650 915h0M538 951h0M608 928h0M689 904h0M599 933h0M585 937h0M585 936h0M604 928h0M596 931h0M660 913h0M763 886h0M707 899h0M708 898h0M806 872h0M827 865h0M747 887h0M818 868h0M713 901h0M709 897h0M729 893h0M752 883h0M858 858h0M713 897h0M831 863h0M736 891h0M855 858h0M803 872h0M747 887h0M795 875h0M744 889h0M855 858h0M778 877h0M776 876h0M760 884h0M833 862h0M889 848h0M996 817h0M909 840h0M889 847h0M885 846h0M942 832h0M926 836h0M892 842h0M986 818h0M957 827h0M986 819h0M938 833h0M958 828h0M988 820h0M980 821h0M986 820h0M922 837h0M953 831h0M880 851h0M973 826h0M1078 796h0M1005 817h0M1041 803h0M1120 779h0M1081 793h0M1128 779h0M1007 816h0M1109 787h0M1017 811h0M1112 785h0M1106 787h0M1085 792h0M1038 805h0M1091 790h0M1076 794h0M1113 783h0M1121 782h0M1030 807h0M1101 787h0M1131 781h0M1132 784h0M1024 807h0M1161 768h0M1159 768h0M1199 756h0M1188 759h0M1154 772h0M1166 767h0M1203 756h0M1200 759h0M1174 763h0M1159 772h0M1187 762h0M1182 763h0M1157 771h0M1207 755h0M1198 758h0M1179 764h0M664 975h0M656 978h0M635 985h0M614 989h0M646 981h0M637 985h0M653 979h0M648 981h0M607 992h0M668 966h0M672 971h0M669 948h0M671 968h0M528 1010h0M535 1030h0M529 1022h0M538 1043h0M562 1001h0M565 1007h0M567 1012h0M571 1041h0M1427 778h0M1420 779h0M1420 779h0M1399 786h0M1396 783h0M1391 787h0M1000 1085h0M1050 1063h0M1049 1065h0M1040 1070h0M1003 1088h0M1058 1055h0M1050 1057h0M998 1080h0M1065 1072h0M1096 1059h0M1097 1055h0M1100 1051h0M1115 1051h0M1113 1048h0M1078 1055h0M1218 1015h0M1248 1017h0M1246 999h0M1215 1004h0M1224 1018h0M1234 1002h0M1241 1016h0M928 1095h0M881 1106h0M1293 997h0M1334 987h0M1344 982h0M1368 981h0M1313 993h0M1308 994h0M1080 311h0M1082 311h0M1094 361h0M1088 339h0M1096 355h0M1085 317h0M1094 361h0M1089 337h0M1099 384h0M1111 416h0M1117 435h0M1100 386h0M1102 391h0M1106 404h0M1106 397h0M1106 400h0M1102 390h0M1109 421h0M1147 534h0M1130 481h0M1135 505h0M1148 533h0M1160 583h0M1162 583h0M1160 584h0M1128 490h0M1169 606h0M1162 602h0M1184 674h0M1190 692h0M1201 737h0M1202 737h0M1187 675h0M1176 637h0M1178 633h0M1170 621h0M1187 693h0M1186 696h0M1214 214h0M1220 229h0M1184 143h0M1209 209h0M1225 263h0M1230 259h0M1229 252h0M1217 223h0M1201 194h0M1205 197h0M1200 193h0M1236 269h0M1182 140h0M1207 203h0M1198 173h0M1243 292h0M1240 310h0M1246 330h0M1236 281h0M1261 365h0M1233 289h0M1242 302h0M1236 276h0M1249 331h0M1250 340h0M1240 284h0M1247 342h0M1261 362h0M1250 329h0M1254 345h0M1261 362h0M1259 364h0M1294 489h0M1272 416h0M1278 422h0M1269 407h0M1283 439h0M1280 446h0M1279 427h0M1289 478h0M1293 475h0M1282 453h0M1287 476h0M1289 492h0M1291 486h0M1274 446h0M1273 411h0M1275 438h0M1269 414h0M1284 453h0M1273 422h0M1276 426h0M1264 386h0M1264 400h0M1267 381h0M1291 489h0M1295 492h0M1279 437h0M1269 369h0M1312 548h0M1305 533h0M1307 535h0M1321 565h0M1325 558h0M1330 582h0M1326 582h0M1302 524h0M1337 616h0M1313 540h0M1322 573h0M1333 609h0M1319 581h0M1324 583h0M1307 533h0M1304 527h0M1319 564h0M1311 526h0M1369 727h0M1372 730h0M1374 745h0M1343 629h0M1353 650h0M1347 648h0M1359 702h0M1354 651h0M1377 750h0M1375 767h0M1365 710h0M1365 697h0M1363 671h0M1347 649h0M1361 695h0M1354 679h0M1359 675h0M1374 756h0M1368 732h0M1348 647h0M1368 708h0M1379 749h0M1375 741h0M1370 727h0M1372 757h0M1375 755h0M1352 661h0M1372 752h0M1371 743h0M1372 723h0M1337 621h0M1368 728h0M1355 671h0M1371 735h0M1258 211h0M1255 196h0M1263 220h0M1250 169h0M1262 236h0M1269 238h0M1252 186h0M1253 184h0M1254 167h0M1271 240h0M1265 234h0M1263 228h0M1259 206h0M1257 216h0M1253 184h0M1256 174h0M1265 235h0M1255 198h0M1284 292h0M1275 272h0M1274 266h0M1275 274h0M1281 283h0M1272 251h0M1273 283h0M1272 256h0M1265 247h0M1276 269h0M1276 284h0M1289 327h0M1300 362h0M1300 361h0M1310 390h0M1294 343h0M1279 303h0M1309 388h0M1286 309h0M1308 392h0M1293 315h0M1314 411h0M1284 292h0M1306 383h0M1308 392h0M1284 310h0M1307 380h0M1288 320h0M1303 391h0M1306 361h0M1307 398h0M1312 395h0M1284 300h0M1309 400h0M1321 433h0M1345 492h0M1332 458h0M1326 445h0M1329 447h0M1325 440h0M1321 446h0M1338 481h0M1323 449h0M1339 479h0M1319 432h0M1325 439h0M1352 512h0M1340 493h0M1358 512h0M1353 503h0M1354 524h0M1355 519h0M1354 529h0M1363 541h0M1350 495h0M1358 533h0M1356 534h0M1365 541h0M1377 580h0M1427 701h0M1391 605h0M1404 647h0M1421 691h0M1386 610h0M1412 663h0M1411 670h0M1379 579h0M1378 580h0M1394 622h0M1378 573h0M1410 662h0M1407 663h0M1422 688h0M1426 705h0M1403 641h0M1415 686h0M1421 683h0M1397 635h0M1421 682h0M1411 665h0M1406 645h0M1382 581h0M1438 738h0M1445 748h0M1431 718h0M1448 760h0M1434 730h0M1446 749h0M1436 725h0M1449 749h0M1441 740h0M1448 748h0M1439 732h0M1448 749h0M1437 721h0M1448 752h0M1293 168h0M1308 190h0M1308 193h0M1287 146h0M1308 199h0M1290 154h0M1282 145h0M1291 162h0M1299 188h0M1303 181h0M1285 157h0M1289 165h0M1285 155h0M1300 196h0M1302 195h0M1297 174h0M1282 154h0M1342 300h0M1338 284h0M1321 231h0M1330 274h0M1339 287h0M1316 226h0M1335 294h0M1322 243h0M1347 313h0M1323 259h0M1342 299h0M1311 225h0M1341 297h0M1310 215h0M1324 258h0M1333 282h0M1335 284h0M1316 215h0M1322 260h0M1330 270h0M1322 245h0M1310 214h0M1318 227h0M1344 305h0M1392 394h0M1367 352h0M1370 364h0M1356 336h0M1375 371h0M1373 368h0M1381 380h0M1390 397h0M1355 334h0M1366 359h0M1371 359h0M1382 386h0M1352 340h0M1393 397h0M1393 398h0M1356 334h0M1353 333h0M1364 353h0M1420 456h0M1403 428h0M1415 439h0M1416 449h0M1408 433h0M1419 449h0M1427 462h0M1401 430h0M1414 426h0M1403 405h0M1398 398h0M1410 436h0M1398 417h0M1413 424h0M1420 453h0M1398 413h0M1480 579h0M1498 611h0M1432 466h0M1456 525h0M1432 472h0M1476 572h0M1473 563h0M1442 498h0M1505 628h0M1520 647h0M1521 659h0M1511 635h0M1482 576h0M1489 595h0M1436 489h0M1464 540h0M1503 616h0M1516 648h0M1435 478h0M1461 526h0M1432 479h0M1452 507h0M1516 647h0M1442 502h0M1496 604h0M1497 605h0M1511 634h0M1478 561h0M1445 491h0M1482 571h0M1468 537h0M1427 469h0M1534 669h0M1527 670h0M1546 694h0M1584 737h0M1543 693h0M1574 741h0M1546 699h0M1569 723h0M1591 760h0M1553 700h0M1560 721h0M1590 758h0M1552 697h0M1531 668h0M1552 698h0M1546 703h0M1570 724h0M1542 690h0M1531 678h0M1543 692h0M1548 705h0M1543 699h0M1538 682h0M1547 696h0M1532 676h0M1540 678h0M1528 667h0M1634 817h0M1613 787h0M1590 754h0M1639 820h0M1614 787h0M1600 771h0M1634 804h0M1638 832h0M1639 823h0M1620 805h0M1612 789h0M1624 811h0M1626 809h0M1616 793h0M1626 807h0M1614 803h0M1627 800h0M1616 786h0M1611 785h0M1654 865h0M1650 847h0M1664 883h0M1658 880h0M1662 884h0M1648 839h0M1665 897h0M1654 866h0M1651 848h0M1656 870h0M1655 862h0M1666 893h0M1656 850h0M1665 892h0M1682 926h0M1689 948h0M1690 955h0M1689 960h0M1698 972h0M1676 928h0M1701 982h0M1682 955h0M1691 956h0M1686 942h0M1676 934h0M1702 981h0M1702 982h0M1720 1034h0M1705 991h0M1730 1039h0M1725 1030h0M1720 1020h0M1717 1017h0M1712 1005h0M1713 1000h0M1727 1033h0M1711 991h0M1429 281h0M1426 270h0M1443 369h0M1436 318h0M1428 288h0M1441 347h0M1257 191h0M1577 644h0M1531 660h0M1624 633h0M1608 637h0M1646 624h0M1532 656h0M1599 641h0M1641 624h0M1604 771h0M1615 783h0M1597 759h0M1642 832h0M1659 884h0M1647 851h0M1626 799h0M1643 841h0M1648 863h0M1725 571h0M1727 574h0M1754 590h0M1815 579h0M1788 587h0M1858 568h0M1832 575h0M1747 599h0M1829 576h0M1770 591h0M1767 588h0M1797 585h0M1752 594h0M1814 575h0M1469 1064h0M1457 998h0M1469 1072h0M1453 998h0M1446 996h0M1451 977h0M1471 1062h0M1459 1026h0M1442 934h0M1446 966h0M1465 1071h0M1483 1042h0M1475 1045h0M1516 1041h0M1483 1044h0M1481 1045h0M1463 1050h0M1473 1049h0M1464 1049h0M1518 1042h0M1535 1044h0M1581 1050h0M1586 1052h0M1627 1041h0M1658 1033h0M1643 1038h0M1607 1052h0M1649 1033h0M1683 1025h0M1608 1051h0M1502 1189h0M1493 1159h0M1499 1183h0M1508 1213h0M1677 1159h0M1672 1157h0M1667 1139h0M1667 1136h0M1664 1128h0M1682 1192h0M1679 1177h0M1668 1120h0M1678 1166h0M1685 1194h0M1681 1178h0M1690 1207h0M1689 1204h0M1662 1134h0M1663 1124h0M1686 1190h0M1663 1133h0M1690 1219h0M1696 917h0M1711 986h0M1700 954h0M1714 1011h0M1703 962h0M1707 985h0M1710 962h0M1710 998h0M1715 1014h0M1694 910h0M1693 902h0" stroke="#a0a0a0" stroke-width="2" stroke-linecap="square"/><path d="M918 239h0M933 233h0M837 255h0M853 255h0M914 1105h0M918 1100h0M902 1105h0M893 1103h0M967 1087h0M882 1111h0" stroke="#e87a20" stroke-width="2" stroke-linecap="square"/><path d="M891 245h0M887 247h0M879 246h0M848 256h0M845 254h0M928 234h0M909 239h0M900 243h0M853 254h0M941 232h0M933 1096h0M941 1095h0M888 1107h0M875 1111h0M973 1086h0" stroke="#e0681a" stroke-width="2" stroke-linecap="square"/><path d="M869 251h0M834 260h0M891 244h0M938 234h0M872 250h0M944 232h0M871 361h0M867 339h0M863 331h0M878 375h0M894 435h0M897 443h0M893 436h0M891 423h0M889 417h0M895 435h0M900 457h0M896 431h0M931 545h0M923 524h0M931 550h0M922 526h0M920 521h0M951 616h0M941 583h0M945 592h0M947 596h0M945 598h0M937 564h0M936 561h0M950 610h0M976 705h0M966 679h0M967 660h0M975 707h0M965 665h0M966 649h0M982 723h0M970 682h0M980 732h0M971 685h0M978 709h0M980 732h0M981 711h0M978 719h0M999 793h0M984 753h0M995 782h0M1003 808h0M995 778h0M991 762h0M993 780h0M1002 804h0M1000 803h0M988 752h0M974 353h0M967 341h0M974 360h0M963 337h0M993 434h0M986 398h0M982 373h0M999 449h0M994 427h0M985 390h0M997 443h0M979 359h0M993 427h0M999 451h0M995 418h0M990 397h0M1033 519h0M1007 463h0M1020 498h0M1020 500h0M1027 506h0M1034 523h0M1027 514h0M1023 499h0M1007 472h0M1012 488h0M1057 630h0M1044 559h0M1054 623h0M1038 545h0M1059 628h0M1041 549h0M1051 581h0M1047 566h0M1055 611h0M1045 564h0M1041 557h0M1055 623h0M1050 587h0M1052 619h0M1040 549h0M1044 549h0M1042 567h0M1065 679h0M1060 647h0M1075 724h0M1075 730h0M1066 671h0M1073 700h0M1076 738h0M1076 730h0M1063 671h0M1061 649h0M1074 733h0M1081 763h0M1079 744h0M1085 771h0M1084 782h0M695 905h0M654 915h0M673 911h0M690 907h0M663 913h0M551 947h0M679 910h0M606 933h0M601 930h0M588 936h0M592 933h0M591 936h0M613 927h0M565 941h0M563 944h0M580 936h0M603 931h0M649 917h0M579 940h0M553 946h0M644 919h0M679 909h0M621 926h0M803 871h0M738 892h0M701 901h0M846 857h0M855 855h0M779 879h0M845 865h0M717 897h0M702 902h0M701 901h0M771 881h0M829 864h0M835 860h0M830 862h0M803 869h0M858 853h0M820 868h0M807 873h0M706 898h0M818 865h0M747 889h0M783 880h0M795 874h0M791 875h0M806 873h0M811 870h0M741 887h0M703 905h0M867 854h0M822 866h0M785 874h0M769 885h0M806 871h0M850 858h0M867 852h0M843 860h0M1000 814h0M930 836h0M919 836h0M923 838h0M893 844h0M900 844h0M876 851h0M969 824h0M939 832h0M882 849h0M979 822h0M987 819h0M955 830h0M1001 815h0M919 836h0M913 840h0M882 849h0M951 828h0M897 845h0M915 840h0M1004 816h0M969 825h0M928 836h0M882 848h0M872 849h0M913 841h0M1072 796h0M1010 813h0M1090 791h0M1019 813h0M1019 812h0M1005 815h0M1139 776h0M1118 786h0M1127 782h0M1081 795h0M1017 811h0M1141 776h0M1014 814h0M1125 778h0M1059 799h0M1093 788h0M1135 775h0M1042 803h0M1119 783h0M1131 774h0M1046 802h0M1050 802h0M1026 810h0M1075 796h0M1039 807h0M1005 816h0M1127 779h0M1021 811h0M1070 798h0M1116 783h0M1199 758h0M1196 758h0M1147 774h0M1163 767h0M1173 762h0M1183 763h0M1187 759h0M1151 771h0M1151 773h0M1142 774h0M1199 757h0M1179 763h0M659 979h0M616 991h0M647 978h0M632 982h0M602 994h0M626 986h0M671 956h0M669 953h0M672 970h0M531 1013h0M529 1015h0M527 1014h0M524 1003h0M538 1046h0M527 1006h0M572 1025h0M565 1022h0M570 1020h0M568 1017h0M1385 788h0M1412 781h0M1425 776h0M1395 785h0M1409 781h0M1395 786h0M1019 1085h0M1051 1075h0M997 1087h0M1003 1089h0M1008 1079h0M1090 1052h0M1087 1050h0M1119 1041h0M1192 1021h0M1163 1034h0M1173 1030h0M1165 1038h0M1221 1014h0M1236 1017h0M1263 1008h0M1253 1002h0M1241 1004h0M900 1101h0M892 1106h0M918 1100h0M955 1093h0M973 1089h0M961 1093h0M944 1093h0M888 1106h0M1292 996h0M1282 998h0M1294 991h0M1284 997h0M1336 988h0M1322 984h0M1358 983h0M1375 978h0M1358 982h0M1096 364h0M1099 378h0M1089 337h0M1097 370h0M1081 310h0M1084 309h0M1086 340h0M1117 449h0M1102 402h0M1114 438h0M1120 460h0M1121 456h0M1147 543h0M1134 495h0M1158 572h0M1150 530h0M1162 586h0M1163 585h0M1136 507h0M1136 511h0M1141 525h0M1151 559h0M1166 598h0M1184 656h0M1173 626h0M1191 711h0M1195 723h0M1173 630h0M1172 636h0M1166 601h0M1172 619h0M1197 185h0M1180 141h0M1225 244h0M1231 265h0M1189 141h0M1191 165h0M1198 195h0M1209 214h0M1193 169h0M1205 210h0M1201 193h0M1207 181h0M1227 258h0M1220 232h0M1199 173h0M1196 175h0M1216 226h0M1196 168h0M1230 262h0M1230 260h0M1218 231h0M1200 178h0M1235 281h0M1258 358h0M1239 297h0M1261 365h0M1259 355h0M1255 335h0M1247 311h0M1255 336h0M1243 311h0M1278 441h0M1273 435h0M1275 416h0M1268 397h0M1281 453h0M1275 406h0M1283 456h0M1278 417h0M1271 390h0M1270 405h0M1266 406h0M1277 433h0M1272 422h0M1279 443h0M1294 487h0M1273 410h0M1293 493h0M1305 520h0M1311 535h0M1301 513h0M1320 569h0M1328 591h0M1322 560h0M1298 498h0M1330 591h0M1332 584h0M1336 589h0M1321 578h0M1341 610h0M1316 541h0M1330 583h0M1291 501h0M1341 615h0M1322 565h0M1348 662h0M1345 654h0M1382 761h0M1374 743h0M1372 742h0M1359 681h0M1360 691h0M1347 645h0M1350 626h0M1347 642h0M1379 759h0M1360 690h0M1364 704h0M1377 755h0M1366 688h0M1353 657h0M1339 622h0M1349 632h0M1352 664h0M1350 652h0M1262 192h0M1255 185h0M1259 223h0M1247 165h0M1261 206h0M1264 226h0M1264 246h0M1243 160h0M1269 243h0M1255 192h0M1255 197h0M1245 160h0M1259 207h0M1248 161h0M1249 174h0M1271 245h0M1246 162h0M1268 242h0M1257 198h0M1259 237h0M1249 167h0M1240 161h0M1256 206h0M1253 183h0M1251 196h0M1263 227h0M1261 224h0M1271 271h0M1284 294h0M1275 279h0M1277 269h0M1289 309h0M1288 298h0M1305 383h0M1300 363h0M1314 415h0M1308 378h0M1284 303h0M1312 408h0M1300 360h0M1317 419h0M1290 307h0M1284 305h0M1290 305h0M1304 374h0M1305 369h0M1310 394h0M1334 457h0M1316 441h0M1326 453h0M1335 470h0M1326 440h0M1336 467h0M1331 459h0M1319 432h0M1332 463h0M1334 477h0M1342 484h0M1334 477h0M1345 493h0M1338 471h0M1335 478h0M1354 514h0M1349 509h0M1353 499h0M1361 539h0M1352 516h0M1367 534h0M1366 539h0M1359 536h0M1373 545h0M1345 501h0M1349 508h0M1347 508h0M1349 496h0M1363 547h0M1368 554h0M1369 550h0M1368 557h0M1369 540h0M1402 648h0M1384 600h0M1416 676h0M1394 610h0M1408 667h0M1425 699h0M1380 572h0M1381 580h0M1409 663h0M1422 694h0M1387 612h0M1423 702h0M1375 561h0M1374 562h0M1424 708h0M1371 573h0M1408 662h0M1403 665h0M1374 557h0M1422 691h0M1389 604h0M1370 557h0M1419 689h0M1375 591h0M1388 606h0M1385 603h0M1424 693h0M1421 685h0M1381 580h0M1424 700h0M1420 688h0M1407 650h0M1409 654h0M1420 702h0M1381 588h0M1421 686h0M1404 642h0M1442 744h0M1437 732h0M1307 199h0M1286 155h0M1295 182h0M1304 202h0M1292 168h0M1288 170h0M1295 164h0M1300 186h0M1286 163h0M1300 188h0M1300 171h0M1299 168h0M1341 297h0M1319 260h0M1317 221h0M1333 281h0M1325 251h0M1313 213h0M1312 204h0M1345 314h0M1315 229h0M1338 292h0M1321 241h0M1345 292h0M1334 265h0M1330 255h0M1336 279h0M1344 303h0M1316 256h0M1313 211h0M1325 263h0M1333 279h0M1333 280h0M1313 220h0M1324 253h0M1340 302h0M1332 264h0M1390 391h0M1357 326h0M1346 315h0M1353 317h0M1392 399h0M1381 383h0M1370 365h0M1389 397h0M1389 405h0M1350 322h0M1391 393h0M1368 370h0M1368 359h0M1371 362h0M1414 437h0M1426 466h0M1393 408h0M1403 423h0M1410 438h0M1423 454h0M1397 411h0M1425 447h0M1411 433h0M1423 454h0M1391 398h0M1410 423h0M1474 572h0M1430 473h0M1490 599h0M1449 495h0M1471 546h0M1506 627h0M1509 636h0M1485 589h0M1492 597h0M1436 480h0M1451 508h0M1462 530h0M1502 614h0M1459 533h0M1435 473h0M1456 521h0M1451 500h0M1442 503h0M1464 548h0M1477 576h0M1503 621h0M1512 641h0M1462 527h0M1450 519h0M1446 483h0M1518 654h0M1464 539h0M1432 481h0M1518 639h0M1455 523h0M1483 567h0M1503 610h0M1459 526h0M1452 525h0M1561 718h0M1590 751h0M1575 741h0M1550 706h0M1547 689h0M1583 753h0M1549 699h0M1531 670h0M1589 753h0M1539 669h0M1563 718h0M1583 746h0M1574 745h0M1588 755h0M1545 698h0M1541 687h0M1539 682h0M1581 747h0M1576 738h0M1533 678h0M1571 728h0M1598 773h0M1625 808h0M1630 810h0M1640 833h0M1627 805h0M1601 773h0M1631 817h0M1636 817h0M1637 823h0M1643 830h0M1608 785h0M1607 781h0M1632 814h0M1597 771h0M1632 813h0M1596 760h0M1641 835h0M1643 831h0M1659 870h0M1663 873h0M1667 898h0M1647 838h0M1653 865h0M1672 898h0M1657 855h0M1673 912h0M1669 884h0M1651 849h0M1667 903h0M1657 855h0M1653 862h0M1650 849h0M1663 884h0M1670 894h0M1663 879h0M1650 844h0M1675 929h0M1668 899h0M1660 864h0M1675 902h0M1652 843h0M1652 861h0M1691 953h0M1678 925h0M1677 922h0M1682 933h0M1693 957h0M1688 954h0M1684 955h0M1691 945h0M1700 967h0M1694 969h0M1716 1012h0M1732 1039h0M1722 1027h0M1707 997h0M1702 990h0M1729 1036h0M1718 1014h0M1701 987h0M1702 989h0M1705 982h0M1729 1029h0M1444 356h0M1443 357h0M1428 282h0M1422 280h0M1447 359h0M1447 359h0M1436 315h0M1430 286h0M1445 356h0M1448 371h0M1422 274h0M1446 372h0M1440 339h0M1252 195h0M1247 198h0M1246 199h0M1248 198h0M1249 196h0M1544 654h0M1610 634h0M1601 635h0M1539 656h0M1534 659h0M1547 654h0M1530 657h0M1631 627h0M1639 630h0M1558 652h0M1594 757h0M1607 774h0M1618 792h0M1616 783h0M1650 867h0M1636 825h0M1653 873h0M1632 821h0M1635 824h0M1640 848h0M1640 835h0M1661 885h0M1643 837h0M1655 877h0M1740 586h0M1738 583h0M1733 579h0M1744 598h0M1843 573h0M1787 588h0M1807 584h0M1850 570h0M1796 584h0M1776 589h0M1834 575h0M1745 599h0M1844 571h0M1453 973h0M1466 1072h0M1446 966h0M1459 1023h0M1470 1078h0M1465 1049h0M1466 1037h0M1458 1014h0M1463 1052h0M1438 913h0M1466 1077h0M1461 1030h0M1438 911h0M1450 942h0M1459 1034h0M1455 1016h0M1511 1040h0M1464 1047h0M1477 1047h0M1477 1043h0M1582 1051h0M1553 1049h0M1589 1052h0M1578 1048h0M1539 1045h0M1685 1023h0M1671 1026h0M1650 1034h0M1641 1038h0M1652 1030h0M1679 1021h0M1683 1020h0M1653 1029h0M1609 1046h0M1491 1150h0M1505 1208h0M1502 1195h0M1497 1191h0M1503 1206h0M1698 1222h0M1697 1219h0M1673 1149h0M1675 1167h0M1688 1203h0M1693 911h0M1697 938h0M1718 1017h0M1692 914h0M1710 987h0M1701 961h0M1696 924h0M1693 901h0M1698 938h0M1689 905h0" stroke="#c8c8c8" stroke-width="2" stroke-linecap="square"/><path d="M911 245h0M908 240h0M837 258h0M872 247h0M833 260h0M856 253h0M938 232h0M879 376h0M873 363h0M867 345h0M873 364h0M872 361h0M876 379h0M888 414h0M892 422h0M887 402h0M890 416h0M898 442h0M887 411h0M891 421h0M899 455h0M894 432h0M895 432h0M902 459h0M883 398h0M896 450h0M928 542h0M916 494h0M916 502h0M932 558h0M929 542h0M908 474h0M932 557h0M928 539h0M928 533h0M947 606h0M938 572h0M940 572h0M947 599h0M952 612h0M941 575h0M938 580h0M958 621h0M942 580h0M972 691h0M985 738h0M974 680h0M978 710h0M975 699h0M979 708h0M977 719h0M970 665h0M983 734h0M972 677h0M973 694h0M992 760h0M995 776h0M1001 805h0M985 744h0M994 774h0M994 784h0M995 772h0M990 753h0M1000 788h0M992 774h0M941 299h0M970 349h0M963 332h0M967 348h0M959 326h0M948 301h0M957 322h0M985 391h0M983 386h0M980 379h0M978 372h0M975 369h0M999 450h0M990 412h0M985 409h0M1031 524h0M1021 501h0M1007 469h0M1020 491h0M1017 492h0M1003 462h0M1038 534h0M1034 528h0M1007 466h0M1028 510h0M1033 521h0M1046 576h0M1046 575h0M1050 590h0M1048 578h0M1055 638h0M1044 545h0M1054 639h0M1077 739h0M1065 687h0M1065 680h0M1062 656h0M1059 643h0M1067 696h0M1070 695h0M1062 662h0M1068 708h0M1072 720h0M1079 758h0M1084 768h0M1082 762h0M1080 763h0M1084 790h0M638 921h0M597 932h0M537 950h0M575 938h0M608 926h0M604 934h0M696 899h0M614 927h0M545 949h0M612 929h0M576 941h0M623 926h0M542 949h0M631 921h0M570 938h0M544 949h0M669 912h0M554 942h0M621 926h0M696 905h0M681 910h0M666 915h0M616 926h0M577 939h0M566 941h0M629 923h0M654 916h0M641 920h0M570 940h0M665 913h0M574 941h0M580 938h0M617 926h0M829 865h0M846 859h0M837 861h0M774 883h0M849 858h0M789 877h0M778 876h0M770 880h0M871 852h0M764 884h0M854 859h0M837 860h0M788 876h0M706 898h0M749 887h0M857 857h0M702 902h0M837 861h0M773 882h0M724 895h0M773 879h0M802 874h0M764 884h0M757 886h0M903 846h0M987 820h0M934 835h0M961 825h0M995 815h0M962 828h0M888 848h0M949 830h0M909 839h0M962 827h0M963 825h0M901 844h0M908 844h0M876 848h0M1137 777h0M1094 791h0M1091 790h0M1016 813h0M1090 792h0M1095 790h0M1089 789h0M1019 812h0M1090 791h0M1034 805h0M1102 788h0M1081 791h0M1087 791h0M1033 807h0M1042 805h0M1129 779h0M1171 765h0M1153 775h0M1161 771h0M1164 767h0M1138 776h0M1176 764h0M1140 778h0M1186 760h0M668 975h0M654 976h0M640 984h0M610 993h0M670 973h0M655 979h0M617 989h0M645 980h0M650 978h0M634 984h0M614 991h0M620 988h0M654 977h0M668 973h0M669 951h0M670 970h0M672 946h0M670 960h0M534 1035h0M535 1020h0M538 1038h0M523 1001h0M527 1010h0M536 1034h0M571 1030h0M566 1018h0M566 1019h0M566 1016h0M1424 777h0M1424 777h0M1411 780h0M1044 1074h0M1002 1084h0M1063 1063h0M1002 1083h0M1075 1050h0M1139 1044h0M1127 1052h0M1064 1059h0M1066 1059h0M1133 1049h0M1077 1063h0M1110 1057h0M1093 1054h0M1094 1050h0M1095 1058h0M1107 1055h0M1147 1041h0M1195 1028h0M1168 1035h0M1162 1044h0M1177 1032h0M1186 1028h0M1188 1031h0M1207 1025h0M1214 1013h0M1184 1023h0M1152 1031h0M1243 1004h0M1265 1009h0M1235 1015h0M1243 1001h0M1229 1023h0M1229 1008h0M876 1111h0M927 1102h0M886 1114h0M931 1097h0M951 1092h0M945 1090h0M989 1083h0M1271 1001h0M1291 997h0M1318 994h0M1361 976h0M1324 989h0M1087 329h0M1079 318h0M1086 321h0M1083 310h0M1088 351h0M1081 313h0M1087 331h0M1122 472h0M1110 419h0M1110 420h0M1106 404h0M1109 410h0M1111 426h0M1116 430h0M1130 485h0M1157 581h0M1157 572h0M1142 515h0M1158 565h0M1145 524h0M1147 544h0M1130 488h0M1157 569h0M1140 533h0M1137 504h0M1177 629h0M1169 622h0M1191 697h0M1184 655h0M1199 728h0M1177 653h0M1176 637h0M1197 713h0M1181 661h0M1165 603h0M1172 630h0M1183 673h0M1191 704h0M1177 639h0M1219 228h0M1204 180h0M1205 195h0M1230 276h0M1219 228h0M1209 205h0M1234 274h0M1232 271h0M1191 164h0M1225 246h0M1222 237h0M1189 146h0M1213 206h0M1216 229h0M1219 243h0M1208 193h0M1234 277h0M1191 166h0M1230 260h0M1200 178h0M1214 226h0M1195 153h0M1197 178h0M1208 187h0M1224 240h0M1215 210h0M1201 191h0M1217 233h0M1217 227h0M1191 160h0M1227 255h0M1235 262h0M1193 141h0M1241 308h0M1257 349h0M1261 355h0M1260 353h0M1260 361h0M1258 365h0M1245 312h0M1260 361h0M1257 351h0M1243 299h0M1264 353h0M1248 315h0M1247 321h0M1255 356h0M1258 353h0M1235 287h0M1261 368h0M1233 289h0M1250 308h0M1281 426h0M1273 426h0M1274 421h0M1282 479h0M1279 434h0M1297 488h0M1265 407h0M1274 419h0M1279 443h0M1277 427h0M1256 380h0M1283 438h0M1267 375h0M1272 433h0M1282 452h0M1268 398h0M1263 381h0M1324 566h0M1314 547h0M1342 618h0M1298 500h0M1333 601h0M1326 591h0M1317 548h0M1328 580h0M1310 535h0M1308 533h0M1318 566h0M1339 594h0M1326 573h0M1337 599h0M1301 511h0M1327 580h0M1321 564h0M1306 538h0M1323 579h0M1321 562h0M1319 568h0M1326 586h0M1322 555h0M1292 503h0M1310 540h0M1343 639h0M1380 755h0M1358 659h0M1375 742h0M1347 626h0M1353 673h0M1346 618h0M1360 661h0M1359 702h0M1373 747h0M1359 683h0M1355 690h0M1384 752h0M1351 662h0M1361 689h0M1347 657h0M1342 622h0M1373 737h0M1251 175h0M1246 162h0M1251 161h0M1249 158h0M1256 191h0M1253 163h0M1249 159h0M1242 157h0M1271 236h0M1246 161h0M1256 211h0M1253 183h0M1263 207h0M1271 250h0M1269 254h0M1268 248h0M1282 290h0M1278 264h0M1278 281h0M1277 261h0M1272 260h0M1271 254h0M1270 260h0M1315 413h0M1288 321h0M1301 353h0M1307 388h0M1284 309h0M1299 366h0M1301 359h0M1314 407h0M1303 368h0M1316 414h0M1307 377h0M1302 376h0M1311 377h0M1281 316h0M1308 386h0M1312 396h0M1308 373h0M1285 301h0M1316 402h0M1305 352h0M1310 402h0M1292 327h0M1298 358h0M1312 416h0M1320 423h0M1305 378h0M1294 334h0M1290 327h0M1295 344h0M1343 482h0M1332 467h0M1339 492h0M1322 443h0M1332 455h0M1343 490h0M1343 489h0M1320 443h0M1332 457h0M1329 446h0M1334 453h0M1340 488h0M1337 477h0M1334 457h0M1333 454h0M1355 529h0M1358 530h0M1369 548h0M1374 557h0M1365 541h0M1367 553h0M1341 500h0M1368 544h0M1361 538h0M1363 548h0M1354 529h0M1351 496h0M1381 584h0M1410 670h0M1371 562h0M1375 572h0M1399 640h0M1422 710h0M1384 607h0M1371 566h0M1424 703h0M1384 586h0M1386 608h0M1407 639h0M1425 704h0M1418 666h0M1385 595h0M1392 610h0M1380 590h0M1414 683h0M1404 654h0M1423 713h0M1405 648h0M1398 640h0M1398 629h0M1389 589h0M1418 680h0M1377 578h0M1384 587h0M1406 662h0M1447 754h0M1430 718h0M1441 744h0M1429 720h0M1441 728h0M1428 712h0M1444 737h0M1428 714h0M1443 727h0M1447 751h0M1441 731h0M1287 142h0M1296 178h0M1293 162h0M1302 181h0M1291 151h0M1303 199h0M1319 245h0M1338 290h0M1353 312h0M1344 316h0M1319 209h0M1331 259h0M1314 226h0M1336 289h0M1331 268h0M1320 242h0M1344 291h0M1319 239h0M1309 217h0M1321 237h0M1321 245h0M1340 293h0M1309 218h0M1315 234h0M1335 276h0M1304 204h0M1307 227h0M1313 208h0M1324 249h0M1333 264h0M1345 297h0M1327 250h0M1342 306h0M1322 239h0M1323 246h0M1309 206h0M1356 317h0M1377 367h0M1381 387h0M1355 338h0M1375 362h0M1366 353h0M1377 371h0M1345 320h0M1355 333h0M1378 370h0M1359 342h0M1358 345h0M1342 323h0M1370 353h0M1368 352h0M1358 335h0M1391 404h0M1384 385h0M1346 318h0M1429 465h0M1398 410h0M1421 450h0M1411 430h0M1411 440h0M1412 434h0M1404 432h0M1408 419h0M1426 469h0M1401 409h0M1419 439h0M1406 419h0M1408 426h0M1412 441h0M1425 465h0M1397 415h0M1493 615h0M1467 546h0M1495 601h0M1444 503h0M1452 504h0M1514 643h0M1493 595h0M1428 470h0M1459 530h0M1428 472h0M1523 657h0M1448 490h0M1491 603h0M1482 580h0M1517 648h0M1509 622h0M1469 541h0M1482 562h0M1485 584h0M1461 540h0M1485 583h0M1484 568h0M1476 574h0M1532 668h0M1505 615h0M1469 543h0M1507 628h0M1433 478h0M1434 479h0M1499 620h0M1516 650h0M1519 634h0M1439 498h0M1528 663h0M1469 551h0M1517 641h0M1433 476h0M1438 484h0M1524 655h0M1452 517h0M1433 473h0M1523 647h0M1439 494h0M1510 638h0M1470 546h0M1525 653h0M1467 555h0M1474 561h0M1455 531h0M1552 700h0M1573 735h0M1553 702h0M1587 753h0M1533 680h0M1565 718h0M1591 760h0M1581 754h0M1568 729h0M1530 682h0M1564 722h0M1531 670h0M1560 718h0M1585 750h0M1550 693h0M1572 737h0M1564 719h0M1528 668h0M1561 711h0M1585 748h0M1531 670h0M1557 720h0M1558 715h0M1631 818h0M1601 775h0M1626 811h0M1636 816h0M1603 787h0M1634 818h0M1606 783h0M1590 763h0M1594 772h0M1623 800h0M1621 797h0M1614 791h0M1647 831h0M1640 819h0M1605 779h0M1639 820h0M1607 782h0M1653 861h0M1677 920h0M1679 925h0M1658 880h0M1668 906h0M1649 854h0M1659 877h0M1659 870h0M1665 880h0M1652 856h0M1671 906h0M1646 851h0M1648 859h0M1654 868h0M1666 910h0M1645 850h0M1689 954h0M1700 980h0M1694 957h0M1678 927h0M1699 973h0M1684 955h0M1704 981h0M1685 942h0M1681 932h0M1689 966h0M1689 952h0M1704 980h0M1703 985h0M1704 978h0M1685 939h0M1701 978h0M1686 961h0M1698 974h0M1681 925h0M1711 1003h0M1720 1014h0M1721 1016h0M1711 1011h0M1713 1006h0M1713 1001h0M1708 999h0M1712 1003h0M1717 1003h0M1709 998h0M1723 1032h0M1706 997h0M1727 1035h0M1727 1032h0M1434 311h0M1431 313h0M1440 333h0M1442 353h0M1428 298h0M1428 287h0M1436 305h0M1439 329h0M1425 269h0M1448 370h0M1427 283h0M1255 193h0M1240 202h0M1242 203h0M1244 199h0M1566 648h0M1636 626h0M1632 628h0M1600 632h0M1538 658h0M1609 637h0M1622 633h0M1591 638h0M1556 651h0M1562 651h0M1574 643h0M1537 653h0M1617 635h0M1591 640h0M1588 758h0M1614 786h0M1598 761h0M1605 773h0M1663 890h0M1647 853h0M1651 861h0M1648 855h0M1646 863h0M1649 859h0M1659 898h0M1650 862h0M1657 890h0M1660 889h0M1640 838h0M1749 585h0M1750 591h0M1726 572h0M1759 594h0M1745 589h0M1851 572h0M1857 567h0M1769 590h0M1868 565h0M1848 570h0M1742 599h0M1830 576h0M1809 579h0M1739 599h0M1820 575h0M1833 572h0M1792 587h0M1468 1068h0M1448 983h0M1460 1042h0M1448 965h0M1463 1066h0M1441 928h0M1468 1068h0M1465 1062h0M1448 966h0M1450 988h0M1446 944h0M1452 968h0M1437 917h0M1441 914h0M1444 968h0M1454 1005h0M1459 1024h0M1439 953h0M1514 1046h0M1491 1041h0M1518 1043h0M1495 1041h0M1506 1043h0M1592 1054h0M1543 1047h0M1563 1050h0M1533 1044h0M1558 1050h0M1534 1044h0M1592 1052h0M1608 1051h0M1660 1032h0M1684 1022h0M1647 1038h0M1640 1039h0M1674 1024h0M1687 1017h0M1687 1025h0M1606 1055h0M1491 1145h0M1487 1126h0M1486 1131h0M1491 1138h0M1490 1140h0M1495 1169h0M1502 1216h0M1486 1127h0M1485 1121h0M1667 1127h0M1661 1135h0M1677 1170h0M1674 1164h0M1715 1008h0M1695 907h0M1691 912h0M1703 951h0M1712 1000h0M1690 905h0" stroke="#9a9090" stroke-width="2" stroke-linecap="square"/><path d="M872 248h0M935 234h0M921 239h0M887 245h0M892 244h0M875 244h0M871 358h0M866 335h0M872 365h0M879 375h0M868 344h0M862 333h0M863 332h0M894 444h0M892 432h0M882 394h0M886 410h0M883 399h0M882 389h0M890 413h0M903 459h0M882 400h0M903 467h0M879 389h0M908 478h0M914 494h0M930 547h0M932 557h0M929 539h0M907 484h0M906 471h0M925 528h0M945 587h0M947 603h0M941 572h0M955 624h0M955 625h0M954 608h0M942 577h0M978 711h0M984 731h0M963 643h0M981 722h0M973 698h0M982 738h0M1003 816h0M987 759h0M987 756h0M993 772h0M984 746h0M1001 795h0M985 741h0M988 754h0M966 345h0M940 294h0M973 354h0M964 335h0M966 341h0M945 307h0M973 352h0M966 338h0M959 331h0M952 320h0M946 306h0M999 444h0M987 386h0M996 436h0M981 377h0M980 372h0M980 381h0M985 395h0M1000 447h0M992 413h0M986 398h0M1005 466h0M1007 461h0M1022 497h0M1030 512h0M1035 528h0M1006 460h0M1020 497h0M1034 522h0M1027 515h0M1049 599h0M1050 573h0M1055 619h0M1047 574h0M1050 608h0M1045 565h0M1051 604h0M1051 588h0M1058 617h0M1072 697h0M1070 696h0M1058 648h0M1062 654h0M1072 705h0M1069 695h0M1076 722h0M1075 732h0M1066 697h0M1063 676h0M1076 732h0M1078 739h0M1060 667h0M1075 717h0M1076 732h0M1061 682h0M1078 754h0M1084 771h0M1085 784h0M1083 772h0M1081 760h0M1078 747h0M1078 754h0M663 913h0M629 923h0M624 921h0M659 916h0M541 946h0M677 910h0M672 911h0M616 927h0M563 944h0M550 948h0M569 942h0M573 942h0M690 905h0M580 939h0M647 917h0M611 926h0M658 917h0M544 948h0M555 946h0M577 938h0M621 923h0M677 911h0M616 926h0M738 892h0M809 867h0M851 856h0M749 889h0M709 897h0M832 865h0M796 873h0M783 878h0M726 894h0M766 883h0M745 891h0M768 881h0M743 889h0M821 867h0M840 860h0M857 854h0M786 877h0M792 875h0M793 875h0M724 894h0M806 873h0M848 859h0M833 864h0M794 871h0M754 886h0M701 904h0M828 863h0M761 884h0M738 890h0M883 847h0M880 850h0M893 847h0M887 850h0M894 846h0M998 815h0M987 821h0M966 825h0M872 854h0M987 819h0M917 842h0M882 850h0M903 842h0M961 828h0M917 838h0M874 850h0M958 824h0M923 837h0M967 825h0M875 850h0M998 817h0M885 850h0M919 839h0M977 824h0M951 831h0M935 835h0M931 838h0M981 821h0M978 819h0M897 844h0M986 821h0M1042 805h0M1036 808h0M1042 803h0M1060 801h0M1118 781h0M1134 777h0M1032 807h0M1061 799h0M1087 793h0M1109 784h0M1095 788h0M1086 793h0M1063 799h0M1058 800h0M1015 812h0M1038 806h0M1089 791h0M1032 808h0M1119 781h0M1136 776h0M1029 809h0M1132 778h0M1005 817h0M1064 797h0M1051 802h0M1039 805h0M1196 760h0M1169 769h0M1181 760h0M1185 760h0M1205 755h0M1146 774h0M1176 767h0M1154 772h0M1182 763h0M1144 777h0M1201 758h0M1144 775h0M1140 774h0M1206 755h0M604 994h0M671 972h0M636 984h0M640 982h0M611 993h0M626 987h0M662 975h0M627 986h0M671 972h0M655 976h0M649 978h0M673 972h0M625 989h0M650 978h0M670 952h0M669 972h0M669 964h0M533 1036h0M529 1021h0M530 1006h0M534 1024h0M562 997h0M569 1032h0M567 1018h0M1415 780h0M1395 786h0M1387 789h0M1392 784h0M1417 777h0M1058 1067h0M1000 1071h0M1006 1086h0M1042 1070h0M1034 1069h0M1003 1089h0M1034 1068h0M1051 1069h0M1052 1065h0M1139 1040h0M1111 1046h0M1066 1060h0M1116 1040h0M1121 1043h0M1124 1049h0M1106 1052h0M1084 1059h0M1123 1054h0M1144 1045h0M1136 1041h0M1116 1046h0M1139 1045h0M1162 1030h0M1204 1016h0M1173 1037h0M1162 1038h0M1198 1017h0M1175 1035h0M1181 1033h0M1194 1022h0M1275 1002h0M1227 1006h0M1229 1015h0M1267 1000h0M1260 1002h0M1235 1004h0M1270 1006h0M950 1095h0M968 1091h0M988 1089h0M932 1097h0M952 1098h0M942 1102h0M928 1096h0M1296 997h0M1314 994h0M1347 979h0M1358 978h0M1376 975h0M1099 374h0M1087 338h0M1086 326h0M1083 338h0M1104 394h0M1111 424h0M1117 430h0M1106 397h0M1112 415h0M1119 442h0M1115 432h0M1113 423h0M1120 440h0M1116 431h0M1103 401h0M1133 489h0M1137 508h0M1155 561h0M1136 488h0M1133 502h0M1130 485h0M1150 549h0M1130 490h0M1135 505h0M1146 524h0M1137 510h0M1144 537h0M1191 710h0M1182 660h0M1170 619h0M1190 682h0M1180 656h0M1165 601h0M1175 628h0M1172 615h0M1181 662h0M1193 708h0M1178 651h0M1175 625h0M1189 144h0M1217 225h0M1238 272h0M1203 196h0M1219 244h0M1210 203h0M1203 190h0M1230 256h0M1189 152h0M1193 170h0M1210 200h0M1235 270h0M1185 136h0M1217 234h0M1193 161h0M1209 202h0M1226 249h0M1192 160h0M1217 223h0M1206 200h0M1217 213h0M1213 225h0M1193 164h0M1210 218h0M1191 149h0M1221 234h0M1214 221h0M1220 243h0M1264 371h0M1260 347h0M1258 348h0M1243 281h0M1247 327h0M1262 348h0M1255 371h0M1247 323h0M1235 280h0M1252 314h0M1255 343h0M1247 313h0M1264 370h0M1259 369h0M1251 333h0M1247 324h0M1239 298h0M1249 327h0M1245 298h0M1275 443h0M1285 439h0M1274 409h0M1270 395h0M1294 485h0M1279 445h0M1268 416h0M1286 464h0M1261 382h0M1269 423h0M1274 409h0M1288 474h0M1287 484h0M1271 399h0M1290 492h0M1273 395h0M1272 406h0M1273 434h0M1267 405h0M1270 384h0M1284 445h0M1268 383h0M1325 574h0M1317 547h0M1311 547h0M1298 505h0M1342 613h0M1310 528h0M1327 583h0M1303 504h0M1320 565h0M1335 598h0M1321 556h0M1327 570h0M1330 592h0M1322 566h0M1303 515h0M1327 575h0M1309 540h0M1310 551h0M1330 576h0M1333 593h0M1308 526h0M1332 591h0M1314 555h0M1329 583h0M1334 602h0M1341 610h0M1324 562h0M1308 529h0M1338 598h0M1352 658h0M1357 668h0M1373 746h0M1377 746h0M1357 676h0M1339 622h0M1346 652h0M1348 642h0M1361 684h0M1351 643h0M1375 752h0M1370 711h0M1354 662h0M1377 767h0M1374 738h0M1350 657h0M1365 711h0M1380 760h0M1382 748h0M1345 621h0M1373 726h0M1353 654h0M1371 741h0M1380 754h0M1353 669h0M1351 635h0M1263 207h0M1249 159h0M1263 239h0M1253 155h0M1257 192h0M1251 177h0M1260 211h0M1264 234h0M1270 240h0M1254 171h0M1253 186h0M1250 185h0M1263 205h0M1255 181h0M1247 153h0M1254 189h0M1271 243h0M1265 249h0M1281 282h0M1279 290h0M1281 286h0M1275 274h0M1283 284h0M1271 247h0M1317 415h0M1312 408h0M1301 371h0M1308 390h0M1323 423h0M1280 307h0M1293 322h0M1291 313h0M1298 352h0M1298 356h0M1312 411h0M1318 402h0M1313 411h0M1297 344h0M1288 319h0M1290 323h0M1284 298h0M1298 357h0M1300 369h0M1302 378h0M1311 413h0M1285 305h0M1297 342h0M1315 422h0M1336 473h0M1321 446h0M1340 477h0M1324 444h0M1342 492h0M1340 492h0M1323 432h0M1340 489h0M1336 487h0M1332 448h0M1324 453h0M1343 483h0M1363 539h0M1366 550h0M1352 510h0M1366 554h0M1359 524h0M1364 550h0M1369 550h0M1368 553h0M1365 550h0M1390 606h0M1421 685h0M1378 578h0M1413 671h0M1385 582h0M1425 688h0M1387 607h0M1410 674h0M1390 620h0M1383 592h0M1400 637h0M1406 657h0M1375 572h0M1376 579h0M1385 596h0M1377 584h0M1395 637h0M1413 673h0M1416 704h0M1369 558h0M1415 674h0M1397 628h0M1387 599h0M1409 646h0M1388 599h0M1413 674h0M1406 647h0M1424 712h0M1448 751h0M1434 720h0M1434 723h0M1443 746h0M1430 732h0M1298 171h0M1301 189h0M1307 194h0M1291 164h0M1290 161h0M1297 186h0M1306 200h0M1305 192h0M1299 182h0M1304 193h0M1290 166h0M1293 171h0M1296 182h0M1346 303h0M1328 272h0M1339 303h0M1328 253h0M1336 278h0M1332 273h0M1327 256h0M1328 250h0M1340 295h0M1344 317h0M1342 312h0M1341 292h0M1325 250h0M1320 240h0M1329 261h0M1330 279h0M1326 252h0M1368 355h0M1377 383h0M1357 342h0M1349 323h0M1383 397h0M1381 394h0M1371 369h0M1378 371h0M1380 377h0M1357 352h0M1366 351h0M1359 340h0M1364 355h0M1392 398h0M1377 387h0M1383 378h0M1376 364h0M1372 363h0M1372 366h0M1348 323h0M1358 350h0M1377 363h0M1386 400h0M1420 455h0M1420 443h0M1428 461h0M1416 442h0M1399 424h0M1410 420h0M1398 431h0M1391 411h0M1407 430h0M1408 429h0M1421 452h0M1431 461h0M1444 498h0M1428 470h0M1495 607h0M1434 476h0M1476 565h0M1475 570h0M1454 519h0M1507 633h0M1490 576h0M1443 487h0M1437 479h0M1486 596h0M1455 523h0M1512 640h0M1480 578h0M1441 485h0M1509 640h0M1455 522h0M1495 605h0M1497 608h0M1512 643h0M1484 573h0M1495 612h0M1494 611h0M1516 651h0M1456 516h0M1478 567h0M1476 554h0M1432 470h0M1508 627h0M1508 618h0M1510 634h0M1503 606h0M1519 644h0M1456 525h0M1457 524h0M1489 590h0M1498 606h0M1446 502h0M1499 610h0M1429 477h0M1486 585h0M1442 497h0M1505 616h0M1427 467h0M1440 497h0M1584 749h0M1546 695h0M1582 739h0M1566 717h0M1569 728h0M1523 659h0M1567 724h0M1548 702h0M1580 744h0M1572 731h0M1542 688h0M1591 749h0M1542 688h0M1532 678h0M1579 749h0M1594 758h0M1529 673h0M1594 775h0M1631 805h0M1594 767h0M1628 800h0M1596 771h0M1620 797h0M1607 782h0M1610 782h0M1620 807h0M1608 784h0M1631 816h0M1637 825h0M1594 762h0M1605 785h0M1611 782h0M1599 768h0M1655 858h0M1655 856h0M1663 896h0M1673 918h0M1653 849h0M1664 891h0M1674 904h0M1659 883h0M1650 839h0M1651 853h0M1655 857h0M1648 847h0M1665 893h0M1661 879h0M1653 854h0M1673 928h0M1682 940h0M1687 954h0M1699 968h0M1693 952h0M1699 966h0M1705 982h0M1681 931h0M1700 964h0M1698 963h0M1678 928h0M1684 944h0M1712 1001h0M1705 993h0M1721 1024h0M1704 992h0M1710 1008h0M1719 1019h0M1720 1009h0M1726 1032h0M1710 1006h0M1703 990h0M1705 989h0M1716 1019h0M1445 354h0M1424 268h0M1434 314h0M1446 357h0M1250 194h0M1249 197h0M1247 199h0M1251 196h0M1260 191h0M1545 654h0M1528 659h0M1560 650h0M1564 649h0M1526 660h0M1588 642h0M1642 625h0M1611 631h0M1532 655h0M1596 763h0M1591 755h0M1592 758h0M1603 771h0M1646 846h0M1654 872h0M1642 842h0M1634 826h0M1653 871h0M1638 832h0M1652 864h0M1630 808h0M1638 839h0M1659 888h0M1653 871h0M1629 811h0M1747 587h0M1732 581h0M1736 576h0M1730 574h0M1744 600h0M1761 593h0M1734 601h0M1809 577h0M1791 584h0M1835 576h0M1784 589h0M1796 581h0M1775 592h0M1435 917h0M1445 951h0M1446 957h0M1466 1061h0M1451 984h0M1443 932h0M1448 972h0M1451 988h0M1459 1014h0M1467 1070h0M1457 1016h0M1460 1018h0M1457 1015h0M1461 1034h0M1477 1043h0M1519 1041h0M1489 1042h0M1541 1044h0M1549 1047h0M1591 1055h0M1549 1048h0M1544 1045h0M1592 1053h0M1537 1046h0M1626 1046h0M1615 1044h0M1697 1023h0M1647 1033h0M1643 1042h0M1616 1042h0M1703 1019h0M1659 1034h0M1685 1021h0M1651 1034h0M1659 1032h0M1640 1042h0M1692 1015h0M1487 1122h0M1503 1204h0M1510 1219h0M1486 1136h0M1501 1208h0M1504 1207h0M1496 1168h0M1500 1184h0M1497 1179h0M1490 1151h0M1485 1135h0M1692 1216h0M1694 1222h0M1683 1188h0M1664 1127h0M1685 1196h0M1686 1208h0M1677 1161h0M1685 1194h0M1687 1201h0M1678 1171h0M1674 1159h0M1696 1223h0M1667 1135h0M1702 1224h0M1687 1198h0M1709 982h0M1717 1012h0M1702 957h0M1694 901h0M1699 949h0M1713 998h0M1711 1009h0M1692 914h0M1694 921h0M1708 970h0" stroke="#b8b8b8" stroke-width="2" stroke-linecap="square"/><path d="M868 248h0M926 236h0M862 251h0M916 235h0M870 249h0M867 349h0M868 346h0M865 338h0M861 328h0M875 363h0M865 338h0M898 442h0M906 459h0M890 420h0M883 409h0M905 464h0M898 447h0M904 464h0M904 458h0M894 441h0M906 474h0M922 523h0M930 540h0M926 530h0M928 540h0M924 524h0M928 535h0M914 486h0M909 481h0M918 493h0M923 522h0M930 549h0M940 572h0M959 637h0M940 574h0M945 596h0M941 578h0M977 695h0M978 706h0M984 722h0M976 692h0M985 737h0M970 680h0M971 675h0M986 736h0M976 714h0M998 786h0M994 784h0M1003 805h0M988 763h0M990 761h0M999 807h0M997 780h0M957 326h0M944 305h0M948 312h0M946 303h0M951 317h0M948 310h0M965 336h0M969 345h0M955 311h0M946 308h0M944 301h0M961 331h0M994 419h0M1000 449h0M1000 455h0M979 356h0M990 397h0M989 422h0M991 407h0M974 364h0M980 379h0M1000 439h0M994 414h0M996 423h0M996 426h0M1006 466h0M1003 458h0M1016 487h0M1006 460h0M1004 463h0M1037 534h0M1043 539h0M1035 525h0M1015 488h0M1052 621h0M1039 553h0M1046 583h0M1056 624h0M1052 600h0M1045 571h0M1058 619h0M1041 559h0M1056 647h0M1070 684h0M1067 688h0M1060 649h0M1077 719h0M1074 705h0M1061 642h0M1079 740h0M1061 654h0M1077 723h0M1068 705h0M1063 661h0M1079 733h0M1066 664h0M1078 744h0M1079 741h0M1084 779h0M1081 742h0M1081 752h0M1081 763h0M1080 779h0M666 909h0M651 920h0M659 914h0M562 944h0M594 932h0M599 935h0M641 919h0M553 947h0M590 937h0M584 936h0M678 910h0M611 930h0M549 946h0M578 941h0M554 946h0M627 926h0M608 931h0M627 922h0M644 918h0M675 910h0M582 937h0M591 933h0M667 912h0M684 909h0M677 911h0M670 912h0M669 909h0M561 942h0M652 918h0M582 936h0M779 879h0M848 858h0M799 874h0M707 900h0M779 877h0M771 885h0M765 883h0M799 869h0M732 893h0M720 899h0M862 856h0M755 883h0M765 885h0M863 854h0M760 882h0M840 861h0M711 899h0M827 866h0M845 861h0M835 863h0M811 868h0M849 858h0M763 885h0M736 891h0M705 901h0M844 860h0M703 901h0M832 862h0M804 871h0M748 885h0M836 862h0M909 843h0M908 843h0M973 823h0M884 849h0M997 817h0M970 824h0M885 849h0M897 841h0M936 833h0M949 828h0M920 839h0M973 825h0M923 838h0M918 840h0M884 848h0M968 826h0M907 840h0M961 827h0M918 842h0M979 822h0M989 819h0M957 831h0M966 826h0M879 850h0M898 845h0M966 825h0M894 843h0M891 846h0M952 830h0M947 832h0M1125 781h0M1122 783h0M1050 802h0M1028 807h0M1106 788h0M1130 780h0M1109 786h0M1054 801h0M1043 802h0M1027 809h0M1083 792h0M1022 812h0M1055 800h0M1112 783h0M1059 800h0M1075 796h0M1116 783h0M1061 797h0M1041 805h0M1008 813h0M1056 803h0M1057 803h0M1093 791h0M1065 801h0M1141 776h0M1146 773h0M1172 764h0M1163 769h0M1200 755h0M1205 754h0M1195 759h0M640 984h0M615 993h0M609 997h0M611 992h0M622 990h0M627 985h0M612 989h0M629 988h0M635 983h0M656 977h0M669 967h0M670 953h0M672 969h0M670 966h0M671 961h0M669 951h0M669 963h0M672 964h0M669 964h0M532 1017h0M536 1039h0M534 1033h0M530 1018h0M566 1029h0M569 1035h0M564 1015h0M1384 789h0M1411 780h0M1395 784h0M1423 776h0M1402 783h0M1058 1062h0M1008 1088h0M1037 1078h0M1034 1072h0M1050 1061h0M1034 1076h0M1047 1066h0M1053 1072h0M1045 1073h0M1131 1044h0M1107 1042h0M1121 1041h0M1097 1054h0M1087 1055h0M1067 1064h0M1140 1039h0M1073 1061h0M1196 1032h0M1176 1034h0M1173 1025h0M1195 1027h0M1156 1033h0M1204 1022h0M1154 1033h0M1190 1033h0M1151 1039h0M1253 999h0M1232 1012h0M1228 1016h0M1270 999h0M935 1101h0M1308 996h0M1357 982h0M1096 364h0M1078 313h0M1092 355h0M1087 331h0M1081 312h0M1107 416h0M1105 389h0M1106 395h0M1118 438h0M1120 445h0M1124 464h0M1114 429h0M1121 456h0M1126 468h0M1141 527h0M1145 525h0M1152 559h0M1163 589h0M1131 486h0M1160 591h0M1164 592h0M1130 478h0M1130 485h0M1168 595h0M1206 736h0M1203 727h0M1186 681h0M1177 640h0M1193 716h0M1187 677h0M1199 721h0M1167 608h0M1180 670h0M1195 713h0M1173 636h0M1164 608h0M1185 664h0M1185 665h0M1195 711h0M1205 205h0M1191 164h0M1206 190h0M1198 159h0M1207 194h0M1206 198h0M1206 196h0M1203 186h0M1219 244h0M1196 182h0M1181 141h0M1221 255h0M1201 177h0M1200 194h0M1215 231h0M1186 146h0M1191 155h0M1212 209h0M1216 217h0M1224 257h0M1189 161h0M1260 355h0M1246 292h0M1239 294h0M1261 349h0M1256 365h0M1248 315h0M1235 278h0M1239 288h0M1252 340h0M1240 277h0M1246 335h0M1249 314h0M1241 291h0M1262 364h0M1242 296h0M1261 347h0M1255 353h0M1237 286h0M1243 284h0M1270 384h0M1281 440h0M1275 427h0M1264 392h0M1297 490h0M1278 432h0M1278 416h0M1268 410h0M1292 489h0M1297 489h0M1293 484h0M1285 458h0M1283 455h0M1282 431h0M1287 463h0M1290 481h0M1324 574h0M1336 604h0M1307 535h0M1320 573h0M1320 555h0M1337 608h0M1322 563h0M1319 569h0M1335 609h0M1328 585h0M1318 554h0M1340 606h0M1330 579h0M1307 524h0M1302 530h0M1328 587h0M1307 523h0M1367 710h0M1341 625h0M1365 743h0M1356 656h0M1355 669h0M1381 754h0M1339 622h0M1364 701h0M1370 731h0M1356 684h0M1380 764h0M1340 630h0M1357 677h0M1365 716h0M1346 632h0M1367 702h0M1344 635h0M1361 694h0M1358 679h0M1367 725h0M1365 737h0M1361 680h0M1372 731h0M1362 721h0M1368 734h0M1356 673h0M1352 651h0M1356 660h0M1267 245h0M1249 178h0M1253 174h0M1259 225h0M1268 231h0M1254 174h0M1262 224h0M1255 183h0M1257 192h0M1262 226h0M1255 202h0M1256 184h0M1257 228h0M1283 295h0M1274 279h0M1271 281h0M1283 292h0M1277 289h0M1269 272h0M1279 297h0M1278 285h0M1282 284h0M1267 248h0M1277 287h0M1270 263h0M1287 298h0M1284 308h0M1307 378h0M1309 384h0M1304 378h0M1313 393h0M1297 357h0M1316 418h0M1294 341h0M1308 387h0M1294 333h0M1295 344h0M1296 347h0M1304 372h0M1310 400h0M1299 362h0M1314 421h0M1319 422h0M1312 421h0M1291 321h0M1289 321h0M1291 325h0M1315 422h0M1297 353h0M1305 363h0M1286 294h0M1304 348h0M1306 382h0M1291 316h0M1288 307h0M1288 316h0M1288 331h0M1310 399h0M1318 425h0M1284 310h0M1314 421h0M1333 473h0M1342 490h0M1337 475h0M1332 461h0M1331 468h0M1326 450h0M1341 482h0M1341 483h0M1327 461h0M1326 452h0M1338 473h0M1326 449h0M1351 512h0M1369 555h0M1363 552h0M1357 526h0M1350 510h0M1354 510h0M1346 505h0M1360 515h0M1362 526h0M1359 523h0M1362 539h0M1355 521h0M1362 534h0M1344 502h0M1342 500h0M1366 555h0M1404 644h0M1423 708h0M1422 708h0M1426 707h0M1407 646h0M1422 702h0M1374 587h0M1423 693h0M1381 580h0M1428 712h0M1408 662h0M1422 695h0M1396 638h0M1372 572h0M1411 665h0M1388 605h0M1389 616h0M1390 608h0M1389 605h0M1396 626h0M1397 642h0M1408 645h0M1418 699h0M1371 564h0M1418 694h0M1424 694h0M1391 615h0M1420 704h0M1429 710h0M1377 598h0M1414 674h0M1415 701h0M1390 624h0M1425 704h0M1399 657h0M1394 622h0M1415 682h0M1442 735h0M1433 720h0M1448 754h0M1447 743h0M1437 726h0M1430 708h0M1435 728h0M1449 749h0M1441 735h0M1448 752h0M1455 763h0M1285 157h0M1300 177h0M1306 203h0M1293 168h0M1284 156h0M1297 182h0M1294 179h0M1284 145h0M1289 171h0M1307 208h0M1297 169h0M1288 154h0M1282 146h0M1295 177h0M1303 188h0M1307 207h0M1313 225h0M1341 314h0M1311 211h0M1311 222h0M1327 257h0M1316 216h0M1306 204h0M1336 284h0M1317 243h0M1338 293h0M1342 290h0M1325 244h0M1317 229h0M1344 310h0M1324 244h0M1312 210h0M1358 340h0M1387 404h0M1358 337h0M1358 326h0M1349 319h0M1359 333h0M1374 362h0M1380 377h0M1364 356h0M1365 348h0M1361 339h0M1374 358h0M1392 391h0M1391 391h0M1390 404h0M1418 435h0M1417 445h0M1391 401h0M1395 399h0M1415 446h0M1424 464h0M1423 451h0M1400 414h0M1428 470h0M1394 410h0M1480 574h0M1511 641h0M1440 483h0M1441 489h0M1516 645h0M1518 652h0M1483 584h0M1472 556h0M1492 589h0M1515 656h0M1431 466h0M1442 507h0M1506 631h0M1439 492h0M1486 582h0M1447 504h0M1453 503h0M1496 609h0M1480 574h0M1481 577h0M1512 626h0M1491 588h0M1436 494h0M1486 588h0M1439 496h0M1448 511h0M1467 552h0M1477 574h0M1507 616h0M1506 630h0M1441 492h0M1513 649h0M1429 476h0M1521 664h0M1479 577h0M1494 583h0M1494 600h0M1480 558h0M1497 605h0M1431 471h0M1455 518h0M1484 579h0M1551 695h0M1569 729h0M1555 699h0M1589 766h0M1573 730h0M1570 726h0M1560 707h0M1538 682h0M1591 755h0M1548 706h0M1550 697h0M1576 744h0M1577 736h0M1541 690h0M1546 685h0M1533 676h0M1563 716h0M1527 666h0M1599 769h0M1623 800h0M1609 787h0M1617 793h0M1636 823h0M1615 800h0M1596 769h0M1611 783h0M1608 787h0M1626 807h0M1630 810h0M1631 819h0M1637 826h0M1658 872h0M1664 885h0M1676 921h0M1652 856h0M1663 877h0M1673 905h0M1658 866h0M1674 913h0M1650 855h0M1671 915h0M1676 923h0M1653 858h0M1665 887h0M1643 838h0M1650 848h0M1675 921h0M1649 840h0M1651 849h0M1685 941h0M1693 963h0M1677 931h0M1681 933h0M1691 956h0M1701 977h0M1694 968h0M1694 965h0M1682 943h0M1678 931h0M1692 950h0M1700 965h0M1681 934h0M1685 941h0M1724 1025h0M1737 1044h0M1720 1016h0M1726 1016h0M1729 1036h0M1732 1037h0M1444 357h0M1446 357h0M1422 277h0M1430 298h0M1431 307h0M1447 356h0M1425 272h0M1429 287h0M1432 283h0M1431 295h0M1433 312h0M1438 336h0M1244 200h0M1250 195h0M1589 642h0M1540 652h0M1536 656h0M1594 640h0M1605 636h0M1627 631h0M1523 656h0M1599 637h0M1547 653h0M1557 655h0M1610 636h0M1555 652h0M1568 646h0M1521 658h0M1597 641h0M1613 634h0M1616 787h0M1597 765h0M1593 764h0M1611 783h0M1587 751h0M1664 896h0M1657 886h0M1651 869h0M1628 809h0M1621 794h0M1664 897h0M1629 813h0M1644 857h0M1622 809h0M1756 592h0M1737 581h0M1728 577h0M1742 581h0M1788 586h0M1772 590h0M1836 572h0M1835 574h0M1828 576h0M1780 588h0M1864 570h0M1821 578h0M1797 580h0M1771 590h0M1843 571h0M1783 589h0M1834 577h0M1770 590h0M1456 1001h0M1434 919h0M1450 986h0M1459 1027h0M1462 1047h0M1458 1030h0M1446 995h0M1452 985h0M1465 1047h0M1474 1085h0M1466 1058h0M1464 1067h0M1445 951h0M1453 1016h0M1435 915h0M1446 959h0M1505 1045h0M1456 1046h0M1512 1049h0M1507 1044h0M1492 1044h0M1519 1044h0M1488 1043h0M1557 1050h0M1576 1056h0M1579 1052h0M1545 1048h0M1692 1021h0M1685 1022h0M1683 1026h0M1660 1034h0M1619 1041h0M1597 1053h0M1628 1040h0M1661 1028h0M1616 1045h0M1488 1146h0M1497 1176h0M1488 1165h0M1499 1175h0M1504 1198h0M1493 1160h0M1487 1155h0M1485 1122h0M1491 1166h0M1485 1127h0M1494 1166h0M1507 1221h0M1492 1133h0M1678 1161h0M1667 1149h0M1675 1155h0M1670 1132h0M1660 1133h0M1700 936h0M1707 971h0" stroke="#8a8a9a" stroke-width="2" stroke-linecap="square"/><path d="M910 236h0M928 234h0M900 239h0M867 250h0M944 233h0M970 1090h0M922 1105h0M873 1115h0M926 1102h0M901 1104h0M882 1118h0M978 1090h0" stroke="#d85a18" stroke-width="2" stroke-linecap="square"/><path d="M938 232h0M847 256h0M894 244h0M890 244h0M848 260h0M870 355h0M875 365h0M867 347h0M868 346h0M875 371h0M865 332h0M878 377h0M876 387h0M892 427h0M895 446h0M892 418h0M889 415h0M895 425h0M903 459h0M885 397h0M921 524h0M932 548h0M911 488h0M910 488h0M909 485h0M914 501h0M913 488h0M931 548h0M920 513h0M929 546h0M910 487h0M924 515h0M942 585h0M945 594h0M933 561h0M949 604h0M940 564h0M933 567h0M945 588h0M937 570h0M957 625h0M945 597h0M951 608h0M943 587h0M974 697h0M978 722h0M965 657h0M961 642h0M970 684h0M973 689h0M959 647h0M972 695h0M1000 803h0M997 783h0M997 794h0M1000 805h0M989 760h0M995 781h0M959 320h0M948 304h0M947 314h0M973 353h0M969 345h0M952 317h0M945 308h0M974 363h0M981 381h0M1003 453h0M990 418h0M976 372h0M979 370h0M970 361h0M994 415h0M991 404h0M981 392h0M985 397h0M988 402h0M1002 463h0M1015 481h0M1012 473h0M1035 524h0M1005 461h0M1015 485h0M1018 496h0M1013 483h0M1013 489h0M1005 463h0M1039 535h0M1039 531h0M1006 459h0M1019 485h0M1031 517h0M1030 519h0M1010 481h0M1047 575h0M1042 548h0M1058 635h0M1046 561h0M1055 629h0M1047 571h0M1052 601h0M1049 596h0M1055 629h0M1045 578h0M1049 570h0M1050 596h0M1051 598h0M1052 616h0M1055 599h0M1049 593h0M1060 655h0M1058 644h0M1068 697h0M1071 713h0M1057 644h0M1073 710h0M1064 666h0M1071 693h0M1075 734h0M1060 663h0M1061 644h0M1071 696h0M1081 760h0M1079 764h0M1084 777h0M1080 745h0M1079 760h0M578 937h0M557 944h0M568 942h0M695 905h0M628 922h0M621 928h0M551 946h0M626 926h0M673 909h0M639 923h0M576 939h0M594 932h0M602 933h0M577 941h0M550 946h0M687 903h0M682 908h0M605 932h0M652 915h0M686 904h0M562 942h0M652 917h0M746 885h0M832 864h0M779 877h0M792 876h0M734 894h0M867 854h0M808 871h0M758 886h0M822 866h0M831 866h0M744 888h0M837 863h0M702 903h0M779 880h0M776 879h0M805 873h0M808 873h0M823 866h0M859 856h0M807 867h0M704 901h0M706 899h0M745 889h0M715 897h0M980 823h0M904 843h0M982 824h0M952 831h0M916 840h0M996 818h0M941 833h0M914 836h0M982 820h0M933 836h0M974 826h0M926 838h0M977 826h0M927 839h0M895 843h0M937 835h0M965 824h0M955 829h0M993 817h0M1046 804h0M1073 796h0M1127 779h0M1122 781h0M1068 797h0M1062 799h0M1021 812h0M1015 813h0M1111 786h0M1018 811h0M1020 810h0M1039 804h0M1018 814h0M1012 816h0M1007 815h0M1079 793h0M1059 800h0M1110 787h0M1005 816h0M1113 782h0M1095 789h0M1062 801h0M1111 786h0M1144 776h0M1205 755h0M1186 763h0M1182 764h0M1144 775h0M1156 770h0M1160 770h0M1142 773h0M1170 766h0M1152 774h0M1155 772h0M1153 774h0M632 984h0M662 977h0M665 977h0M626 987h0M645 981h0M656 980h0M658 974h0M662 975h0M610 991h0M653 980h0M660 974h0M667 973h0M668 974h0M615 991h0M671 972h0M669 965h0M527 1003h0M534 1042h0M560 1005h0M563 1001h0M1392 783h0M1396 782h0M1381 790h0M1377 795h0M1385 787h0M1046 1065h0M1005 1084h0M1006 1078h0M1048 1061h0M1046 1070h0M1050 1067h0M1025 1070h0M1102 1039h0M1069 1060h0M1076 1058h0M1099 1056h0M1135 1046h0M1106 1047h0M1116 1049h0M1083 1056h0M1139 1041h0M1173 1031h0M1163 1036h0M1177 1029h0M1144 1035h0M1180 1022h0M1202 1015h0M1207 1029h0M1226 1015h0M1258 1000h0M1222 1010h0M1232 1005h0M1234 1014h0M1260 1011h0M1269 999h0M1213 1033h0M1242 1006h0M1247 1006h0M1221 1018h0M907 1103h0M931 1094h0M936 1093h0M907 1105h0M909 1102h0M902 1108h0M908 1107h0M1364 979h0M1346 988h0M1362 985h0M1355 980h0M1338 988h0M1080 309h0M1090 349h0M1093 356h0M1084 309h0M1087 339h0M1087 346h0M1125 469h0M1105 405h0M1124 467h0M1116 441h0M1123 461h0M1117 447h0M1126 468h0M1156 562h0M1143 518h0M1159 580h0M1151 555h0M1139 516h0M1156 553h0M1135 494h0M1144 538h0M1146 537h0M1153 566h0M1131 492h0M1149 547h0M1152 556h0M1169 615h0M1167 614h0M1197 717h0M1191 694h0M1172 635h0M1180 655h0M1186 672h0M1172 628h0M1167 616h0M1169 620h0M1197 176h0M1224 260h0M1221 237h0M1219 225h0M1208 204h0M1205 193h0M1219 224h0M1210 208h0M1217 231h0M1206 178h0M1231 267h0M1239 280h0M1235 277h0M1187 144h0M1211 217h0M1223 250h0M1218 235h0M1209 210h0M1228 264h0M1194 180h0M1229 279h0M1213 196h0M1198 156h0M1232 253h0M1199 178h0M1231 272h0M1212 223h0M1202 186h0M1232 266h0M1182 140h0M1263 370h0M1262 363h0M1258 348h0M1250 309h0M1257 344h0M1247 324h0M1254 338h0M1255 352h0M1244 334h0M1252 335h0M1255 341h0M1260 342h0M1258 360h0M1245 282h0M1239 292h0M1240 298h0M1260 351h0M1282 469h0M1283 467h0M1287 481h0M1290 440h0M1270 401h0M1280 420h0M1292 483h0M1262 373h0M1272 393h0M1266 403h0M1281 446h0M1273 412h0M1290 476h0M1285 450h0M1265 389h0M1269 409h0M1270 399h0M1279 442h0M1271 413h0M1272 423h0M1266 406h0M1282 455h0M1267 406h0M1273 421h0M1292 481h0M1332 604h0M1340 598h0M1305 525h0M1302 524h0M1313 555h0M1294 504h0M1295 501h0M1322 574h0M1321 564h0M1306 523h0M1329 596h0M1315 557h0M1307 530h0M1331 591h0M1312 544h0M1311 544h0M1302 509h0M1340 609h0M1312 544h0M1335 604h0M1342 609h0M1306 542h0M1334 593h0M1362 675h0M1356 682h0M1343 625h0M1349 634h0M1375 756h0M1373 744h0M1367 731h0M1347 639h0M1369 748h0M1347 651h0M1365 707h0M1358 687h0M1372 758h0M1369 731h0M1351 636h0M1372 724h0M1359 682h0M1352 648h0M1343 633h0M1355 653h0M1349 640h0M1358 709h0M1363 704h0M1367 712h0M1345 642h0M1358 670h0M1382 768h0M1380 771h0M1346 621h0M1342 626h0M1365 706h0M1352 667h0M1265 228h0M1254 191h0M1256 206h0M1255 194h0M1259 205h0M1258 206h0M1260 240h0M1265 230h0M1248 159h0M1264 227h0M1258 203h0M1245 158h0M1247 171h0M1266 237h0M1263 236h0M1259 225h0M1254 185h0M1281 282h0M1274 266h0M1275 264h0M1273 266h0M1283 292h0M1281 269h0M1274 267h0M1277 265h0M1271 257h0M1278 283h0M1280 291h0M1293 345h0M1289 339h0M1310 392h0M1294 343h0M1306 386h0M1296 343h0M1320 422h0M1295 353h0M1284 299h0M1310 396h0M1291 329h0M1301 363h0M1316 424h0M1313 398h0M1286 312h0M1313 406h0M1294 356h0M1294 330h0M1287 311h0M1284 300h0M1319 429h0M1307 400h0M1298 342h0M1316 418h0M1289 304h0M1325 451h0M1338 487h0M1344 487h0M1344 483h0M1331 469h0M1329 449h0M1328 448h0M1331 445h0M1347 491h0M1337 473h0M1328 463h0M1367 555h0M1361 533h0M1364 537h0M1363 548h0M1364 556h0M1360 537h0M1360 529h0M1423 693h0M1410 674h0M1424 692h0M1414 682h0M1380 577h0M1399 646h0M1402 640h0M1419 699h0M1407 663h0M1378 561h0M1382 592h0M1398 634h0M1384 584h0M1411 664h0M1412 682h0M1397 631h0M1367 559h0M1402 637h0M1426 703h0M1381 593h0M1417 685h0M1431 713h0M1389 598h0M1405 659h0M1380 575h0M1401 636h0M1414 672h0M1414 684h0M1418 697h0M1434 722h0M1450 760h0M1440 729h0M1437 735h0M1436 730h0M1436 736h0M1443 736h0M1446 752h0M1447 746h0M1443 751h0M1450 764h0M1444 750h0M1440 735h0M1435 719h0M1443 743h0M1302 195h0M1281 142h0M1302 184h0M1295 182h0M1284 148h0M1299 182h0M1306 193h0M1306 196h0M1314 216h0M1335 266h0M1306 207h0M1329 267h0M1342 307h0M1323 257h0M1344 306h0M1310 206h0M1344 298h0M1315 227h0M1321 237h0M1338 294h0M1326 246h0M1339 295h0M1350 312h0M1331 271h0M1325 255h0M1382 385h0M1354 337h0M1370 348h0M1349 332h0M1385 386h0M1361 335h0M1374 364h0M1352 323h0M1356 320h0M1361 341h0M1351 325h0M1372 376h0M1372 368h0M1386 392h0M1387 386h0M1389 392h0M1353 336h0M1380 374h0M1391 399h0M1402 423h0M1396 411h0M1417 454h0M1392 404h0M1408 432h0M1409 428h0M1394 403h0M1406 439h0M1401 427h0M1430 466h0M1420 448h0M1421 467h0M1414 448h0M1458 525h0M1497 599h0M1432 482h0M1488 582h0M1440 487h0M1437 479h0M1442 497h0M1472 554h0M1518 647h0M1512 626h0M1505 614h0M1431 487h0M1505 613h0M1449 513h0M1448 518h0M1433 481h0M1464 535h0M1483 577h0M1521 652h0M1519 643h0M1517 649h0M1525 665h0M1481 580h0M1463 534h0M1473 561h0M1469 553h0M1518 648h0M1450 508h0M1440 495h0M1435 476h0M1486 583h0M1449 518h0M1445 503h0M1499 606h0M1521 645h0M1484 573h0M1431 474h0M1436 489h0M1583 737h0M1581 744h0M1579 739h0M1549 705h0M1574 732h0M1552 702h0M1558 701h0M1581 740h0M1588 751h0M1532 681h0M1585 757h0M1542 680h0M1578 736h0M1522 666h0M1556 698h0M1587 751h0M1591 764h0M1551 699h0M1563 724h0M1557 708h0M1540 688h0M1529 663h0M1536 681h0M1597 769h0M1600 770h0M1635 827h0M1640 825h0M1630 808h0M1613 790h0M1638 831h0M1608 770h0M1631 811h0M1625 803h0M1608 781h0M1603 784h0M1637 817h0M1613 789h0M1601 773h0M1670 909h0M1651 850h0M1678 913h0M1665 885h0M1651 854h0M1665 897h0M1652 858h0M1650 857h0M1662 893h0M1653 847h0M1657 869h0M1653 868h0M1660 877h0M1650 839h0M1668 908h0M1658 856h0M1668 914h0M1675 931h0M1681 945h0M1673 926h0M1689 952h0M1703 971h0M1697 974h0M1710 1019h0M1731 1035h0M1708 995h0M1724 1025h0M1725 1024h0M1710 995h0M1701 984h0M1722 1023h0M1707 1000h0M1734 1040h0M1711 991h0M1723 1028h0M1710 989h0M1713 996h0M1420 265h0M1445 363h0M1423 281h0M1424 273h0M1423 270h0M1442 348h0M1437 330h0M1423 282h0M1439 332h0M1449 371h0M1443 353h0M1423 274h0M1255 195h0M1552 654h0M1570 648h0M1581 644h0M1586 643h0M1646 626h0M1587 643h0M1549 650h0M1544 654h0M1649 623h0M1548 654h0M1588 642h0M1585 754h0M1603 767h0M1591 760h0M1610 778h0M1612 782h0M1591 755h0M1616 789h0M1645 847h0M1624 791h0M1636 824h0M1634 834h0M1651 872h0M1654 877h0M1643 842h0M1634 817h0M1650 861h0M1654 867h0M1735 583h0M1755 589h0M1752 586h0M1745 584h0M1770 590h0M1788 587h0M1782 586h0M1771 592h0M1817 581h0M1814 578h0M1790 587h0M1844 572h0M1865 566h0M1820 574h0M1766 590h0M1756 596h0M1760 594h0M1463 1051h0M1450 1001h0M1450 976h0M1436 920h0M1453 1009h0M1445 939h0M1451 1001h0M1444 961h0M1444 953h0M1463 1020h0M1453 983h0M1454 977h0M1449 974h0M1450 982h0M1469 1063h0M1496 1047h0M1485 1043h0M1464 1046h0M1492 1045h0M1512 1039h0M1505 1047h0M1535 1048h0M1542 1045h0M1528 1047h0M1565 1049h0M1527 1044h0M1570 1051h0M1573 1048h0M1581 1052h0M1610 1049h0M1637 1038h0M1620 1048h0M1604 1052h0M1641 1041h0M1652 1034h0M1501 1195h0M1504 1209h0M1490 1129h0M1502 1202h0M1497 1173h0M1484 1119h0M1498 1167h0M1486 1132h0M1504 1186h0M1491 1155h0M1689 1199h0M1677 1159h0M1661 1124h0M1695 1223h0M1684 1191h0M1688 1200h0M1684 1192h0M1712 995h0M1707 978h0M1717 997h0M1712 994h0M1703 969h0M1713 1004h0M1716 1007h0M1704 964h0M1715 1007h0" stroke="#8c8c8c" stroke-width="2" stroke-linecap="square"/><path d="M1004 809h0M999 803h0M987 764h0M990 768h0M995 784h0M997 797h0M996 789h0M1000 793h0M1004 811h0M997 779h0M1074 753h0M1068 736h0M1070 746h0M1070 744h0M1067 737h0" stroke="#30c030" stroke-width="3" stroke-linecap="round"/><path d="M999 795h0M1000 811h0M993 785h0M992 775h0M991 767h0M995 780h0M995 789h0M990 763h0M988 764h0M992 769h0M992 770h0M995 786h0M999 791h0M1073 753h0M1075 755h0M1076 755h0M1072 755h0M1074 750h0" stroke="#50d040" stroke-width="3" stroke-linecap="round"/><path d="M657 916h0M627 924h0M618 928h0M670 910h0M675 912h0M676 909h0M628 923h0M618 928h0M560 943h0M538 952h0M611 929h0M581 936h0M541 949h0M642 918h0M569 941h0M640 921h0M624 925h0M589 936h0M606 931h0M586 936h0M655 915h0M691 905h0M576 938h0M654 916h0M550 946h0M595 936h0M600 931h0M686 905h0M580 938h0M620 924h0M785 877h0M851 858h0M843 863h0M863 855h0M792 875h0M825 867h0M860 854h0M785 874h0M784 875h0M843 860h0M725 895h0M761 883h0M817 868h0M855 854h0M720 896h0M787 875h0M843 861h0M835 862h0M714 899h0M733 890h0M780 879h0M732 892h0M834 861h0M805 868h0M847 859h0M934 833h0M916 839h0M972 826h0M926 836h0M946 832h0M889 849h0M991 822h0M892 845h0M901 844h0M975 823h0M931 836h0M1072 798h0M1037 806h0M1026 811h0M1037 808h0M1121 781h0M1001 816h0M1007 815h0M1012 815h0M1060 799h0M1128 781h0M1055 798h0M1123 779h0M1034 805h0M1020 811h0M1166 765h0M1139 779h0M1151 771h0M1206 755h0M1186 764h0M1143 776h0M1184 762h0M1181 763h0M1145 774h0M1157 771h0" stroke="#e0e0e0" stroke-width="2" stroke-linecap="square"/><path d="M1016 1082h0M1023 1081h0M1108 1048h0M1119 1042h0M1105 1048h0M1118 1045h0M1137 1040h0M1165 1040h0M1170 1035h0M1170 1034h0M1274 993h0M1270 1000h0" stroke="#30c0a0" stroke-width="4.5" stroke-linecap="round"/><path d="M582 1190h0M588 1210h0M590 1212h0M586 1227h0M615 1190h0M659 1176h0M690 1176h0M732 1154h0M808 1133h0M806 1127h0M887 923h0M896 1012h0" stroke="#b8b8b8" stroke-width="5" stroke-linecap="round"/><path d="M569 1212h0M648 1175h0M690 1183h0M686 1170h0M732 1166h0M724 1152h0M802 1146h0M807 1141h0M852 1133h0M886 929h0M898 1022h0M896 1009h0" stroke="#c8c8c8" stroke-width="5" stroke-linecap="round"/><path d="M566 1193h0M620 1193h0M616 1194h0M656 1169h0M688 1169h0M767 1146h0M814 1153h0M842 1138h0M846 1145h0M842 1129h0M838 1136h0M887 918h0M894 1021h0" stroke="#d82818" stroke-width="5" stroke-linecap="round"/><path d="M573 1198h0M588 1218h0M654 1172h0M698 1188h0M690 1168h0M737 1161h0M843 1132h0" stroke="#9a9090" stroke-width="5" stroke-linecap="round"/><path d="M566 1190h0M617 1195h0M683 1163h0M724 1168h0M798 1150h0M841 1133h0M877 926h0" stroke="#8a8a9a" stroke-width="5" stroke-linecap="round"/><path d="M568 1191h0M608 1194h0M610 1200h0M649 1181h0M648 1182h0M681 1159h0M769 1138h0M844 1124h0M885 940h0M884 927h0M899 1017h0M893 1016h0" stroke="#e03020" stroke-width="5" stroke-linecap="round"/><path d="M571 1187h0M617 1207h0M694 1163h0M727 1153h0M878 922h0M881 932h0" stroke="#8c8c8c" stroke-width="5" stroke-linecap="round"/><path d="M566 1196h0M574 1209h0M586 1205h0M653 1177h0M696 1181h0M730 1158h0M726 1162h0M768 1143h0M808 1137h0M799 1132h0M845 1143h0M845 1137h0M899 999h0M895 1020h0" stroke="#c82a1a" stroke-width="5" stroke-linecap="round"/><path d="M574 1190h0M613 1190h0M607 1188h0M615 1197h0M614 1197h0M654 1186h0M649 1183h0M695 1171h0M769 1146h0M763 1155h0M801 1143h0M889 915h0M880 922h0M882 931h0" stroke="#e87a20" stroke-width="5" stroke-linecap="round"/><path d="M571 1190h0M653 1171h0M769 1164h0M805 1149h0M894 1011h0" stroke="#e8b818" stroke-width="5" stroke-linecap="round"/><path d="M575 1190h0M573 1193h0M591 1216h0M612 1186h0M689 1159h0M729 1166h0M802 1139h0M847 1142h0M840 1109h0M844 1124h0M881 924h0M899 1017h0" stroke="#e0c81a" stroke-width="5" stroke-linecap="round"/><path d="M571 1199h0M588 1212h0M606 1173h0M647 1176h0M647 1170h0M689 1182h0M696 1176h0M732 1165h0M774 1145h0M769 1155h0M770 1155h0M805 1141h0M806 1142h0M837 1132h0M884 915h0M898 988h0M899 1010h0" stroke="#e0681a" stroke-width="5" stroke-linecap="round"/><path d="M583 1213h0M589 1207h0M595 1204h0M657 1186h0M720 1162h0M765 1160h0M766 1137h0M773 1153h0M765 1148h0M772 1146h0M897 1021h0" stroke="#d85a18" stroke-width="5" stroke-linecap="round"/><path d="M588 1228h0M582 1219h0M644 1191h0M729 1161h0" stroke="#d0d828" stroke-width="5" stroke-linecap="round"/><path d="M595 1212h0M893 1003h0" stroke="#30c030" stroke-width="5" stroke-linecap="round"/><path d="M591 1220h0M611 1178h0M740 1165h0M724 1162h0M806 1154h0M893 926h0" stroke="#a0a0a0" stroke-width="5" stroke-linecap="round"/><path d="M1265 147h0M1253 149h0M1260 149h0M1255 149h0M1255 149h0M1275 146h0M1255 149h0M1250 152h0M1258 148h0M1263 147h0M1279 147h0M1275 145h0M1249 152h0M1279 143h0M1263 148h0M1272 144h0M1255 151h0M1274 146h0M1273 147h0M1280 145h0M1268 148h0" stroke="#d0d0d0" stroke-width="2.5" stroke-linecap="square"/><path d="M1266 147h0M1250 152h0M1268 147h0M1268 148h0M1255 150h0M1254 152h0M1279 145h0M1270 145h0M1267 147h0M1256 149h0M1262 147h0M1269 147h0M1279 144h0M1278 146h0M1272 143h0M1249 150h0M1278 145h0M1262 149h0M1264 149h0M1251 152h0" stroke="#e8e8e8" stroke-width="2.5" stroke-linecap="square"/><path d="M1401 905h0M1403 904h0M1408 893h0M1423 874h0M1719 986h0M1719 983h0M1719 982h0M1728 990h0" stroke="#30d030" stroke-width="4.5" stroke-linecap="round"/><path d="M1402 898h0M1693 955h0M1698 973h0M1707 1016h0M1712 1016h0M1719 1014h0M1710 1013h0M1715 1012h0M1718 1008h0M1714 1016h0M1721 993h0M1723 997h0" stroke="#e0e020" stroke-width="4.5" stroke-linecap="round"/><path d="M1776 867h0M1961 1166h0M2008 1152h0M2015 1159h0" stroke="#6a6a8a" stroke-width="2" stroke-linecap="square"/><path d="M1778 870h0M1993 766h0M2095 547h0M2217 557h0M1720 1164h0M1762 1130h0M1898 1133h0M1953 1165h0" stroke="#8a6a5a" stroke-width="2" stroke-linecap="square"/><path d="M1852 832h0M1932 799h0M1990 778h0M2055 738h0M2122 715h0M2189 702h0M2184 701h0M2249 697h0M2259 688h0M2307 689h0M1963 518h0M2285 425h0M1758 1131h0" stroke="#7a7a7a" stroke-width="2" stroke-linecap="square"/><path d="M1720 1008h0M1725 994h0M1716 993h0" stroke="#e06020" stroke-width="4.5" stroke-linecap="round"/><path d="M1300 262L1410 525" stroke="#2828c8" stroke-width="2.2" fill="none"/><path d="M1408 523L1494 818Q1497 846 1475 852L1340 890L1180 935L1080 966Q1050 972 1045 945L1040 893L1024 820L1032 800L1040 790L1006 686L991 626L978 582Q975 555 1006 544" stroke="#6ab020" stroke-width="3" fill="none"/><path d="M1035 752L1042 773" stroke="#d02020" stroke-width="2.5"/><path d="M1016 788L1042 779" stroke="#20c020" stroke-width="2.5"/><text x="1355" y="445" fill="#22cc22" font-size="38" font-family="Liberation Sans">8</text><text x="1390" y="502" fill="#20c0d0" font-size="24" font-family="Liberation Sans">5</text><text x="1291" y="270" fill="#2020d8" font-size="22" font-family="Liberation Sans">0</text><text x="1428" y="612" fill="#2020d8" font-size="22" font-family="Liberation Sans">7</text><text x="1456" y="737" fill="#22cc22" font-size="38" font-family="Liberation Sans">6</text><text x="1490" y="852" fill="#2020d8" font-size="22" font-family="Liberation Sans">1</text><text x="1315" y="898" fill="#20c0d0" font-size="24" font-family="Liberation Sans">1</text><text x="1326" y="903" fill="#22cc22" font-size="38" font-family="Liberation Sans">1</text><text x="1170" y="943" fill="#2020d8" font-size="22" font-family="Liberation Sans">2</text><text x="1102" y="970" fill="#22cc22" font-size="38" font-family="Liberation Sans">2</text><text x="1040" y="987" fill="#2020d8" font-size="22" font-family="Liberation Sans">3</text><text x="1022" y="912" fill="#22cc22" font-size="38" font-family="Liberation Sans">3</text><text x="1017" y="828" fill="#22cc22" font-size="38" font-family="Liberation Sans">4</text><text x="1010" y="832" fill="#2020d8" font-size="22" font-family="Liberation Sans">4</text><text x="1031" y="810" fill="#2020d8" font-size="22" font-family="Liberation Sans">5</text><text x="992" y="695" fill="#22cc22" font-size="38" font-family="Liberation Sans">5</text><text x="986" y="657" fill="#20c0d0" font-size="24" font-family="Liberation Sans">2</text><text x="990" y="562" fill="#22cc22" font-size="34" font-family="Liberation Sans">7</text><text x="1002" y="558" fill="#20c0d0" font-size="26" font-family="Liberation Sans">3</text><text x="1021" y="552" fill="#2020d8" font-size="26" font-family="Liberation Sans">8</text><text x="1034" y="545" fill="#20c0d0" font-size="26" font-family="Liberation Sans">4</text><text x="960" y="570" fill="#2020d8" font-size="26" font-family="Liberation Sans">6</text></svg></div>
<div class="dockhdr" style="left:0;top:1238px;width:2362px;height:28px"></div>
<svg class="a" style="left:4px;top:1242px" width="21" height="21" viewBox="0 0 21 21"><circle cx="10" cy="10" r="8.3" fill="#fff" stroke="#3a3a3a" stroke-width="2"/><path d="M9 4.5V10.5h4.5" fill="none" stroke="#3a3a3a" stroke-width="1.8"/></svg>
<div class="a" style="left:33px;top:1242.5px;font-size:18.5px;letter-spacing:0.4px;color:#2a2a2a">Time</div>
<svg class="a" style="left:2337px;top:1241px" width="21" height="19" viewBox="0 0 21 19"><rect x="0" y="0" width="21" height="20" rx="3" fill="#fafafa" stroke="#9a9a9a" stroke-width="0.8"/><rect x="5" y="4.5" width="11" height="11" rx="1.5" fill="#c8222a"/><path d="M7 6.5l7 7M14 6.5l-7 7" stroke="#ffdede" stroke-width="1.8"/></svg>
<div class="btn" style="left:14px;top:1273px;width:101px;height:31px;text-align:left;padding-left:34px">Pause</div>
<svg class="a" style="left:26px;top:1278px" width="19" height="20" viewBox="0 0 19 20"><rect x="0.5" y="0.5" width="7" height="19" fill="#cfcfcf" stroke="#8a8a8a"/><rect x="11" y="0.5" width="7" height="19" fill="#cfcfcf" stroke="#8a8a8a"/></svg>
<div class="lbl" style="left:136px;top:1278px">Synchronization:</div>
<div class="btn" style="left:288px;top:1273px;width:153px;height:31px;text-align:left;padding-left:7px">Off</div>
<svg class="a" style="left:421px;top:1286px" width="10" height="6" viewBox="0 0 10 6"><path d="M0 0h10L5 5.5z" fill="#444"/></svg>
<div class="lbl" style="left:461.5px;top:1278px">ROS Time:</div>
<div class="field" style="left:559px;top:1273px;width:355px;height:31px">1734675878.62</div>
<div class="lbl" style="left:922.5px;top:1278px">ROS Elapsed:</div>
<div class="field" style="left:1045px;top:1273px;width:354px;height:31px">12527.40</div>
<div class="lbl" style="left:1408px;top:1278px">Wall Time:</div>
<div class="field" style="left:1507px;top:1273px;width:355px;height:31px">1734675878.72</div>
<div class="lbl" style="left:1871px;top:1278px">Wall Elapsed:</div>
<div class="field" style="left:1993px;top:1273px;width:354px;height:31px">12527.41</div>
<div class="btn" style="left:3px;top:1315px;width:66px;height:30px;line-height:32px">Reset</div>
<div class="lbl" style="left:78.5px;top:1318.5px"><b>Left-Click:</b> Rotate. <b>Middle-Click:</b> Move X/Y. <b>Right-Click:</b>: Zoom. <b>Shift</b>: More options.</div>
<div class="lbl" style="left:2308px;top:1318px">10 fps</div></body></html>
